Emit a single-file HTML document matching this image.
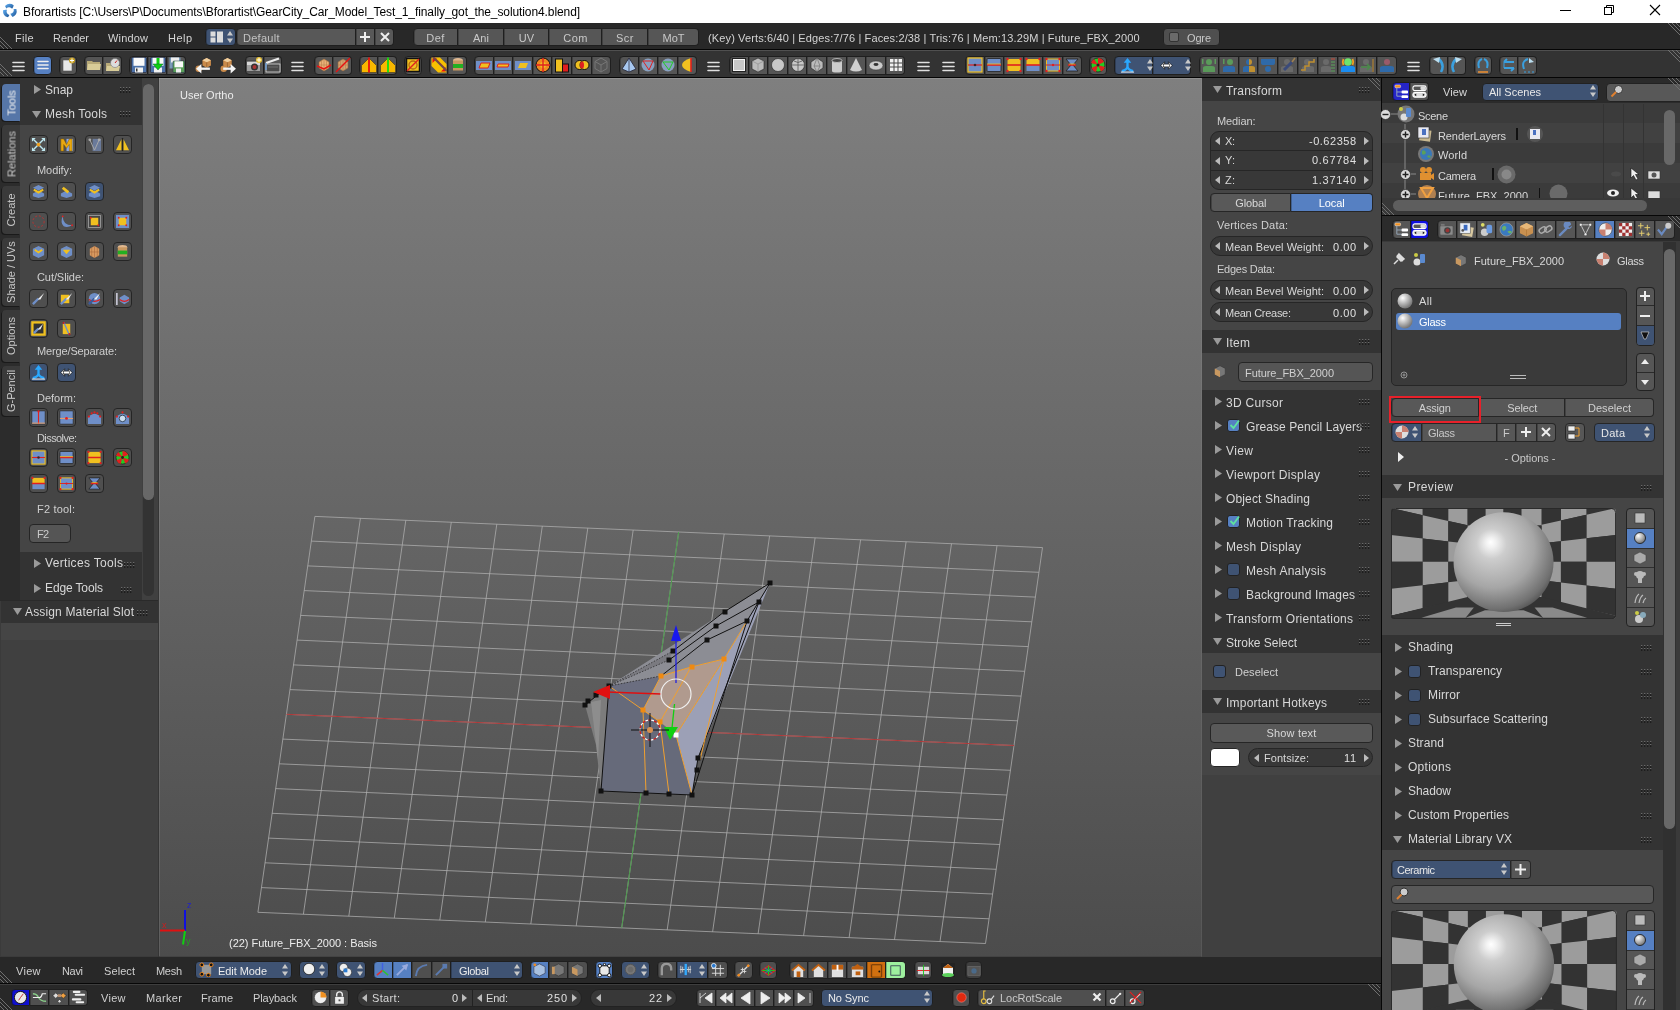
<!DOCTYPE html><html><head><meta charset="utf-8"><style>
html,body{margin:0;padding:0;}
body{width:1680px;height:1010px;overflow:hidden;position:relative;background:#3d3d3d;font-family:"Liberation Sans",sans-serif;}
div{position:absolute;box-sizing:border-box;}
.t{white-space:nowrap;line-height:1.2;-webkit-font-smoothing:antialiased;will-change:transform;}
</style></head><body>
<div style="left:0px;top:0px;width:1680px;height:23px;background:#ffffff;"></div>
<svg style="position:absolute;left:0px;top:0px;overflow:visible;" width="22" height="22" viewBox="0 0 22 22"><defs><linearGradient id="tg" x1="0" y1="0" x2="1" y2="1"><stop offset="0" stop-color="#62b0f4"/><stop offset="1" stop-color="#1a5090"/></linearGradient></defs><path d="M4.99 5.99A6.8 6.8 0 0 1 13.70 5.23Q13.48 7.12 12.10 8.87A3.6 3.6 0 0 0 6.36 8.39Z" fill="url(#tg)"/><path d="M16.37 9.04A6.8 6.8 0 0 1 12.67 16.96Q11.15 15.82 10.32 13.75A3.6 3.6 0 0 0 13.61 9.03Z" fill="url(#tg)"/><path d="M8.04 17.37A6.8 6.8 0 0 1 3.03 10.21Q4.78 9.45 6.98 9.77A3.6 3.6 0 0 0 9.43 14.98Z" fill="url(#tg)"/></svg>
<div class="t" style="left:23px;top:4.64px;font-size:12px;color:#000000;letter-spacing:-0.097px;">Bforartists [C:\Users\P\Documents\Bforartist\GearCity_Car_Model_Test_1_finally_got_the_solution4.blend]</div>
<div style="left:1560px;top:10px;width:11px;height:1px;background:#000;"></div>
<svg style="position:absolute;left:1603px;top:4px;overflow:visible;" width="12" height="12" viewBox="0 0 12 12"><rect x="1.5" y="3.5" width="7" height="7" fill="none" stroke="#000"/><path d="M3.5 3.5V1.5h7v7h-2" fill="none" stroke="#000"/></svg>
<svg style="position:absolute;left:1649px;top:4px;overflow:visible;" width="12" height="12" viewBox="0 0 12 12"><path d="M1 1L11 11M11 1L1 11" stroke="#000" stroke-width="1.1"/></svg>
<div style="left:0px;top:23px;width:1680px;height:27px;background:#282828;"></div>
<div style="left:0px;top:49px;width:1680px;height:1px;background:#050505;"></div>
<svg style="position:absolute;left:0px;top:35px;overflow:visible;" width="14" height="14" viewBox="0 0 14 14"><path d="M0 10 L4 14" stroke="#707070" stroke-width="1"/><path d="M0 6 L8 14" stroke="#707070" stroke-width="1"/><path d="M0 2 L12 14" stroke="#707070" stroke-width="1"/></svg>
<svg style="position:absolute;left:1666px;top:23px;overflow:visible;" width="14" height="14" viewBox="0 0 14 14"><path d="M10 0 L14 4" stroke="#707070" stroke-width="1"/><path d="M6 0 L14 8" stroke="#707070" stroke-width="1"/><path d="M2 0 L14 12" stroke="#707070" stroke-width="1"/></svg>
<div class="t" style="left:15px;top:31.59px;font-size:11px;color:#d4d4d4;letter-spacing:0.259px;">File</div>
<div class="t" style="left:53px;top:31.59px;font-size:11px;color:#d4d4d4;letter-spacing:-0.015px;">Render</div>
<div class="t" style="left:108px;top:31.59px;font-size:11px;color:#d4d4d4;letter-spacing:0.176px;">Window</div>
<div class="t" style="left:168px;top:31.59px;font-size:11px;color:#d4d4d4;letter-spacing:0.459px;">Help</div>
<div style="left:205px;top:28px;width:31px;height:18px;background:#3f5373;border:1px solid #1f1f1f;border-left-width:1px;border-radius:4px 4px 4px 4px;box-shadow:inset 1px 0 0 rgba(0,0,0,0.25)"></div>
<svg style="position:absolute;left:210px;top:31px;overflow:visible;" width="14" height="12" viewBox="0 0 14 12"><rect x="0.5" y="0.5" width="5" height="5" fill="#ddd"/><rect x="0.5" y="6.5" width="5" height="5" fill="#ddd"/><rect x="7" y="0.5" width="6" height="11" fill="#ddd"/></svg>
<svg style="position:absolute;left:226px;top:30px;overflow:visible;" width="8" height="14" viewBox="0 0 8 14"><path d="M4 1L7 5.5H1Z M4 13L7 8.5H1Z" fill="#c8c8c8"/></svg>
<div style="left:236px;top:28px;width:120px;height:18px;background:#585858;border:1px solid #1f1f1f;border-left-width:1px;border-radius:4px 0 0 4px;box-shadow:inset 1px 0 0 rgba(0,0,0,0.25)"></div>
<div style="left:356px;top:28px;width:19px;height:18px;background:#585858;border:1px solid #1f1f1f;border-left-width:0px;border-radius:0 0 0 0;box-shadow:inset 1px 0 0 rgba(0,0,0,0.25)"></div>
<div style="left:375px;top:28px;width:19px;height:18px;background:#585858;border:1px solid #1f1f1f;border-left-width:0px;border-radius:0 4px 4px 0;box-shadow:inset 1px 0 0 rgba(0,0,0,0.25)"></div>
<div class="t" style="left:243px;top:31.59px;font-size:11px;color:#c2c2c2;letter-spacing:0.275px;">Default</div>
<svg style="position:absolute;left:359px;top:31px;overflow:visible;" width="12" height="12" viewBox="0 0 12 12"><path d="M6 1V11M1 6H11" stroke="#eee" stroke-width="2"/></svg>
<svg style="position:absolute;left:379px;top:31px;overflow:visible;" width="12" height="12" viewBox="0 0 12 12"><path d="M2 2L10 10M10 2L2 10" stroke="#eee" stroke-width="2"/></svg>
<div style="left:413px;top:28px;width:45px;height:18px;background:#565656;border:1px solid #1f1f1f;border-left-width:1px;border-radius:4px 0 0 4px;box-shadow:inset 1px 0 0 rgba(0,0,0,0.25)"></div>
<div style="left:458px;top:28px;width:46px;height:18px;background:#565656;border:1px solid #1f1f1f;border-left-width:0px;border-radius:0 0 0 0;box-shadow:inset 1px 0 0 rgba(0,0,0,0.25)"></div>
<div style="left:504px;top:28px;width:45px;height:18px;background:#565656;border:1px solid #1f1f1f;border-left-width:0px;border-radius:0 0 0 0;box-shadow:inset 1px 0 0 rgba(0,0,0,0.25)"></div>
<div style="left:549px;top:28px;width:53px;height:18px;background:#565656;border:1px solid #1f1f1f;border-left-width:0px;border-radius:0 0 0 0;box-shadow:inset 1px 0 0 rgba(0,0,0,0.25)"></div>
<div style="left:602px;top:28px;width:46px;height:18px;background:#565656;border:1px solid #1f1f1f;border-left-width:0px;border-radius:0 0 0 0;box-shadow:inset 1px 0 0 rgba(0,0,0,0.25)"></div>
<div style="left:648px;top:28px;width:51px;height:18px;background:#565656;border:1px solid #1f1f1f;border-left-width:0px;border-radius:0 4px 4px 0;box-shadow:inset 1px 0 0 rgba(0,0,0,0.25)"></div>
<div class="t" style="left:413px;top:31.59px;width:45px;text-align:center;font-size:11px;color:#c8c8c8;letter-spacing:0.441px;">Def</div>
<div class="t" style="left:458px;top:31.59px;width:46px;text-align:center;font-size:11px;color:#c8c8c8;letter-spacing:0.051px;">Ani</div>
<div class="t" style="left:504px;top:31.59px;width:45px;text-align:center;font-size:11px;color:#c8c8c8;letter-spacing:0.219px;">UV</div>
<div class="t" style="left:549px;top:31.59px;width:53px;text-align:center;font-size:11px;color:#c8c8c8;letter-spacing:0.388px;">Com</div>
<div class="t" style="left:602px;top:31.59px;width:46px;text-align:center;font-size:11px;color:#c8c8c8;letter-spacing:0.500px;">Scr</div>
<div class="t" style="left:648px;top:31.59px;width:51px;text-align:center;font-size:11px;color:#c8c8c8;letter-spacing:0.001px;">MoT</div>
<div class="t" style="left:708px;top:31.59px;font-size:11px;color:#d4d4d4;letter-spacing:0.130px;">(Key) Verts:6/40 | Edges:7/76 | Faces:2/38 | Tris:76 | Mem:13.29M | Future_FBX_2000</div>
<div style="left:1163px;top:28px;width:57px;height:18px;background:#4f4f4f;border:1px solid #222;border-radius:4px;"></div>
<div style="left:1169px;top:32px;width:10px;height:10px;background:#6a6a6a;border-radius:2px;border:1px solid #333"></div>
<div class="t" style="left:1187px;top:31.59px;font-size:11px;color:#c8c8c8;letter-spacing:-0.151px;">Ogre</div>
<div style="left:0px;top:50px;width:1680px;height:27px;background:#333333;"></div>
<div style="left:0px;top:50px;width:1680px;height:1px;background:#505050;"></div>
<div style="left:0px;top:77px;width:1680px;height:1px;background:#050505;"></div>
<svg style="position:absolute;left:0px;top:62px;overflow:visible;" width="14" height="14" viewBox="0 0 14 14"><path d="M0 10 L4 14" stroke="#707070" stroke-width="1"/><path d="M0 6 L8 14" stroke="#707070" stroke-width="1"/><path d="M0 2 L12 14" stroke="#707070" stroke-width="1"/></svg>
<svg style="position:absolute;left:1666px;top:50px;overflow:visible;" width="14" height="14" viewBox="0 0 14 14"><path d="M10 0 L14 4" stroke="#707070" stroke-width="1"/><path d="M6 0 L14 8" stroke="#707070" stroke-width="1"/><path d="M2 0 L14 12" stroke="#707070" stroke-width="1"/></svg>
<svg style="position:absolute;left:12px;top:61px;overflow:visible;" width="13" height="11" viewBox="0 0 13 11"><path d="M1 1.5H12M1 5.5H12M1 9.5H12" stroke="#e0e0e0" stroke-width="1.6" stroke-linecap="round"/></svg>
<div style="left:33px;top:56px;width:19px;height:18.5px;background:#5680c2;border:1px solid #1f1f1f;border-left-width:1px;border-radius:4px 4px 4px 4px;box-shadow:inset 1px 0 0 rgba(0,0,0,0.25)"></div>
<svg style="position:absolute;left:34.5px;top:57.25px" width="16" height="16" viewBox="0 0 16 16"><path d="M3 4.5H13M3 8H13M3 11.5H13" stroke="#eee" stroke-width="1.6" stroke-linecap="round"/></svg>
<div style="left:59px;top:56px;width:18px;height:18.5px;background:#555555;border:1px solid #1f1f1f;border-left-width:1px;border-radius:4px 4px 4px 4px;box-shadow:inset 1px 0 0 rgba(0,0,0,0.25)"></div>
<svg style="position:absolute;left:60.0px;top:57.25px" width="16" height="16" viewBox="0 0 16 16"><path d="M3 3H10L12 5V14H3Z" fill="#e8e8e8" stroke="#555" stroke-width="0.6"/><circle cx="12" cy="3.5" r="3" fill="#c8a020"/><path d="M12 1.5V5.5M10 3.5H14" stroke="#fff" stroke-width="1"/></svg>
<div style="left:84px;top:56px;width:19px;height:18.5px;background:#555555;border:1px solid #1f1f1f;border-left-width:1px;border-radius:4px 0 0 4px;box-shadow:inset 1px 0 0 rgba(0,0,0,0.25)"></div>
<div style="left:103px;top:56px;width:19px;height:18.5px;background:#555555;border:1px solid #1f1f1f;border-left-width:0px;border-radius:0 4px 4px 0;box-shadow:inset 1px 0 0 rgba(0,0,0,0.25)"></div>
<svg style="position:absolute;left:85.5px;top:57.25px" width="16" height="16" viewBox="0 0 16 16"><path d="M1 4H6L7 5H14V13H1Z" fill="#b8aa78"/><path d="M2 7H15L14 13H1Z" fill="#d8cc98"/></svg>
<svg style="position:absolute;left:104.5px;top:57.25px" width="16" height="16" viewBox="0 0 16 16"><path d="M1 6H6L7 7H14V14H1Z" fill="#b8aa78"/><path d="M2 9H15L14 14H1Z" fill="#d8cc98"/><circle cx="10" cy="6" r="4.5" fill="#ddd" stroke="#777" stroke-width="0.6"/><path d="M10 6L12 3.5" stroke="#c22" stroke-width="1"/></svg>
<div style="left:129px;top:56px;width:19px;height:18.5px;background:#555555;border:1px solid #1f1f1f;border-left-width:1px;border-radius:4px 0 0 4px;box-shadow:inset 1px 0 0 rgba(0,0,0,0.25)"></div>
<div style="left:148px;top:56px;width:19px;height:18.5px;background:#555555;border:1px solid #1f1f1f;border-left-width:0px;border-radius:0 0 0 0;box-shadow:inset 1px 0 0 rgba(0,0,0,0.25)"></div>
<div style="left:167px;top:56px;width:19px;height:18.5px;background:#555555;border:1px solid #1f1f1f;border-left-width:0px;border-radius:0 4px 4px 0;box-shadow:inset 1px 0 0 rgba(0,0,0,0.25)"></div>
<svg style="position:absolute;left:130.5px;top:57.25px" width="16" height="16" viewBox="0 0 16 16"><rect x="0.5" y="0.5" width="15" height="15" rx="1" fill="#4d72a8" stroke="#223" stroke-width="0.6"/><rect x="2.5" y="0.8" width="11" height="8" fill="#fafafa"/><rect x="4" y="10.5" width="8" height="5" fill="#f0f0f0"/><rect x="5" y="11.5" width="1.5" height="3" fill="#333"/></svg>
<svg style="position:absolute;left:149.5px;top:57.25px" width="16" height="16" viewBox="0 0 16 16"><rect x="0.5" y="0.5" width="15" height="15" rx="1" fill="#4d72a8" stroke="#223" stroke-width="0.6"/><rect x="2.5" y="0.8" width="11" height="8" fill="#fafafa"/><rect x="4" y="10.5" width="8" height="5" fill="#f0f0f0"/><path d="M8 1V10" stroke="#10d010" stroke-width="3"/><path d="M3 7L8 13L13 7Z" fill="#10d010" stroke="#063" stroke-width="0.5"/></svg>
<svg style="position:absolute;left:168.5px;top:57.25px" width="16" height="16" viewBox="0 0 16 16"><rect x="0.5" y="0.5" width="11" height="11" fill="#7a9ab8"/><rect x="2" y="0.5" width="8" height="5" fill="#eee"/><rect x="4" y="4" width="11.5" height="11.5" rx="1" fill="#5aa05a" stroke="#234" stroke-width="0.5"/><rect x="5.5" y="4.3" width="8.5" height="6" fill="#fafafa"/><rect x="7" y="11.5" width="5" height="4" fill="#eee"/></svg>
<svg style="position:absolute;left:195px;top:57px" width="17" height="17" viewBox="0 0 16 16"><path d="M7 3L11 1L15 3V8L11 10L7 8Z" fill="#c98a4a"/><path d="M7 3L11 5L15 3L11 1Z" fill="#f0d0a0"/><path d="M11 5V10" stroke="#8a5a2a" stroke-width="0.6"/><circle cx="3.5" cy="11" r="3" fill="#c98a4a"/><path d="M14 11H4" stroke="#f4f4f4" stroke-width="2.2"/><path d="M1 11L6 6.5V15.5Z" fill="#f4f4f4"/></svg>
<svg style="position:absolute;left:220px;top:57px" width="17" height="17" viewBox="0 0 16 16"><path d="M3 3L7 1L11 3V8L7 10L3 8Z" fill="#c98a4a"/><path d="M3 3L7 5L11 3L7 1Z" fill="#f0d0a0"/><path d="M7 5V10" stroke="#8a5a2a" stroke-width="0.6"/><circle cx="3.5" cy="11" r="3" fill="#c98a4a"/><path d="M3 11H12" stroke="#f4f4f4" stroke-width="2.2"/><path d="M15 11L10 6.5V15.5Z" fill="#f4f4f4"/></svg>
<div style="left:245px;top:56px;width:18.5px;height:18.5px;background:#555555;border:1px solid #1f1f1f;border-left-width:1px;border-radius:4px 0 0 4px;box-shadow:inset 1px 0 0 rgba(0,0,0,0.25)"></div>
<div style="left:263.5px;top:56px;width:18.5px;height:18.5px;background:#555555;border:1px solid #1f1f1f;border-left-width:0px;border-radius:0 4px 4px 0;box-shadow:inset 1px 0 0 rgba(0,0,0,0.25)"></div>
<svg style="position:absolute;left:246.25px;top:57.25px" width="16" height="16" viewBox="0 0 16 16"><rect x="0.5" y="4" width="14" height="10.5" rx="1" fill="#a0a0a0" stroke="#333" stroke-width="0.6"/><rect x="1" y="5" width="13" height="3" fill="#d8d8d8"/><circle cx="8.5" cy="10" r="3.5" fill="#333"/><circle cx="8.5" cy="10" r="2" fill="#a33"/><circle cx="13" cy="3" r="3" fill="#e8c030"/><path d="M13 0.8V5.2M10.8 3H15.2" stroke="#fff" stroke-width="1"/></svg>
<svg style="position:absolute;left:264.75px;top:57.25px" width="16" height="16" viewBox="0 0 16 16"><rect x="1" y="7" width="14" height="8" fill="#4a4a4a" stroke="#ddd" stroke-width="0.8"/><path d="M1 6L14 1.5" stroke="#eee" stroke-width="2.2"/><path d="M1 6V13" stroke="#6a9ad0" stroke-width="1.5"/><path d="M3 10H13" stroke="#888" stroke-width="0.6"/></svg>
<svg style="position:absolute;left:291px;top:61px;overflow:visible;" width="13" height="11" viewBox="0 0 13 11"><path d="M1 1.5H12M1 5.5H12M1 9.5H12" stroke="#e0e0e0" stroke-width="1.6" stroke-linecap="round"/></svg>
<div style="left:314px;top:56px;width:19px;height:18.5px;background:#555555;border:1px solid #1f1f1f;border-left-width:1px;border-radius:4px 0 0 4px;box-shadow:inset 1px 0 0 rgba(0,0,0,0.25)"></div>
<div style="left:333px;top:56px;width:19px;height:18.5px;background:#555555;border:1px solid #1f1f1f;border-left-width:0px;border-radius:0 4px 4px 0;box-shadow:inset 1px 0 0 rgba(0,0,0,0.25)"></div>
<svg style="position:absolute;left:315.5px;top:57.25px" width="16" height="16" viewBox="0 0 16 16"><path d="M3 5L8 2L13 5V11L8 14L3 11Z" fill="#e8b078" stroke="#9a6a3a" stroke-width="0.6"/><path d="M3 8H13M8 2V14M5.5 3.5V12.5M10.5 3.5V12.5" stroke="#b8804a" stroke-width="0.6"/><path d="M1 9L8 12L15 8" stroke="#e81010" stroke-width="1.5" fill="none"/></svg>
<svg style="position:absolute;left:334.5px;top:57.25px" width="16" height="16" viewBox="0 0 16 16"><path d="M3 5L8 2L13 5V11L8 14L3 11Z" fill="#e8b078" stroke="#9a6a3a" stroke-width="0.6" opacity="0.85"/><path d="M3 8H13M8 2V14M5.5 3.5V12.5M10.5 3.5V12.5" stroke="#b8804a" stroke-width="0.6"/><path d="M1 15L15 1" stroke="#e81010" stroke-width="1.4"/></svg>
<div style="left:359px;top:56px;width:19px;height:18.5px;background:#555555;border:1px solid #1f1f1f;border-left-width:1px;border-radius:4px 0 0 4px;box-shadow:inset 1px 0 0 rgba(0,0,0,0.25)"></div>
<div style="left:378px;top:56px;width:19px;height:18.5px;background:#555555;border:1px solid #1f1f1f;border-left-width:0px;border-radius:0 4px 4px 0;box-shadow:inset 1px 0 0 rgba(0,0,0,0.25)"></div>
<svg style="position:absolute;left:360.5px;top:57.25px" width="16" height="16" viewBox="0 0 16 16"><path d="M0.5 15.5V8.5L8 1L15.5 8.5V15.5Z" fill="#f8b800" stroke="#222" stroke-width="0.5"/><path d="M8 0.5V15.5" stroke="#e81010" stroke-width="1.8"/></svg>
<svg style="position:absolute;left:379.5px;top:57.25px" width="16" height="16" viewBox="0 0 16 16"><path d="M0.5 15.5V8.5L8 1L15.5 8.5V15.5Z" fill="#f8b800" stroke="#222" stroke-width="0.5"/><path d="M8 0.5V15.5" stroke="#10e010" stroke-width="1.8"/></svg>
<div style="left:404px;top:56px;width:18px;height:18.5px;background:#555555;border:1px solid #1f1f1f;border-left-width:1px;border-radius:4px 4px 4px 4px;box-shadow:inset 1px 0 0 rgba(0,0,0,0.25)"></div>
<svg style="position:absolute;left:405.0px;top:57.25px" width="16" height="16" viewBox="0 0 16 16"><rect x="1.5" y="1.5" width="13" height="13" fill="#f0c020" stroke="#111" stroke-width="1.5"/><circle cx="8" cy="8" r="4" fill="none" stroke="#b86a10" stroke-width="1.3"/><path d="M2 14L14 2" stroke="#e02020" stroke-width="1.5"/></svg>
<div style="left:429px;top:56px;width:19px;height:18.5px;background:#555555;border:1px solid #1f1f1f;border-left-width:1px;border-radius:4px 0 0 4px;box-shadow:inset 1px 0 0 rgba(0,0,0,0.25)"></div>
<div style="left:448px;top:56px;width:19px;height:18.5px;background:#555555;border:1px solid #1f1f1f;border-left-width:0px;border-radius:0 4px 4px 0;box-shadow:inset 1px 0 0 rgba(0,0,0,0.25)"></div>
<svg style="position:absolute;left:430.5px;top:57.25px" width="16" height="16" viewBox="0 0 16 16"><path d="M0.5 0.5H9L15.5 7V15.5H7L0.5 9Z" fill="#f8c000"/><path d="M1.5 1.5H6L1.5 6Z M14.5 14.5H10L14.5 10Z" fill="#e81010"/><path d="M2 0L16 14" stroke="#555" stroke-width="2.2"/><path d="M2.5 0L16 13.5" stroke="#e81010" stroke-width="0.6"/></svg>
<svg style="position:absolute;left:449.5px;top:57.25px" width="16" height="16" viewBox="0 0 16 16"><ellipse cx="8" cy="3.5" rx="5" ry="2.5" fill="#e0b890"/><rect x="3" y="3.5" width="10" height="10" fill="#c89860"/><rect x="3" y="7" width="10" height="4" fill="#22b022"/></svg>
<div style="left:474px;top:56px;width:19.6px;height:18.5px;background:#555555;border:1px solid #1f1f1f;border-left-width:1px;border-radius:4px 0 0 4px;box-shadow:inset 1px 0 0 rgba(0,0,0,0.25)"></div>
<div style="left:493.6px;top:56px;width:19.6px;height:18.5px;background:#555555;border:1px solid #1f1f1f;border-left-width:0px;border-radius:0 0 0 0;box-shadow:inset 1px 0 0 rgba(0,0,0,0.25)"></div>
<div style="left:513.2px;top:56px;width:19.6px;height:18.5px;background:#555555;border:1px solid #1f1f1f;border-left-width:0px;border-radius:0 0 0 0;box-shadow:inset 1px 0 0 rgba(0,0,0,0.25)"></div>
<div style="left:532.8000000000001px;top:56px;width:19.6px;height:18.5px;background:#555555;border:1px solid #1f1f1f;border-left-width:0px;border-radius:0 0 0 0;box-shadow:inset 1px 0 0 rgba(0,0,0,0.25)"></div>
<div style="left:552.4000000000001px;top:56px;width:19.6px;height:18.5px;background:#555555;border:1px solid #1f1f1f;border-left-width:0px;border-radius:0 0 0 0;box-shadow:inset 1px 0 0 rgba(0,0,0,0.25)"></div>
<div style="left:572.0000000000001px;top:56px;width:19.6px;height:18.5px;background:#555555;border:1px solid #1f1f1f;border-left-width:0px;border-radius:0 0 0 0;box-shadow:inset 1px 0 0 rgba(0,0,0,0.25)"></div>
<div style="left:591.6000000000001px;top:56px;width:19.6px;height:18.5px;background:#555555;border:1px solid #1f1f1f;border-left-width:0px;border-radius:0 4px 4px 0;box-shadow:inset 1px 0 0 rgba(0,0,0,0.25)"></div>
<svg style="position:absolute;left:475.8px;top:57.25px" width="16" height="16" viewBox="0 0 16 16"><rect x="0" y="4" width="16" height="9" fill="#6f8fc8"/><path d="M3 11L5 6H14L12 11Z" fill="#f0c020" stroke="#e02020" stroke-width="1"/></svg>
<svg style="position:absolute;left:495.40000000000003px;top:57.25px" width="16" height="16" viewBox="0 0 16 16"><rect x="0" y="4" width="16" height="9" fill="#6f8fc8"/><path d="M2 10L3 7H14L13 10Z" fill="#f0c020" stroke="#e02020" stroke-width="1"/></svg>
<svg style="position:absolute;left:515.0px;top:57.25px" width="16" height="16" viewBox="0 0 16 16"><rect x="0" y="4" width="16" height="9" fill="#6f8fc8"/><path d="M3 11L5 6H13L11 11Z" fill="#f0c020"/></svg>
<svg style="position:absolute;left:534.6px;top:57.25px" width="16" height="16" viewBox="0 0 16 16"><circle cx="8" cy="8" r="7" fill="#f08a20" stroke="#111" stroke-width="1"/><circle cx="8" cy="8" r="3" fill="#f0c020"/><path d="M8 1V15M1 8H15" stroke="#e02020" stroke-width="1.4"/></svg>
<svg style="position:absolute;left:554.2px;top:57.25px" width="16" height="16" viewBox="0 0 16 16"><rect x="1.5" y="2" width="7" height="13" fill="#f0c020" stroke="#111" stroke-width="1"/><rect x="8.5" y="7" width="6" height="8" fill="#e02020" stroke="#111" stroke-width="1"/></svg>
<svg style="position:absolute;left:573.8000000000001px;top:57.25px" width="16" height="16" viewBox="0 0 16 16"><circle cx="5.5" cy="8" r="4.5" fill="#f0c020" stroke="#111" stroke-width="1"/><circle cx="10.5" cy="8" r="4.5" fill="#f0c020" stroke="#111" stroke-width="1"/><ellipse cx="8" cy="8" rx="2" ry="3.5" fill="#e02020"/></svg>
<svg style="position:absolute;left:593.4000000000001px;top:57.25px" width="16" height="16" viewBox="0 0 16 16"><path d="M8 1L14 4.5V11.5L8 15L2 11.5V4.5Z M2 4.5L8 8L14 4.5 M8 8V15" stroke="#777" stroke-width="1" fill="none"/></svg>
<div style="left:619px;top:56px;width:19.5px;height:18.5px;background:#555555;border:1px solid #1f1f1f;border-left-width:1px;border-radius:4px 0 0 4px;box-shadow:inset 1px 0 0 rgba(0,0,0,0.25)"></div>
<div style="left:638.5px;top:56px;width:19.5px;height:18.5px;background:#555555;border:1px solid #1f1f1f;border-left-width:0px;border-radius:0 0 0 0;box-shadow:inset 1px 0 0 rgba(0,0,0,0.25)"></div>
<div style="left:658.0px;top:56px;width:19.5px;height:18.5px;background:#555555;border:1px solid #1f1f1f;border-left-width:0px;border-radius:0 0 0 0;box-shadow:inset 1px 0 0 rgba(0,0,0,0.25)"></div>
<div style="left:677.5px;top:56px;width:19.5px;height:18.5px;background:#555555;border:1px solid #1f1f1f;border-left-width:0px;border-radius:0 4px 4px 0;box-shadow:inset 1px 0 0 rgba(0,0,0,0.25)"></div>
<svg style="position:absolute;left:620.75px;top:57.25px" width="16" height="16" viewBox="0 0 16 16"><path d="M8 1L15 12L8 15L1 12Z" fill="#a8c8f0" stroke="#223" stroke-width="0.8"/><path d="M8 1V15" stroke="#334" stroke-width="0.8"/></svg>
<svg style="position:absolute;left:640.25px;top:57.25px" width="16" height="16" viewBox="0 0 16 16"><circle cx="8" cy="8" r="6.5" fill="#88a0c0"/><path d="M3 4L13 4L9 13Z" stroke="#e02020" stroke-width="1" fill="none"/></svg>
<svg style="position:absolute;left:659.75px;top:57.25px" width="16" height="16" viewBox="0 0 16 16"><circle cx="8" cy="8" r="6.5" fill="#88a0c0"/><path d="M3 5L13 5L9 13Z" stroke="#22cc22" stroke-width="1" fill="none"/></svg>
<svg style="position:absolute;left:679.25px;top:57.25px" width="16" height="16" viewBox="0 0 16 16"><path d="M12 1Q3 4 3 8Q3 12 12 15Z" fill="#f0c020"/><path d="M12 1V15" stroke="#e02020" stroke-width="1.6"/></svg>
<svg style="position:absolute;left:707px;top:61px;overflow:visible;" width="13" height="11" viewBox="0 0 13 11"><path d="M1 1.5H12M1 5.5H12M1 9.5H12" stroke="#e0e0e0" stroke-width="1.6" stroke-linecap="round"/></svg>
<div style="left:729px;top:56px;width:19.6px;height:18.5px;background:#555555;border:1px solid #1f1f1f;border-left-width:1px;border-radius:4px 0 0 4px;box-shadow:inset 1px 0 0 rgba(0,0,0,0.25)"></div>
<div style="left:748.6px;top:56px;width:19.6px;height:18.5px;background:#555555;border:1px solid #1f1f1f;border-left-width:0px;border-radius:0 0 0 0;box-shadow:inset 1px 0 0 rgba(0,0,0,0.25)"></div>
<div style="left:768.2px;top:56px;width:19.6px;height:18.5px;background:#555555;border:1px solid #1f1f1f;border-left-width:0px;border-radius:0 0 0 0;box-shadow:inset 1px 0 0 rgba(0,0,0,0.25)"></div>
<div style="left:787.8000000000001px;top:56px;width:19.6px;height:18.5px;background:#555555;border:1px solid #1f1f1f;border-left-width:0px;border-radius:0 0 0 0;box-shadow:inset 1px 0 0 rgba(0,0,0,0.25)"></div>
<div style="left:807.4000000000001px;top:56px;width:19.6px;height:18.5px;background:#555555;border:1px solid #1f1f1f;border-left-width:0px;border-radius:0 0 0 0;box-shadow:inset 1px 0 0 rgba(0,0,0,0.25)"></div>
<div style="left:827.0000000000001px;top:56px;width:19.6px;height:18.5px;background:#555555;border:1px solid #1f1f1f;border-left-width:0px;border-radius:0 0 0 0;box-shadow:inset 1px 0 0 rgba(0,0,0,0.25)"></div>
<div style="left:846.6000000000001px;top:56px;width:19.6px;height:18.5px;background:#555555;border:1px solid #1f1f1f;border-left-width:0px;border-radius:0 0 0 0;box-shadow:inset 1px 0 0 rgba(0,0,0,0.25)"></div>
<div style="left:866.2000000000002px;top:56px;width:19.6px;height:18.5px;background:#555555;border:1px solid #1f1f1f;border-left-width:0px;border-radius:0 0 0 0;box-shadow:inset 1px 0 0 rgba(0,0,0,0.25)"></div>
<div style="left:885.8000000000002px;top:56px;width:19.6px;height:18.5px;background:#555555;border:1px solid #1f1f1f;border-left-width:0px;border-radius:0 4px 4px 0;box-shadow:inset 1px 0 0 rgba(0,0,0,0.25)"></div>
<svg style="position:absolute;left:730.8px;top:57.25px" width="16" height="16" viewBox="0 0 16 16"><rect x="1.5" y="1.5" width="13" height="13" fill="#f4f4f4" stroke="#222" stroke-width="1"/><rect x="3" y="3" width="10" height="10" fill="#c8c8c8"/></svg>
<svg style="position:absolute;left:750.4px;top:57.25px" width="16" height="16" viewBox="0 0 16 16"><path d="M8 1L14 4V12L8 15L2 12V4Z" fill="#bbb" stroke="#222" stroke-width="0.6"/><path d="M2 4L8 7L14 4M8 7V15" stroke="#888" stroke-width="0.6" fill="none"/></svg>
<svg style="position:absolute;left:770.0px;top:57.25px" width="16" height="16" viewBox="0 0 16 16"><circle cx="8" cy="8" r="6.5" fill="#c8c8c8" stroke="#222" stroke-width="0.6"/></svg>
<svg style="position:absolute;left:789.6px;top:57.25px" width="16" height="16" viewBox="0 0 16 16"><circle cx="8" cy="8" r="6.5" fill="#c8c8c8" stroke="#222" stroke-width="0.6"/><path d="M8 1.5V14.5M2 8H14M4 4Q8 7 12 4" stroke="#555" stroke-width="0.8" fill="none"/></svg>
<svg style="position:absolute;left:809.2px;top:57.25px" width="16" height="16" viewBox="0 0 16 16"><path d="M8 1L14 5V11L8 15L2 11V5Z" fill="#bbb" stroke="#222" stroke-width="0.6"/><path d="M8 1L5 9H11Z M5 9L8 15L11 9" stroke="#666" stroke-width="0.6" fill="none"/></svg>
<svg style="position:absolute;left:828.8000000000001px;top:57.25px" width="16" height="16" viewBox="0 0 16 16"><rect x="3" y="3" width="10" height="11" fill="#ccc"/><ellipse cx="8" cy="3.5" rx="5" ry="2" fill="#444" stroke="#ccc" stroke-width="0.8"/><ellipse cx="8" cy="14" rx="5" ry="1.5" fill="#ccc"/></svg>
<svg style="position:absolute;left:848.4000000000001px;top:57.25px" width="16" height="16" viewBox="0 0 16 16"><path d="M8 1L14 13Q8 16 2 13Z" fill="#d0d0d0"/></svg>
<svg style="position:absolute;left:868.0000000000001px;top:57.25px" width="16" height="16" viewBox="0 0 16 16"><ellipse cx="8" cy="8.5" rx="7" ry="4.5" fill="#ccc" stroke="#333" stroke-width="0.5"/><ellipse cx="8" cy="7.5" rx="2.5" ry="1.4" fill="#333"/></svg>
<svg style="position:absolute;left:887.6000000000001px;top:57.25px" width="16" height="16" viewBox="0 0 16 16"><rect x="2" y="2" width="12" height="12" fill="#f0f0f0"/><path d="M6 2V14M10 2V14M2 6H14M2 10H14" stroke="#444" stroke-width="1"/></svg>
<svg style="position:absolute;left:917px;top:61px;overflow:visible;" width="13" height="11" viewBox="0 0 13 11"><path d="M1 1.5H12M1 5.5H12M1 9.5H12" stroke="#e0e0e0" stroke-width="1.6" stroke-linecap="round"/></svg>
<svg style="position:absolute;left:942px;top:61px;overflow:visible;" width="13" height="11" viewBox="0 0 13 11"><path d="M1 1.5H12M1 5.5H12M1 9.5H12" stroke="#e0e0e0" stroke-width="1.6" stroke-linecap="round"/></svg>
<div style="left:965px;top:56px;width:19.5px;height:18.5px;background:#555555;border:1px solid #1f1f1f;border-left-width:1px;border-radius:4px 0 0 4px;box-shadow:inset 1px 0 0 rgba(0,0,0,0.25)"></div>
<div style="left:984.5px;top:56px;width:19.5px;height:18.5px;background:#555555;border:1px solid #1f1f1f;border-left-width:0px;border-radius:0 0 0 0;box-shadow:inset 1px 0 0 rgba(0,0,0,0.25)"></div>
<div style="left:1004.0px;top:56px;width:19.5px;height:18.5px;background:#555555;border:1px solid #1f1f1f;border-left-width:0px;border-radius:0 0 0 0;box-shadow:inset 1px 0 0 rgba(0,0,0,0.25)"></div>
<div style="left:1023.5px;top:56px;width:19.5px;height:18.5px;background:#555555;border:1px solid #1f1f1f;border-left-width:0px;border-radius:0 0 0 0;box-shadow:inset 1px 0 0 rgba(0,0,0,0.25)"></div>
<div style="left:1043.0px;top:56px;width:19.5px;height:18.5px;background:#555555;border:1px solid #1f1f1f;border-left-width:0px;border-radius:0 0 0 0;box-shadow:inset 1px 0 0 rgba(0,0,0,0.25)"></div>
<div style="left:1062.5px;top:56px;width:19.5px;height:18.5px;background:#555555;border:1px solid #1f1f1f;border-left-width:0px;border-radius:0 4px 4px 0;box-shadow:inset 1px 0 0 rgba(0,0,0,0.25)"></div>
<svg style="position:absolute;left:966.75px;top:57.25px" width="16" height="16" viewBox="0 0 16 16"><rect x="1" y="1" width="14" height="14" fill="#6f8fc8" stroke="#f0c020" stroke-width="1.2"/><path d="M1 8H15" stroke="#e02020" stroke-width="1.2"/><circle cx="8" cy="8" r="1.3" fill="#422"/></svg>
<svg style="position:absolute;left:986.25px;top:57.25px" width="16" height="16" viewBox="0 0 16 16"><rect x="1" y="1.5" width="14" height="13" rx="1" fill="#6f8fc8" stroke="#222" stroke-width="0.8"/><path d="M1 8H15" stroke="#e02020" stroke-width="1.6"/><path d="M1 7H15" stroke="#f0c020" stroke-width="0.8"/></svg>
<svg style="position:absolute;left:1005.75px;top:57.25px" width="16" height="16" viewBox="0 0 16 16"><rect x="1.5" y="2" width="13" height="12" fill="#f0c020"/><path d="M1 8H15" stroke="#e02020" stroke-width="1.6"/><circle cx="1.5" cy="2" r="1.2" fill="#e02020"/><circle cx="14.5" cy="2" r="1.2" fill="#e02020"/><circle cx="1.5" cy="14" r="1.2" fill="#e02020"/><circle cx="14.5" cy="14" r="1.2" fill="#e02020"/></svg>
<svg style="position:absolute;left:1025.25px;top:57.25px" width="16" height="16" viewBox="0 0 16 16"><rect x="1.5" y="8" width="13" height="6" fill="#6f8fc8"/><rect x="1.5" y="2" width="13" height="6" fill="#f0c020"/><path d="M1 8H15" stroke="#e02020" stroke-width="1.6"/><circle cx="1.5" cy="2" r="1.2" fill="#e02020"/><circle cx="14.5" cy="2" r="1.2" fill="#e02020"/></svg>
<svg style="position:absolute;left:1044.75px;top:57.25px" width="16" height="16" viewBox="0 0 16 16"><rect x="1.5" y="2" width="13" height="12" fill="#6f8fc8" stroke="#f0c020" stroke-width="1"/><path d="M1 8H15" stroke="#e02020" stroke-width="1"/><circle cx="1.5" cy="2" r="1.2" fill="#e02020"/><circle cx="14.5" cy="2" r="1.2" fill="#e02020"/><circle cx="1.5" cy="14" r="1.2" fill="#e02020"/><circle cx="14.5" cy="14" r="1.2" fill="#e02020"/><circle cx="8" cy="8" r="1.2" fill="#e02020"/></svg>
<svg style="position:absolute;left:1064.25px;top:57.25px" width="16" height="16" viewBox="0 0 16 16"><path d="M2 2H14L9 8L14 14H2L7 8Z" fill="#6f8fc8" stroke="#222" stroke-width="0.8"/><path d="M4 8H12" stroke="#e02020" stroke-width="1.6"/><path d="M5 7H11" stroke="#f0c020" stroke-width="0.8"/></svg>
<div style="left:1089px;top:56px;width:18px;height:18.5px;background:#555555;border:1px solid #1f1f1f;border-left-width:1px;border-radius:4px 4px 4px 4px;box-shadow:inset 1px 0 0 rgba(0,0,0,0.25)"></div>
<svg style="position:absolute;left:1090.0px;top:57.25px" width="16" height="16" viewBox="0 0 16 16"><circle cx="8" cy="8" r="7" fill="#22cc22" stroke="#222" stroke-width="0.8"/><path d="M8 8L8 1A7 7 0 0 1 14 5Z M8 8L15 10A7 7 0 0 1 11 14.5Z M8 8L6 15A7 7 0 0 1 1.5 11Z M8 8L1 6A7 7 0 0 1 4 2Z" fill="#e02020"/><circle cx="8" cy="8" r="1.5" fill="#222"/></svg>
<div style="left:1114px;top:56px;width:39px;height:18.5px;background:#3f5373;border:1px solid #1f1f1f;border-left-width:1px;border-radius:4px 0 0 4px;box-shadow:inset 1px 0 0 rgba(0,0,0,0.25)"></div>
<div style="left:1153px;top:56px;width:38px;height:18.5px;background:#3f5373;border:1px solid #1f1f1f;border-left-width:0px;border-radius:0 4px 4px 0;box-shadow:inset 1px 0 0 rgba(0,0,0,0.25)"></div>
<svg style="position:absolute;left:1120px;top:58px" width="15" height="15" viewBox="0 0 16 16"><path d="M8 2V9Q8 12 2 14M8 9Q8 12 14 14" stroke="#2aa8ff" stroke-width="2.5" fill="none"/><path d="M8 0L12 5H4Z" fill="#2aa8ff"/><path d="M1 15H15" stroke="#fff" stroke-width="1"/></svg>
<svg style="position:absolute;left:1146px;top:58px;overflow:visible;" width="8" height="14" viewBox="0 0 8 14"><path d="M4 1L7 5.5H1Z M4 13L7 8.5H1Z" fill="#c8c8c8"/></svg>
<svg style="position:absolute;left:1159px;top:58px" width="15" height="15" viewBox="0 0 16 16"><path d="M2 8L6 4V12Z M14 8L10 4V12Z" fill="#fff" stroke="#111" stroke-width="0.8"/><rect x="5" y="6.5" width="6" height="3" fill="#fff" stroke="#111" stroke-width="0.6"/></svg>
<svg style="position:absolute;left:1184px;top:58px;overflow:visible;" width="8" height="14" viewBox="0 0 8 14"><path d="M4 1L7 5.5H1Z M4 13L7 8.5H1Z" fill="#c8c8c8"/></svg>
<div style="left:1199px;top:56px;width:19.8px;height:18.5px;background:#555555;border:1px solid #1f1f1f;border-left-width:1px;border-radius:4px 0 0 4px;box-shadow:inset 1px 0 0 rgba(0,0,0,0.25)"></div>
<div style="left:1218.8px;top:56px;width:19.8px;height:18.5px;background:#555555;border:1px solid #1f1f1f;border-left-width:0px;border-radius:0 0 0 0;box-shadow:inset 1px 0 0 rgba(0,0,0,0.25)"></div>
<div style="left:1238.6px;top:56px;width:19.8px;height:18.5px;background:#555555;border:1px solid #1f1f1f;border-left-width:0px;border-radius:0 0 0 0;box-shadow:inset 1px 0 0 rgba(0,0,0,0.25)"></div>
<div style="left:1258.3999999999999px;top:56px;width:19.8px;height:18.5px;background:#555555;border:1px solid #1f1f1f;border-left-width:0px;border-radius:0 0 0 0;box-shadow:inset 1px 0 0 rgba(0,0,0,0.25)"></div>
<div style="left:1278.1999999999998px;top:56px;width:19.8px;height:18.5px;background:#555555;border:1px solid #1f1f1f;border-left-width:0px;border-radius:0 0 0 0;box-shadow:inset 1px 0 0 rgba(0,0,0,0.25)"></div>
<div style="left:1297.9999999999998px;top:56px;width:19.8px;height:18.5px;background:#555555;border:1px solid #1f1f1f;border-left-width:0px;border-radius:0 0 0 0;box-shadow:inset 1px 0 0 rgba(0,0,0,0.25)"></div>
<div style="left:1317.7999999999997px;top:56px;width:19.8px;height:18.5px;background:#555555;border:1px solid #1f1f1f;border-left-width:0px;border-radius:0 0 0 0;box-shadow:inset 1px 0 0 rgba(0,0,0,0.25)"></div>
<div style="left:1337.5999999999997px;top:56px;width:19.8px;height:18.5px;background:#565656;border:1px solid #1f1f1f;border-left-width:0px;border-radius:0 0 0 0;box-shadow:inset 1px 0 0 rgba(0,0,0,0.25)"></div>
<div style="left:1357.3999999999996px;top:56px;width:19.8px;height:18.5px;background:#555555;border:1px solid #1f1f1f;border-left-width:0px;border-radius:0 0 0 0;box-shadow:inset 1px 0 0 rgba(0,0,0,0.25)"></div>
<div style="left:1377.1999999999996px;top:56px;width:19.8px;height:18.5px;background:#555555;border:1px solid #1f1f1f;border-left-width:0px;border-radius:0 4px 4px 0;box-shadow:inset 1px 0 0 rgba(0,0,0,0.25)"></div>
<svg style="position:absolute;left:1200.9px;top:57.25px" width="16" height="16" viewBox="0 0 16 16"><circle cx="8" cy="5" r="3" fill="#5a9a5a"/><path d="M2 15V11Q2 9 5 9H11Q14 9 14 11V15Z" fill="#5a9a5a"/><rect x="1" y="2" width="1.5" height="5" fill="#5a9a5a"/><rect x="13.5" y="2" width="1.5" height="5" fill="#5a9a5a"/></svg>
<svg style="position:absolute;left:1220.7px;top:57.25px" width="16" height="16" viewBox="0 0 16 16"><circle cx="9" cy="5" r="3" fill="#5a9a5a"/><path d="M2 15V11Q2 9 5 9H11Q14 9 14 11V15Z" fill="#2f6aaa"/><rect x="2" y="2" width="1.5" height="5" fill="#5a9a5a"/></svg>
<svg style="position:absolute;left:1240.5px;top:57.25px" width="16" height="16" viewBox="0 0 16 16"><path d="M8 2A3 3 0 0 0 8 8Z" fill="#2f6aaa"/><path d="M8 2A3 3 0 0 1 8 8Z" fill="#c09030"/><path d="M2 15V11Q2 9 5 9H8V15Z" fill="#2f6aaa"/><path d="M8 9H11Q14 9 14 11V15H8Z" fill="#c09030"/></svg>
<svg style="position:absolute;left:1260.3px;top:57.25px" width="16" height="16" viewBox="0 0 16 16"><path d="M1 2H15V6Q15 8 12 8H4Q1 8 1 6Z" fill="#2f6aaa"/><circle cx="8" cy="12" r="3" fill="#2f6aaa"/></svg>
<svg style="position:absolute;left:1280.1px;top:57.25px" width="16" height="16" viewBox="0 0 16 16"><circle cx="7" cy="5" r="3" fill="#6a6a6a"/><path d="M1 15V11Q1 9 4 9H10Q13 9 13 11V15Z" fill="#6a6a6a"/><path d="M4 13L12 5" stroke="#3a4a7a" stroke-width="3"/><path d="M12 5L15 1" stroke="#a08050" stroke-width="1.5"/></svg>
<svg style="position:absolute;left:1299.8999999999999px;top:57.25px" width="16" height="16" viewBox="0 0 16 16"><circle cx="7" cy="5" r="3" fill="#6a6a6a"/><path d="M2 15V11Q2 9 5 9H11Q14 9 14 11V15Z" fill="#6a6a6a"/><path d="M1 13H5V9H9V5H14V2" stroke="#c09030" stroke-width="1.5" fill="none"/></svg>
<svg style="position:absolute;left:1319.6999999999998px;top:57.25px" width="16" height="16" viewBox="0 0 16 16"><circle cx="6" cy="5" r="3" fill="#6a6a6a"/><path d="M1 15V11Q1 9 4 9H8Q11 9 11 11V15Z" fill="#6a6a6a"/><path d="M11 2H15M11 5H15M11 8H15M11 11H15M11 14H15" stroke="#5a8a5a" stroke-width="1.5"/><path d="M11 2H15" stroke="#a04040" stroke-width="1.5"/></svg>
<svg style="position:absolute;left:1339.4999999999998px;top:57.25px" width="16" height="16" viewBox="0 0 16 16"><circle cx="8" cy="5" r="3.8" fill="#6de46d"/><path d="M3.5 2Q2 5 3.5 8M12.5 2Q14 5 12.5 8" stroke="#f0a020" stroke-width="1.8" fill="none"/><path d="M1 15V11Q1 9 4 9H12Q15 9 15 11V15Z" fill="#1a8cf0"/></svg>
<svg style="position:absolute;left:1359.2999999999997px;top:57.25px" width="16" height="16" viewBox="0 0 16 16"><circle cx="7" cy="5" r="3" fill="#6a6a6a"/><path d="M1 15V11Q1 9 4 9H10Q13 9 13 11V15Z" fill="#6a6a6a"/><path d="M2 10H11M8 7L11 10L8 13" stroke="#4a8a4a" stroke-width="1.6" fill="none"/><path d="M14 2V15" stroke="#b08030" stroke-width="1.2"/></svg>
<svg style="position:absolute;left:1379.0999999999997px;top:57.25px" width="16" height="16" viewBox="0 0 16 16"><circle cx="8" cy="5" r="3" fill="#9a5a6a"/><path d="M1 15V11Q1 9 4 9H12Q15 9 15 11V15Z" fill="#2f6aaa"/></svg>
<svg style="position:absolute;left:1407px;top:61px;overflow:visible;" width="13" height="11" viewBox="0 0 13 11"><path d="M1 1.5H12M1 5.5H12M1 9.5H12" stroke="#e0e0e0" stroke-width="1.6" stroke-linecap="round"/></svg>
<div style="left:1429px;top:56px;width:18.5px;height:18.5px;background:#555555;border:1px solid #1f1f1f;border-left-width:1px;border-radius:4px 0 0 4px;box-shadow:inset 1px 0 0 rgba(0,0,0,0.25)"></div>
<div style="left:1447.5px;top:56px;width:18.5px;height:18.5px;background:#555555;border:1px solid #1f1f1f;border-left-width:0px;border-radius:0 4px 4px 0;box-shadow:inset 1px 0 0 rgba(0,0,0,0.25)"></div>
<svg style="position:absolute;left:1430.25px;top:57.25px" width="16" height="16" viewBox="0 0 16 16"><path d="M11 15Q15 8 9 2" stroke="#3aa0e0" stroke-width="2.5" fill="none"/><path d="M3 2L10 0L9 6Z" fill="#bde"/></svg>
<svg style="position:absolute;left:1448.75px;top:57.25px" width="16" height="16" viewBox="0 0 16 16"><path d="M5 15Q1 8 7 2" stroke="#3aa0e0" stroke-width="2.5" fill="none"/><path d="M13 2L6 0L7 6Z" fill="#bde"/></svg>
<div style="left:1474px;top:56px;width:18px;height:18.5px;background:#555555;border:1px solid #1f1f1f;border-left-width:1px;border-radius:4px 4px 4px 4px;box-shadow:inset 1px 0 0 rgba(0,0,0,0.25)"></div>
<svg style="position:absolute;left:1475.0px;top:57.25px" width="16" height="16" viewBox="0 0 16 16"><path d="M4 11Q2 4 7 2" stroke="#3aa0e0" stroke-width="2" fill="none"/><path d="M12 11Q14 4 9 2" stroke="#3aa0e0" stroke-width="2" fill="none"/><path d="M3 15H13" stroke="#f09030" stroke-width="1.5"/></svg>
<div style="left:1499px;top:56px;width:19px;height:18.5px;background:#555555;border:1px solid #1f1f1f;border-left-width:1px;border-radius:4px 0 0 4px;box-shadow:inset 1px 0 0 rgba(0,0,0,0.25)"></div>
<div style="left:1518px;top:56px;width:19px;height:18.5px;background:#555555;border:1px solid #1f1f1f;border-left-width:0px;border-radius:0 4px 4px 0;box-shadow:inset 1px 0 0 rgba(0,0,0,0.25)"></div>
<svg style="position:absolute;left:1500.5px;top:57.25px" width="16" height="16" viewBox="0 0 16 16"><path d="M3 5H13M3 5L6 2M13 11H3M13 11L10 14" stroke="#3aa0e0" stroke-width="2" fill="none"/><path d="M3 5V11" stroke="#3aa0e0" stroke-width="1"/></svg>
<svg style="position:absolute;left:1519.5px;top:57.25px" width="16" height="16" viewBox="0 0 16 16"><path d="M4 12Q1 4 8 2" stroke="#3aa0e0" stroke-width="2" fill="none"/><path d="M9 1L14 5L9 6Z" fill="#bde"/><path d="M4 15H6M8 15H10M12 15H14" stroke="#3aa0e0" stroke-width="1"/></svg>
<div style="left:159px;top:78px;width:1043px;height:879px;background:linear-gradient(#7f7f7f, #4c4c4c);"></div>
<div style="left:159px;top:78px;width:1042px;height:1px;background:#8f8f8f;"></div>
<div style="left:159px;top:78px;width:1px;height:879px;background:rgba(255,255,255,0.1);"></div>
<div style="left:159px;top:956px;width:1043px;height:1px;background:#434343;"></div>
<div class="t" style="left:179.5px;top:88.59px;font-size:11px;color:#ececec;letter-spacing:-0.032px;">User Ortho</div>
<div class="t" style="left:229px;top:936.59px;font-size:11px;color:#ececec;letter-spacing:-0.021px;">(22) Future_FBX_2000 : Basis</div>
<svg style="position:absolute;left:158px;top:78px;overflow:visible;" width="1044" height="879" viewBox="0 0 1044 879"><path d="M156.9 438.4L884.5 469.6M156.9 438.4L99.9 834.3M153.3 463.1L880.9 494.3M202.4 440.4L145.4 836.2M149.8 487.9L877.4 519.1M247.8 442.3L190.8 838.2M146.2 512.6L873.8 543.8M293.3 444.2L236.3 840.1M142.6 537.4L870.2 568.6M338.8 446.2L281.8 842.1M139.1 562.1L866.7 593.3M384.3 448.1L327.3 844.0M135.5 586.9L863.1 618.1M429.8 450.1L372.8 846.0M132.0 611.6L859.6 642.8M475.2 452.0L418.2 847.9M128.4 636.3L856.0 667.5M520.7 454.0L463.7 849.9M124.8 661.1L852.4 692.3M566.2 456.0L509.2 851.9M121.3 685.8L848.9 717.0M611.6 457.9L554.6 853.8M117.7 710.6L845.3 741.8M657.1 459.9L600.1 855.8M114.1 735.3L841.8 766.5M702.6 461.8L645.6 857.7M110.6 760.1L838.2 791.3M748.1 463.8L691.1 859.6M107.0 784.8L834.6 816.0M793.5 465.7L736.5 861.6M103.5 809.6L831.1 840.8M839.0 467.6L782.0 863.5M99.9 834.3L827.5 865.5M884.5 469.6L827.5 865.5" stroke="#b0b0b0" stroke-width="1" fill="none" opacity="0.75"/><path d="M128.4 636.3L856.0 667.5" stroke="#b03838" stroke-width="1"/><path d="M520.7 454.0L463.7 849.9" stroke="#4a9a4a" stroke-width="1"/></svg>
<svg style="position:absolute;left:155px;top:895px;overflow:visible;" width="60" height="60" viewBox="0 0 60 60"><path d="M30 15V36" stroke="#1010e0" stroke-width="2"/><path d="M30 35.5H5" stroke="#e01010" stroke-width="2"/><path d="M30 36L28 49.5" stroke="#10d010" stroke-width="2"/><text x="32" y="13" font-size="9" fill="#2020c8" font-family="Liberation Sans">z</text><text x="7" y="33" font-size="9" fill="#c82020" font-family="Liberation Sans">x</text><text x="31" y="49" font-size="9" fill="#20a020" font-family="Liberation Sans">y</text></svg>
<svg style="position:absolute;left:500px;top:550px;overflow:visible;" width="300" height="260" viewBox="0 0 300 260"><polygon points="85.0,155.0 109.0,136.0 101.0,241.0 96.0,195.0" fill="#7c7c7c"/><polygon points="91.0,152.0 101.0,150.0 98.0,210.0" fill="#9a9a9a" opacity="0.6"/><polygon points="109.0,136.0 143.0,160.0 160.0,172.0 176.0,185.0 192.0,245.0 101.0,241.0" fill="#666a7a"/><polygon points="224.0,109.0 270.0,33.0 198.0,208.0 192.0,245.0 176.0,185.0" fill="#9ca0b6"/><polygon points="109.0,136.0 270.0,33.0 247.0,71.0 224.0,109.0 191.0,117.0 161.0,126.0" fill="#8c8d94"/><polygon points="109.0,136.0 161.0,126.0 143.0,160.0" fill="#6b6e80"/><polygon points="109.0,136.0 173.0,101.0 169.0,110.0" fill="#7a7a80"/><polygon points="161.0,126.0 191.0,117.0 224.0,109.0 176.0,185.0 160.0,172.0 143.0,160.0" fill="#b09a8e"/><path d="M109 136L173 101" stroke="#222" stroke-width="1" stroke-dasharray="1.5 1.5" opacity="0.7"/><path d="M109 136L169 110" stroke="#222" stroke-width="1" stroke-dasharray="1.5 1.5" opacity="0.7"/><path d="M109 136L161 126" stroke="#222" stroke-width="1" stroke-dasharray="1.5 1.5" opacity="0.7"/><path d="M173 101L224 62" stroke="#111" stroke-width="1"/><path d="M224 62L270 33" stroke="#111" stroke-width="1"/><path d="M169 110L216 76" stroke="#111" stroke-width="1"/><path d="M216 76L259 52" stroke="#111" stroke-width="1"/><path d="M161 126L207 90" stroke="#111" stroke-width="1"/><path d="M207 90L247 71" stroke="#111" stroke-width="1"/><path d="M247 71L270 33" stroke="#111" stroke-width="1"/><path d="M259 52L198 208" stroke="#111" stroke-width="1"/><path d="M247 71L192 245" stroke="#111" stroke-width="1"/><path d="M109 136L101 241" stroke="#111" stroke-width="1"/><path d="M101 241L192 245" stroke="#111" stroke-width="1"/><path d="M85 155L109 136" stroke="#111" stroke-width="1"/><path d="M192 245L198 208" stroke="#111" stroke-width="1"/><path d="M161 126L191 117" stroke="#f0a030" stroke-width="1"/><path d="M191 117L224 109" stroke="#f0a030" stroke-width="1"/><path d="M161 126L143 160" stroke="#f0a030" stroke-width="1"/><path d="M143 160L160 172" stroke="#f0a030" stroke-width="1"/><path d="M224 109L176 185" stroke="#f0a030" stroke-width="1"/><path d="M191 117L160 172" stroke="#f0a030" stroke-width="1"/><path d="M143 160L146 243" stroke="#f0a030" stroke-width="1"/><path d="M160 172L169 244" stroke="#f0a030" stroke-width="1"/><path d="M176 185L192 245" stroke="#f0a030" stroke-width="1"/><path d="M109 136L143 160" stroke="#f0a030" stroke-width="1"/><path d="M224 109L247 71" stroke="#f0a030" stroke-width="1"/><path d="M224 109L200 210" stroke="#f0a030" stroke-width="1"/><rect x="267.5" y="30.5" width="5" height="5" fill="#111"/><rect x="256.5" y="49.5" width="5" height="5" fill="#111"/><rect x="244.5" y="68.5" width="5" height="5" fill="#111"/><rect x="222.5" y="59.5" width="5" height="5" fill="#111"/><rect x="213.5" y="73.5" width="5" height="5" fill="#111"/><rect x="204.5" y="87.5" width="5" height="5" fill="#111"/><rect x="170.5" y="98.5" width="5" height="5" fill="#111"/><rect x="166.5" y="107.5" width="5" height="5" fill="#111"/><rect x="106.5" y="133.5" width="5" height="5" fill="#111"/><rect x="93.5" y="142.5" width="5" height="5" fill="#111"/><rect x="82.5" y="152.5" width="5" height="5" fill="#111"/><rect x="85.5" y="148.5" width="5" height="5" fill="#111"/><rect x="98.5" y="238.5" width="5" height="5" fill="#111"/><rect x="143.5" y="240.5" width="5" height="5" fill="#111"/><rect x="166.5" y="241.5" width="5" height="5" fill="#111"/><rect x="189.5" y="242.5" width="5" height="5" fill="#111"/><rect x="194.5" y="217.5" width="5" height="5" fill="#111"/><rect x="195.5" y="205.5" width="5" height="5" fill="#111"/><rect x="158.5" y="123.5" width="5" height="5" fill="#f08a10"/><rect x="189.5" y="114.5" width="5" height="5" fill="#f08a10"/><rect x="221.5" y="106.5" width="5" height="5" fill="#f08a10"/><rect x="140.5" y="157.5" width="5" height="5" fill="#f08a10"/><rect x="157.5" y="169.5" width="5" height="5" fill="#f08a10"/><rect x="173.5" y="182.5" width="5" height="5" fill="#fff"/><path d="M176 133V88" stroke="#2020e0" stroke-width="1.3"/><path d="M176 75L171 91H181Z" fill="#1818f0"/><path d="M161 144L107 142" stroke="#e01010" stroke-width="1.3"/><path d="M93 142L110 135V149Z" fill="#e01010"/><path d="M174.5 154L172 178" stroke="#10d010" stroke-width="1.3"/><path d="M170 190L164 177H178Z" fill="#10d010"/><circle cx="176" cy="144" r="15" fill="none" stroke="#f0f0f0" stroke-width="1.2"/><circle cx="150" cy="180" r="10" fill="none" stroke="#fff" stroke-width="1.2" stroke-dasharray="3 3"/><circle cx="150" cy="180" r="10" fill="none" stroke="#d02020" stroke-width="1.2" stroke-dasharray="3 3" stroke-dashoffset="3"/><path d="M150 163V197M131 180H169" stroke="#111" stroke-width="1"/><circle cx="150" cy="180" r="3" fill="#d89050"/></svg>
<div style="left:0px;top:78px;width:158px;height:879px;background:#3b3b3b;"></div>
<div style="left:0px;top:78px;width:20px;height:523px;background:#2c2c2c;"></div>
<div style="left:20px;top:78px;width:122px;height:523px;background:#303030;"></div>
<div style="left:142px;top:78px;width:17px;height:523px;background:#404040;"></div>
<div style="left:142.7px;top:84px;width:11.8px;height:512px;background:#333333;border-radius:6px"></div>
<div style="left:142.7px;top:84px;width:11.8px;height:416px;background:#686868;border-radius:6px"></div>
<div style="left:158px;top:78px;width:1px;height:879px;background:#353535;"></div>
<div style="left:2px;top:84px;width:18px;height:37px;background:#5676a8;border-radius:4px 0 0 4px;box-shadow:-1px 1px 0 #1a1a1a"></div>
<div class="t" style="left:-7.5px;top:95.5px;width:37px;height:14px;text-align:center;font-size:11px;line-height:14px;color:#f0f0f0;transform:rotate(-90deg)">Tools</div>
<div style="left:2px;top:125px;width:18px;height:57px;background:#3a3a3a;border-radius:4px 0 0 4px;box-shadow:-1px 1px 0 #1a1a1a"></div>
<div class="t" style="left:-17.5px;top:146.5px;width:57px;height:14px;text-align:center;font-size:11px;line-height:14px;color:#c8c8c8;transform:rotate(-90deg)">Relations</div>
<div style="left:2px;top:186px;width:18px;height:48px;background:#3a3a3a;border-radius:4px 0 0 4px;box-shadow:-1px 1px 0 #1a1a1a"></div>
<div class="t" style="left:-13.0px;top:203.0px;width:48px;height:14px;text-align:center;font-size:11px;line-height:14px;color:#c8c8c8;transform:rotate(-90deg)">Create</div>
<div style="left:2px;top:238px;width:18px;height:68px;background:#3a3a3a;border-radius:4px 0 0 4px;box-shadow:-1px 1px 0 #1a1a1a"></div>
<div class="t" style="left:-23.0px;top:265.0px;width:68px;height:14px;text-align:center;font-size:11px;line-height:14px;color:#c8c8c8;transform:rotate(-90deg)">Shade / UVs</div>
<div style="left:2px;top:310px;width:18px;height:52px;background:#3a3a3a;border-radius:4px 0 0 4px;box-shadow:-1px 1px 0 #1a1a1a"></div>
<div class="t" style="left:-15.0px;top:329.0px;width:52px;height:14px;text-align:center;font-size:11px;line-height:14px;color:#c8c8c8;transform:rotate(-90deg)">Options</div>
<div style="left:2px;top:366px;width:18px;height:50px;background:#3a3a3a;border-radius:4px 0 0 4px;box-shadow:-1px 1px 0 #1a1a1a"></div>
<div class="t" style="left:-14.0px;top:384.0px;width:50px;height:14px;text-align:center;font-size:11px;line-height:14px;color:#c8c8c8;transform:rotate(-90deg)">G-Pencil</div>
<div style="left:20px;top:78px;width:122px;height:47px;background:#333333;"></div>
<svg style="position:absolute;left:33px;top:85px;overflow:visible;" width="9" height="9" viewBox="0 0 9 9"><path d="M1 0L8 4.5L1 9Z" fill="#9a9a9a"/></svg>
<div class="t" style="left:45px;top:82.64px;font-size:12px;color:#d8d8d8;letter-spacing:-0.008px;">Snap</div>
<svg style="position:absolute;left:120px;top:87px;overflow:visible;" width="12" height="7" viewBox="0 0 12 7"><rect x="0" y="0" width="1.3" height="1.3" fill="#6a6a6a"/><rect x="0" y="1.3" width="1.3" height="1.3" fill="#101010"/><rect x="0" y="3" width="1.3" height="1.3" fill="#6a6a6a"/><rect x="0" y="4.3" width="1.3" height="1.3" fill="#101010"/><rect x="3" y="0" width="1.3" height="1.3" fill="#6a6a6a"/><rect x="3" y="1.3" width="1.3" height="1.3" fill="#101010"/><rect x="3" y="3" width="1.3" height="1.3" fill="#6a6a6a"/><rect x="3" y="4.3" width="1.3" height="1.3" fill="#101010"/><rect x="6" y="0" width="1.3" height="1.3" fill="#6a6a6a"/><rect x="6" y="1.3" width="1.3" height="1.3" fill="#101010"/><rect x="6" y="3" width="1.3" height="1.3" fill="#6a6a6a"/><rect x="6" y="4.3" width="1.3" height="1.3" fill="#101010"/><rect x="9" y="0" width="1.3" height="1.3" fill="#6a6a6a"/><rect x="9" y="1.3" width="1.3" height="1.3" fill="#101010"/><rect x="9" y="3" width="1.3" height="1.3" fill="#6a6a6a"/><rect x="9" y="4.3" width="1.3" height="1.3" fill="#101010"/></svg>
<svg style="position:absolute;left:32px;top:110px;overflow:visible;" width="9" height="9" viewBox="0 0 9 9"><path d="M0 1L9 1L4.5 8Z" fill="#9a9a9a"/></svg>
<div class="t" style="left:45px;top:106.64px;font-size:12px;color:#d8d8d8;letter-spacing:0.170px;">Mesh Tools</div>
<svg style="position:absolute;left:120px;top:111px;overflow:visible;" width="12" height="7" viewBox="0 0 12 7"><rect x="0" y="0" width="1.3" height="1.3" fill="#6a6a6a"/><rect x="0" y="1.3" width="1.3" height="1.3" fill="#101010"/><rect x="0" y="3" width="1.3" height="1.3" fill="#6a6a6a"/><rect x="0" y="4.3" width="1.3" height="1.3" fill="#101010"/><rect x="3" y="0" width="1.3" height="1.3" fill="#6a6a6a"/><rect x="3" y="1.3" width="1.3" height="1.3" fill="#101010"/><rect x="3" y="3" width="1.3" height="1.3" fill="#6a6a6a"/><rect x="3" y="4.3" width="1.3" height="1.3" fill="#101010"/><rect x="6" y="0" width="1.3" height="1.3" fill="#6a6a6a"/><rect x="6" y="1.3" width="1.3" height="1.3" fill="#101010"/><rect x="6" y="3" width="1.3" height="1.3" fill="#6a6a6a"/><rect x="6" y="4.3" width="1.3" height="1.3" fill="#101010"/><rect x="9" y="0" width="1.3" height="1.3" fill="#6a6a6a"/><rect x="9" y="1.3" width="1.3" height="1.3" fill="#101010"/><rect x="9" y="3" width="1.3" height="1.3" fill="#6a6a6a"/><rect x="9" y="4.3" width="1.3" height="1.3" fill="#101010"/></svg>
<div style="left:20px;top:125px;width:122px;height:427px;background:#454545;"></div>
<div style="left:28.5px;top:134.5px;width:19px;height:19px;background:#4f4f4f;border:1px solid #252525;border-radius:4px;"></div>
<svg style="position:absolute;left:30.5px;top:136.5px" width="15" height="15" viewBox="0 0 16 16"><path d="M3 3L13 13M13 3L3 13" stroke="#bfe8f0" stroke-width="1.5"/><path d="M1 1H5L1 5Z M15 1H11L15 5Z M1 15H5L1 11Z M15 15H11L15 11Z" fill="#bfe8f0"/><circle cx="8" cy="8" r="2" fill="#f0a020"/></svg>
<div style="left:56.5px;top:134.5px;width:19px;height:19px;background:#4f4f4f;border:1px solid #252525;border-radius:4px;"></div>
<svg style="position:absolute;left:58.5px;top:136.5px" width="15" height="15" viewBox="0 0 16 16"><rect x="8" y="2" width="7" height="13" fill="#8aa8e8"/><path d="M2 15V2H5L8 8L11 2H14V15H11V8L8 12L5 8V15Z" fill="#e8a810" stroke="#805a00" stroke-width="0.5"/></svg>
<div style="left:84.5px;top:134.5px;width:19px;height:19px;background:#4f4f4f;border:1px solid #252525;border-radius:4px;"></div>
<svg style="position:absolute;left:86.5px;top:136.5px" width="15" height="15" viewBox="0 0 16 16"><rect x="6" y="2" width="9" height="13" fill="#6a7a9a"/><path d="M3 3L8 14L13 3" stroke="#aaa" stroke-width="1" fill="none"/><circle cx="3" cy="3" r="1.5" fill="#aaa"/><circle cx="13" cy="3" r="1.5" fill="#aaa"/></svg>
<div style="left:112.5px;top:134.5px;width:19px;height:19px;background:#4f4f4f;border:1px solid #252525;border-radius:4px;"></div>
<svg style="position:absolute;left:114.5px;top:136.5px" width="15" height="15" viewBox="0 0 16 16"><path d="M7 2L1 14H7Z M9 2L15 14H9Z" fill="#f0c020"/><path d="M8 1V15" stroke="#222" stroke-width="1.5"/></svg>
<div class="t" style="left:37px;top:163.59px;font-size:11px;color:#cfcfcf;letter-spacing:-0.075px;">Modify:</div>
<div style="left:28.5px;top:181.5px;width:19px;height:19px;background:#4f4f4f;border:1px solid #252525;border-radius:4px;"></div>
<svg style="position:absolute;left:30.5px;top:183.5px" width="15" height="15" viewBox="0 0 16 16"><path d="M2 10L8 7L14 10V13L8 15L2 13Z" fill="#6f8fc8"/><path d="M2 4L8 1L14 4L8 7Z" fill="#6f8fc8"/><path d="M3 6L8 9L13 6" stroke="#f0c020" stroke-width="2.2" fill="none"/></svg>
<div style="left:56.5px;top:181.5px;width:19px;height:19px;background:#4f4f4f;border:1px solid #252525;border-radius:4px;"></div>
<svg style="position:absolute;left:58.5px;top:183.5px" width="15" height="15" viewBox="0 0 16 16"><path d="M2 10L8 7L14 10V13L8 15L2 13Z" fill="#6f8fc8"/><path d="M4 4L10 9" stroke="#f0c020" stroke-width="3"/></svg>
<div style="left:84.5px;top:181.5px;width:19px;height:19px;background:#3f5373;border:1px solid #252525;border-radius:4px;"></div>
<svg style="position:absolute;left:86.5px;top:183.5px" width="15" height="15" viewBox="0 0 16 16"><path d="M2 10L8 7L14 10V13L8 15L2 13Z" fill="#6f8fc8"/><path d="M2 4L8 1L14 4L8 7Z" fill="#6f8fc8"/><path d="M3 6L8 9L13 6" stroke="#f0c020" stroke-width="2.2" fill="none"/></svg>
<div style="left:28.5px;top:211.5px;width:19px;height:19px;background:#4f4f4f;border:1px solid #252525;border-radius:4px;"></div>
<svg style="position:absolute;left:30.5px;top:213.5px" width="15" height="15" viewBox="0 0 16 16"><circle cx="8" cy="8" r="6" fill="none" stroke="#c03030" stroke-width="1" stroke-dasharray="2 2"/></svg>
<div style="left:56.5px;top:211.5px;width:19px;height:19px;background:#4f4f4f;border:1px solid #252525;border-radius:4px;"></div>
<svg style="position:absolute;left:58.5px;top:213.5px" width="15" height="15" viewBox="0 0 16 16"><path d="M4 2Q4 12 14 12Q9 15 5 13Q1 9 4 2Z" fill="#6f8fc8"/><circle cx="4" cy="2.5" r="1" fill="#e02020"/><circle cx="14" cy="12" r="1" fill="#e02020"/></svg>
<div style="left:84.5px;top:211.5px;width:19px;height:19px;background:#4f4f4f;border:1px solid #252525;border-radius:4px;"></div>
<svg style="position:absolute;left:86.5px;top:213.5px" width="15" height="15" viewBox="0 0 16 16"><rect x="1.5" y="1.5" width="13" height="13" fill="#444" stroke="#aaa" stroke-width="0.8"/><rect x="4" y="4" width="8" height="8" fill="#f0c020"/><circle cx="4" cy="4" r="1" fill="#e02020"/><circle cx="12" cy="12" r="1" fill="#e02020"/></svg>
<div style="left:112.5px;top:211.5px;width:19px;height:19px;background:#4f4f4f;border:1px solid #252525;border-radius:4px;"></div>
<svg style="position:absolute;left:114.5px;top:213.5px" width="15" height="15" viewBox="0 0 16 16"><rect x="1" y="1" width="14" height="14" fill="#6f8fc8"/><rect x="4" y="4" width="8" height="8" fill="#f0c020"/><circle cx="4" cy="4" r="1" fill="#e02020"/><circle cx="12" cy="4" r="1" fill="#e02020"/><circle cx="4" cy="12" r="1" fill="#e02020"/><circle cx="12" cy="12" r="1" fill="#e02020"/></svg>
<div style="left:28.5px;top:241.5px;width:19px;height:19px;background:#4f4f4f;border:1px solid #252525;border-radius:4px;"></div>
<svg style="position:absolute;left:30.5px;top:243.5px" width="15" height="15" viewBox="0 0 16 16"><path d="M2 5L8 2L14 5V12L8 15L2 12Z" fill="#6f8fc8"/><path d="M4 6L8 9L12 6" stroke="#f0c020" stroke-width="2" fill="none"/></svg>
<div style="left:56.5px;top:241.5px;width:19px;height:19px;background:#4f4f4f;border:1px solid #252525;border-radius:4px;"></div>
<svg style="position:absolute;left:58.5px;top:243.5px" width="15" height="15" viewBox="0 0 16 16"><path d="M2 5L8 2L14 5V12L8 15L2 12Z" fill="#6f8fc8"/><path d="M4 6H12L8 11Z" fill="#f0c020"/></svg>
<div style="left:84.5px;top:241.5px;width:19px;height:19px;background:#4f4f4f;border:1px solid #252525;border-radius:4px;"></div>
<svg style="position:absolute;left:86.5px;top:243.5px" width="15" height="15" viewBox="0 0 16 16"><path d="M3 5L8 2L13 5V12L8 15L3 12Z" fill="#d89a60"/><path d="M3 8.5H13M8 2V15M5 3.5V13.5M11 3.5V13.5" stroke="#a8683a" stroke-width="0.6"/></svg>
<div style="left:112.5px;top:241.5px;width:19px;height:19px;background:#4f4f4f;border:1px solid #252525;border-radius:4px;"></div>
<svg style="position:absolute;left:114.5px;top:243.5px" width="15" height="15" viewBox="0 0 16 16"><ellipse cx="8" cy="3.5" rx="5" ry="2.5" fill="#e0b890"/><rect x="3" y="3.5" width="10" height="10" fill="#c89860"/><rect x="3" y="7" width="10" height="4" fill="#22b022"/></svg>
<div class="t" style="left:37px;top:270.59px;font-size:11px;color:#cfcfcf;letter-spacing:-0.076px;">Cut/Slide:</div>
<div style="left:28.5px;top:288.5px;width:19px;height:19px;background:#4f4f4f;border:1px solid #252525;border-radius:4px;"></div>
<svg style="position:absolute;left:30.5px;top:290.5px" width="15" height="15" viewBox="0 0 16 16"><path d="M2 14L8 8" stroke="#6f8fc8" stroke-width="2.5"/><path d="M7 9L14 2L10 9Z" fill="#f0f0f0"/></svg>
<div style="left:56.5px;top:288.5px;width:19px;height:19px;background:#4f4f4f;border:1px solid #252525;border-radius:4px;"></div>
<svg style="position:absolute;left:58.5px;top:290.5px" width="15" height="15" viewBox="0 0 16 16"><rect x="2" y="4" width="9" height="9" fill="#f0c020"/><path d="M2 14L8 8" stroke="#6f8fc8" stroke-width="2.5"/><path d="M7 9L14 2L10 9Z" fill="#f0f0f0"/></svg>
<div style="left:84.5px;top:288.5px;width:19px;height:19px;background:#4f4f4f;border:1px solid #252525;border-radius:4px;"></div>
<svg style="position:absolute;left:86.5px;top:290.5px" width="15" height="15" viewBox="0 0 16 16"><circle cx="8" cy="8" r="6" fill="#6f8fc8"/><path d="M2 9Q8 13 14 9" stroke="#e02020" stroke-width="1.2" fill="none"/><path d="M2 14L8 8" stroke="#3a5a9a" stroke-width="2.5"/><path d="M7 9L14 2L10 9Z" fill="#f0f0f0"/></svg>
<div style="left:112.5px;top:288.5px;width:19px;height:19px;background:#4f4f4f;border:1px solid #252525;border-radius:4px;"></div>
<svg style="position:absolute;left:114.5px;top:290.5px" width="15" height="15" viewBox="0 0 16 16"><path d="M2 2V15" stroke="#dde" stroke-width="1.5"/><path d="M5 7L10 4L15 7V11L10 14L5 11Z" fill="#6f8fc8"/><path d="M5 9Q10 13 15 9" stroke="#e02020" stroke-width="1.2" fill="none"/></svg>
<div style="left:28.5px;top:318.5px;width:19px;height:19px;background:#4f4f4f;border:1px solid #252525;border-radius:4px;"></div>
<svg style="position:absolute;left:30.5px;top:320.5px" width="15" height="15" viewBox="0 0 16 16"><rect x="1.5" y="1.5" width="13" height="13" fill="#333" stroke="#f0c020" stroke-width="2.5"/><path d="M3 13L8 8" stroke="#6f8fc8" stroke-width="2.5"/><path d="M7 9L13 3L10 9Z" fill="#f0f0f0"/></svg>
<div style="left:56.5px;top:318.5px;width:19px;height:19px;background:#4f4f4f;border:1px solid #252525;border-radius:4px;"></div>
<svg style="position:absolute;left:58.5px;top:320.5px" width="15" height="15" viewBox="0 0 16 16"><rect x="4" y="3" width="8" height="11" fill="#f0c020"/><path d="M5 1L11 15" stroke="#6f8fc8" stroke-width="1.5"/><circle cx="5" cy="2" r="1.2" fill="#b22"/><circle cx="11" cy="14" r="1.2" fill="#b22"/></svg>
<div class="t" style="left:37px;top:344.59px;font-size:11px;color:#cfcfcf;letter-spacing:-0.138px;">Merge/Separate:</div>
<div style="left:28.5px;top:362.5px;width:19px;height:19px;background:#3f5373;border:1px solid #252525;border-radius:4px;"></div>
<svg style="position:absolute;left:30.5px;top:364.5px" width="15" height="15" viewBox="0 0 16 16"><path d="M8 2V9Q8 12 2 14M8 9Q8 12 14 14" stroke="#2aa8ff" stroke-width="2.5" fill="none"/><path d="M8 0L12 5H4Z" fill="#2aa8ff"/><path d="M1 15H15" stroke="#fff" stroke-width="1"/></svg>
<div style="left:56.5px;top:362.5px;width:19px;height:19px;background:#3f5373;border:1px solid #252525;border-radius:4px;"></div>
<svg style="position:absolute;left:58.5px;top:364.5px" width="15" height="15" viewBox="0 0 16 16"><path d="M2 8L6 4V12Z M14 8L10 4V12Z" fill="#fff" stroke="#111" stroke-width="0.8"/><rect x="5" y="6.5" width="6" height="3" fill="#fff" stroke="#111" stroke-width="0.6"/></svg>
<div class="t" style="left:37px;top:391.59px;font-size:11px;color:#cfcfcf;letter-spacing:-0.019px;">Deform:</div>
<div style="left:28.5px;top:407.5px;width:19px;height:19px;background:#4f4f4f;border:1px solid #252525;border-radius:4px;"></div>
<svg style="position:absolute;left:30.5px;top:409.5px" width="15" height="15" viewBox="0 0 16 16"><rect x="1" y="1" width="14" height="14" fill="#6f8fc8" stroke="#222" stroke-width="0.6"/><path d="M8 1V15" stroke="#e02020" stroke-width="1.2"/><path d="M1 14H15" stroke="#f0a060" stroke-width="1"/><circle cx="8" cy="1.5" r="1.2" fill="#e02020"/></svg>
<div style="left:56.5px;top:407.5px;width:19px;height:19px;background:#4f4f4f;border:1px solid #252525;border-radius:4px;"></div>
<svg style="position:absolute;left:58.5px;top:409.5px" width="15" height="15" viewBox="0 0 16 16"><rect x="1" y="1" width="14" height="14" fill="#6f8fc8" stroke="#222" stroke-width="0.6"/><path d="M1 9H15" stroke="#f0a060" stroke-width="1"/><circle cx="8" cy="9" r="1.5" fill="#e02020"/></svg>
<div style="left:84.5px;top:407.5px;width:19px;height:19px;background:#4f4f4f;border:1px solid #252525;border-radius:4px;"></div>
<svg style="position:absolute;left:86.5px;top:409.5px" width="15" height="15" viewBox="0 0 16 16"><path d="M1 15V8Q8 0 15 8V15Z" fill="#6f8fc8"/><circle cx="2" cy="7" r="1.2" fill="#e02020"/><circle cx="5" cy="3.5" r="1.2" fill="#e02020"/><circle cx="8" cy="2.5" r="1.2" fill="#e02020"/><circle cx="11" cy="3.5" r="1.2" fill="#e02020"/><circle cx="14" cy="7" r="1.2" fill="#e02020"/></svg>
<div style="left:112.5px;top:407.5px;width:19px;height:19px;background:#4f4f4f;border:1px solid #252525;border-radius:4px;"></div>
<svg style="position:absolute;left:114.5px;top:409.5px" width="15" height="15" viewBox="0 0 16 16"><path d="M1 15V8Q8 0 15 8V15Z" fill="#6f8fc8"/><circle cx="8" cy="9" r="3.5" fill="#cde" stroke="#345" stroke-width="1"/><circle cx="2" cy="7" r="1.2" fill="#e02020"/><circle cx="8" cy="2.5" r="1.2" fill="#e02020"/><circle cx="14" cy="7" r="1.2" fill="#e02020"/></svg>
<div class="t" style="left:37px;top:431.59px;font-size:11px;color:#cfcfcf;letter-spacing:-0.578px;">Dissolve:</div>
<div style="left:28.5px;top:447.5px;width:19px;height:19px;background:#4f4f4f;border:1px solid #252525;border-radius:4px;"></div>
<svg style="position:absolute;left:30.5px;top:449.5px" width="15" height="15" viewBox="0 0 16 16"><rect x="1" y="1" width="14" height="14" fill="#6f8fc8" stroke="#f0c020" stroke-width="1.2"/><path d="M1 8H15" stroke="#e02020" stroke-width="1.2"/><circle cx="8" cy="8" r="1.3" fill="#422"/></svg>
<div style="left:56.5px;top:447.5px;width:19px;height:19px;background:#4f4f4f;border:1px solid #252525;border-radius:4px;"></div>
<svg style="position:absolute;left:58.5px;top:449.5px" width="15" height="15" viewBox="0 0 16 16"><rect x="1" y="1.5" width="14" height="13" rx="1" fill="#6f8fc8" stroke="#222" stroke-width="0.8"/><path d="M1 8H15" stroke="#e02020" stroke-width="1.6"/><path d="M1 7H15" stroke="#f0c020" stroke-width="0.8"/></svg>
<div style="left:84.5px;top:447.5px;width:19px;height:19px;background:#4f4f4f;border:1px solid #252525;border-radius:4px;"></div>
<svg style="position:absolute;left:86.5px;top:449.5px" width="15" height="15" viewBox="0 0 16 16"><rect x="1.5" y="2" width="13" height="12" fill="#f0c020"/><path d="M1 8H15" stroke="#e02020" stroke-width="1.6"/><circle cx="1.5" cy="2" r="1.2" fill="#e02020"/><circle cx="14.5" cy="2" r="1.2" fill="#e02020"/><circle cx="1.5" cy="14" r="1.2" fill="#e02020"/><circle cx="14.5" cy="14" r="1.2" fill="#e02020"/></svg>
<div style="left:112.5px;top:447.5px;width:19px;height:19px;background:#4f4f4f;border:1px solid #252525;border-radius:4px;"></div>
<svg style="position:absolute;left:114.5px;top:449.5px" width="15" height="15" viewBox="0 0 16 16"><circle cx="8" cy="8" r="7" fill="#22cc22" stroke="#222" stroke-width="0.8"/><path d="M8 8L8 1A7 7 0 0 1 14 5Z M8 8L15 10A7 7 0 0 1 11 14.5Z M8 8L6 15A7 7 0 0 1 1.5 11Z M8 8L1 6A7 7 0 0 1 4 2Z" fill="#e02020"/><circle cx="8" cy="8" r="1.5" fill="#222"/></svg>
<div style="left:28.5px;top:473.5px;width:19px;height:19px;background:#4f4f4f;border:1px solid #252525;border-radius:4px;"></div>
<svg style="position:absolute;left:30.5px;top:475.5px" width="15" height="15" viewBox="0 0 16 16"><rect x="1.5" y="8" width="13" height="6" fill="#6f8fc8"/><rect x="1.5" y="2" width="13" height="6" fill="#f0c020"/><path d="M1 8H15" stroke="#e02020" stroke-width="1.6"/><circle cx="1.5" cy="2" r="1.2" fill="#e02020"/><circle cx="14.5" cy="2" r="1.2" fill="#e02020"/></svg>
<div style="left:56.5px;top:473.5px;width:19px;height:19px;background:#4f4f4f;border:1px solid #252525;border-radius:4px;"></div>
<svg style="position:absolute;left:58.5px;top:475.5px" width="15" height="15" viewBox="0 0 16 16"><rect x="1.5" y="2" width="13" height="12" fill="#6f8fc8" stroke="#f0c020" stroke-width="1"/><path d="M1 8H15" stroke="#e02020" stroke-width="1"/><circle cx="1.5" cy="2" r="1.2" fill="#e02020"/><circle cx="14.5" cy="2" r="1.2" fill="#e02020"/><circle cx="1.5" cy="14" r="1.2" fill="#e02020"/><circle cx="14.5" cy="14" r="1.2" fill="#e02020"/><circle cx="8" cy="8" r="1.2" fill="#e02020"/></svg>
<div style="left:84.5px;top:473.5px;width:19px;height:19px;background:#4f4f4f;border:1px solid #252525;border-radius:4px;"></div>
<svg style="position:absolute;left:86.5px;top:475.5px" width="15" height="15" viewBox="0 0 16 16"><path d="M2 2H14L9 8L14 14H2L7 8Z" fill="#6f8fc8" stroke="#222" stroke-width="0.8"/><path d="M4 8H12" stroke="#e02020" stroke-width="1.6"/><path d="M5 7H11" stroke="#f0c020" stroke-width="0.8"/></svg>
<div class="t" style="left:37px;top:502.59px;font-size:11px;color:#cfcfcf;letter-spacing:0.188px;">F2 tool:</div>
<div style="left:28.5px;top:524px;width:42px;height:19px;background:#555555;border:1px solid #252525;border-radius:4px;"></div>
<div class="t" style="left:37px;top:527.59px;font-size:11px;color:#cccccc;letter-spacing:-0.836px;">F2</div>
<div style="left:20px;top:552px;width:122px;height:49px;background:#333333;"></div>
<svg style="position:absolute;left:33px;top:559px;overflow:visible;" width="9" height="9" viewBox="0 0 9 9"><path d="M1 0L8 4.5L1 9Z" fill="#9a9a9a"/></svg>
<div class="t" style="left:45px;top:555.64px;font-size:12px;color:#d8d8d8;letter-spacing:0.322px;">Vertices Tools</div>
<svg style="position:absolute;left:124px;top:562px;overflow:visible;" width="12" height="7" viewBox="0 0 12 7"><rect x="0" y="0" width="1.3" height="1.3" fill="#6a6a6a"/><rect x="0" y="1.3" width="1.3" height="1.3" fill="#101010"/><rect x="0" y="3" width="1.3" height="1.3" fill="#6a6a6a"/><rect x="0" y="4.3" width="1.3" height="1.3" fill="#101010"/><rect x="3" y="0" width="1.3" height="1.3" fill="#6a6a6a"/><rect x="3" y="1.3" width="1.3" height="1.3" fill="#101010"/><rect x="3" y="3" width="1.3" height="1.3" fill="#6a6a6a"/><rect x="3" y="4.3" width="1.3" height="1.3" fill="#101010"/><rect x="6" y="0" width="1.3" height="1.3" fill="#6a6a6a"/><rect x="6" y="1.3" width="1.3" height="1.3" fill="#101010"/><rect x="6" y="3" width="1.3" height="1.3" fill="#6a6a6a"/><rect x="6" y="4.3" width="1.3" height="1.3" fill="#101010"/><rect x="9" y="0" width="1.3" height="1.3" fill="#6a6a6a"/><rect x="9" y="1.3" width="1.3" height="1.3" fill="#101010"/><rect x="9" y="3" width="1.3" height="1.3" fill="#6a6a6a"/><rect x="9" y="4.3" width="1.3" height="1.3" fill="#101010"/></svg>
<svg style="position:absolute;left:33px;top:584px;overflow:visible;" width="9" height="9" viewBox="0 0 9 9"><path d="M1 0L8 4.5L1 9Z" fill="#9a9a9a"/></svg>
<div class="t" style="left:45px;top:580.64px;font-size:12px;color:#d8d8d8;letter-spacing:-0.128px;">Edge Tools</div>
<svg style="position:absolute;left:121px;top:587px;overflow:visible;" width="12" height="7" viewBox="0 0 12 7"><rect x="0" y="0" width="1.3" height="1.3" fill="#6a6a6a"/><rect x="0" y="1.3" width="1.3" height="1.3" fill="#101010"/><rect x="0" y="3" width="1.3" height="1.3" fill="#6a6a6a"/><rect x="0" y="4.3" width="1.3" height="1.3" fill="#101010"/><rect x="3" y="0" width="1.3" height="1.3" fill="#6a6a6a"/><rect x="3" y="1.3" width="1.3" height="1.3" fill="#101010"/><rect x="3" y="3" width="1.3" height="1.3" fill="#6a6a6a"/><rect x="3" y="4.3" width="1.3" height="1.3" fill="#101010"/><rect x="6" y="0" width="1.3" height="1.3" fill="#6a6a6a"/><rect x="6" y="1.3" width="1.3" height="1.3" fill="#101010"/><rect x="6" y="3" width="1.3" height="1.3" fill="#6a6a6a"/><rect x="6" y="4.3" width="1.3" height="1.3" fill="#101010"/><rect x="9" y="0" width="1.3" height="1.3" fill="#6a6a6a"/><rect x="9" y="1.3" width="1.3" height="1.3" fill="#101010"/><rect x="9" y="3" width="1.3" height="1.3" fill="#6a6a6a"/><rect x="9" y="4.3" width="1.3" height="1.3" fill="#101010"/></svg>
<div style="left:0px;top:600px;width:158px;height:1px;background:#2a2a2a;"></div>
<div style="left:1px;top:601px;width:157px;height:22px;background:#333333;"></div>
<svg style="position:absolute;left:13px;top:607px;overflow:visible;" width="9" height="9" viewBox="0 0 9 9"><path d="M0 1L9 1L4.5 8Z" fill="#9a9a9a"/></svg>
<div class="t" style="left:25px;top:604.64px;font-size:12px;color:#d8d8d8;letter-spacing:0.156px;">Assign Material Slot</div>
<svg style="position:absolute;left:137px;top:610px;overflow:visible;" width="12" height="7" viewBox="0 0 12 7"><rect x="0" y="0" width="1.3" height="1.3" fill="#6a6a6a"/><rect x="0" y="1.3" width="1.3" height="1.3" fill="#101010"/><rect x="0" y="3" width="1.3" height="1.3" fill="#6a6a6a"/><rect x="0" y="4.3" width="1.3" height="1.3" fill="#101010"/><rect x="3" y="0" width="1.3" height="1.3" fill="#6a6a6a"/><rect x="3" y="1.3" width="1.3" height="1.3" fill="#101010"/><rect x="3" y="3" width="1.3" height="1.3" fill="#6a6a6a"/><rect x="3" y="4.3" width="1.3" height="1.3" fill="#101010"/><rect x="6" y="0" width="1.3" height="1.3" fill="#6a6a6a"/><rect x="6" y="1.3" width="1.3" height="1.3" fill="#101010"/><rect x="6" y="3" width="1.3" height="1.3" fill="#6a6a6a"/><rect x="6" y="4.3" width="1.3" height="1.3" fill="#101010"/><rect x="9" y="0" width="1.3" height="1.3" fill="#6a6a6a"/><rect x="9" y="1.3" width="1.3" height="1.3" fill="#101010"/><rect x="9" y="3" width="1.3" height="1.3" fill="#6a6a6a"/><rect x="9" y="4.3" width="1.3" height="1.3" fill="#101010"/></svg>
<div style="left:1px;top:623px;width:157px;height:17px;background:#454545;"></div>
<div style="left:1px;top:640px;width:157px;height:316px;background:#404040;"></div>
<div style="left:1201px;top:78px;width:1px;height:879px;background:rgba(255,255,255,0.06);"></div>
<div style="left:1202px;top:78px;width:179px;height:879px;background:#404040;"></div>
<div style="left:1381px;top:78px;width:1px;height:932px;background:#070707;"></div>
<div style="left:1202px;top:78px;width:179px;height:23px;background:#333333;"></div>
<svg style="position:absolute;left:1213px;top:85px;overflow:visible;" width="9" height="9" viewBox="0 0 9 9"><path d="M0 1L9 1L4.5 8Z" fill="#9a9a9a"/></svg>
<div class="t" style="left:1226px;top:83.64px;font-size:12px;color:#d8d8d8;letter-spacing:0.222px;">Transform</div>
<svg style="position:absolute;left:1359px;top:87px;overflow:visible;" width="12" height="7" viewBox="0 0 12 7"><rect x="0" y="0" width="1.3" height="1.3" fill="#6a6a6a"/><rect x="0" y="1.3" width="1.3" height="1.3" fill="#101010"/><rect x="0" y="3" width="1.3" height="1.3" fill="#6a6a6a"/><rect x="0" y="4.3" width="1.3" height="1.3" fill="#101010"/><rect x="3" y="0" width="1.3" height="1.3" fill="#6a6a6a"/><rect x="3" y="1.3" width="1.3" height="1.3" fill="#101010"/><rect x="3" y="3" width="1.3" height="1.3" fill="#6a6a6a"/><rect x="3" y="4.3" width="1.3" height="1.3" fill="#101010"/><rect x="6" y="0" width="1.3" height="1.3" fill="#6a6a6a"/><rect x="6" y="1.3" width="1.3" height="1.3" fill="#101010"/><rect x="6" y="3" width="1.3" height="1.3" fill="#6a6a6a"/><rect x="6" y="4.3" width="1.3" height="1.3" fill="#101010"/><rect x="9" y="0" width="1.3" height="1.3" fill="#6a6a6a"/><rect x="9" y="1.3" width="1.3" height="1.3" fill="#101010"/><rect x="9" y="3" width="1.3" height="1.3" fill="#6a6a6a"/><rect x="9" y="4.3" width="1.3" height="1.3" fill="#101010"/></svg>
<svg style="position:absolute;left:1366px;top:78px;overflow:visible;" width="14" height="14" viewBox="0 0 14 14"><path d="M10 0 L14 4" stroke="#707070" stroke-width="1"/><path d="M6 0 L14 8" stroke="#707070" stroke-width="1"/><path d="M2 0 L14 12" stroke="#707070" stroke-width="1"/></svg>
<div style="left:1202px;top:101px;width:179px;height:229px;background:#454545;"></div>
<div class="t" style="left:1217px;top:114.59px;font-size:11px;color:#d0d0d0;letter-spacing:-0.105px;">Median:</div>
<div style="left:1209.5px;top:130.5px;width:163px;height:59px;background:#383838;border:1px solid #262626;border-radius:9px"></div>
<div style="left:1210px;top:149.5px;width:162px;height:1px;background:#262626;"></div>
<div style="left:1210px;top:169.5px;width:162px;height:1px;background:#262626;"></div>
<svg style="position:absolute;left:1215px;top:137.3px;overflow:visible;" width="6" height="8" viewBox="0 0 6 8"><path d="M5 0L0 4L5 8Z" fill="#bbb"/></svg>
<svg style="position:absolute;left:1364px;top:137.3px;overflow:visible;" width="6" height="8" viewBox="0 0 6 8"><path d="M0 0L5 4L0 8Z" fill="#bbb"/></svg>
<div class="t" style="left:1225px;top:134.89px;font-size:11px;color:#d8d8d8;letter-spacing:-0.393px;">X:</div>
<div class="t" style="right:323px;top:134.89px;font-size:11px;color:#e0e0e0;letter-spacing:0.511px;">-0.62358</div>
<svg style="position:absolute;left:1215px;top:156.5px;overflow:visible;" width="6" height="8" viewBox="0 0 6 8"><path d="M5 0L0 4L5 8Z" fill="#bbb"/></svg>
<svg style="position:absolute;left:1364px;top:156.5px;overflow:visible;" width="6" height="8" viewBox="0 0 6 8"><path d="M0 0L5 4L0 8Z" fill="#bbb"/></svg>
<div class="t" style="left:1225px;top:154.09px;font-size:11px;color:#d8d8d8;letter-spacing:0.213px;">Y:</div>
<div class="t" style="right:323px;top:154.09px;font-size:11px;color:#e0e0e0;letter-spacing:0.707px;">0.67784</div>
<svg style="position:absolute;left:1215px;top:176.3px;overflow:visible;" width="6" height="8" viewBox="0 0 6 8"><path d="M5 0L0 4L5 8Z" fill="#bbb"/></svg>
<svg style="position:absolute;left:1364px;top:176.3px;overflow:visible;" width="6" height="8" viewBox="0 0 6 8"><path d="M0 0L5 4L0 8Z" fill="#bbb"/></svg>
<div class="t" style="left:1225px;top:173.89px;font-size:11px;color:#d8d8d8;letter-spacing:0.225px;">Z:</div>
<div class="t" style="right:323px;top:173.89px;font-size:11px;color:#e0e0e0;letter-spacing:0.707px;">1.37140</div>
<div style="left:1209.5px;top:193px;width:81.5px;height:19px;background:#595959;border:1px solid #262626;border-left-width:1px;border-radius:4px 0 0 4px;box-shadow:inset 1px 0 0 rgba(0,0,0,0.25)"></div>
<div style="left:1291.0px;top:193px;width:81.5px;height:19px;background:#5680c2;border:1px solid #262626;border-left-width:0px;border-radius:0 4px 4px 0;box-shadow:inset 1px 0 0 rgba(0,0,0,0.25)"></div>
<div class="t" style="left:1209.5px;top:196.59px;width:81.5px;text-align:center;font-size:11px;color:#d8d8d8;letter-spacing:-0.159px;">Global</div>
<div class="t" style="left:1291px;top:196.59px;width:81.5px;text-align:center;font-size:11px;color:#ffffff;letter-spacing:-0.074px;">Local</div>
<div class="t" style="left:1217px;top:218.59px;font-size:11px;color:#d0d0d0;letter-spacing:0.194px;">Vertices Data:</div>
<div style="left:1209.5px;top:236.3px;width:163px;height:20px;background:#383838;border:1px solid #262626;border-radius:10px"></div>
<svg style="position:absolute;left:1215px;top:242.3px;overflow:visible;" width="6" height="8" viewBox="0 0 6 8"><path d="M5 0L0 4L5 8Z" fill="#bbb"/></svg>
<svg style="position:absolute;left:1364px;top:242.3px;overflow:visible;" width="6" height="8" viewBox="0 0 6 8"><path d="M0 0L5 4L0 8Z" fill="#bbb"/></svg>
<div class="t" style="left:1225px;top:240.59px;font-size:11px;color:#d8d8d8;letter-spacing:0.045px;">Mean Bevel Weight:</div>
<div class="t" style="right:323px;top:240.59px;font-size:11px;color:#e0e0e0;letter-spacing:0.531px;">0.00</div>
<div class="t" style="left:1217px;top:262.59px;font-size:11px;color:#d0d0d0;letter-spacing:-0.253px;">Edges Data:</div>
<div style="left:1209.5px;top:280.3px;width:163px;height:20px;background:#383838;border:1px solid #262626;border-radius:10px"></div>
<svg style="position:absolute;left:1215px;top:286.3px;overflow:visible;" width="6" height="8" viewBox="0 0 6 8"><path d="M5 0L0 4L5 8Z" fill="#bbb"/></svg>
<svg style="position:absolute;left:1364px;top:286.3px;overflow:visible;" width="6" height="8" viewBox="0 0 6 8"><path d="M0 0L5 4L0 8Z" fill="#bbb"/></svg>
<div class="t" style="left:1225px;top:284.59px;font-size:11px;color:#d8d8d8;letter-spacing:0.045px;">Mean Bevel Weight:</div>
<div class="t" style="right:323px;top:284.59px;font-size:11px;color:#e0e0e0;letter-spacing:0.531px;">0.00</div>
<div style="left:1209.5px;top:302.3px;width:163px;height:20px;background:#383838;border:1px solid #262626;border-radius:10px"></div>
<svg style="position:absolute;left:1215px;top:308.3px;overflow:visible;" width="6" height="8" viewBox="0 0 6 8"><path d="M5 0L0 4L5 8Z" fill="#bbb"/></svg>
<svg style="position:absolute;left:1364px;top:308.3px;overflow:visible;" width="6" height="8" viewBox="0 0 6 8"><path d="M0 0L5 4L0 8Z" fill="#bbb"/></svg>
<div class="t" style="left:1225px;top:306.59px;font-size:11px;color:#d8d8d8;letter-spacing:-0.280px;">Mean Crease:</div>
<div class="t" style="right:323px;top:306.59px;font-size:11px;color:#e0e0e0;letter-spacing:0.531px;">0.00</div>
<div style="left:1202px;top:330px;width:179px;height:23px;background:#333333;"></div>
<svg style="position:absolute;left:1213px;top:337px;overflow:visible;" width="9" height="9" viewBox="0 0 9 9"><path d="M0 1L9 1L4.5 8Z" fill="#9a9a9a"/></svg>
<div class="t" style="left:1226px;top:335.64px;font-size:12px;color:#d8d8d8;letter-spacing:0.221px;">Item</div>
<svg style="position:absolute;left:1359px;top:339px;overflow:visible;" width="12" height="7" viewBox="0 0 12 7"><rect x="0" y="0" width="1.3" height="1.3" fill="#6a6a6a"/><rect x="0" y="1.3" width="1.3" height="1.3" fill="#101010"/><rect x="0" y="3" width="1.3" height="1.3" fill="#6a6a6a"/><rect x="0" y="4.3" width="1.3" height="1.3" fill="#101010"/><rect x="3" y="0" width="1.3" height="1.3" fill="#6a6a6a"/><rect x="3" y="1.3" width="1.3" height="1.3" fill="#101010"/><rect x="3" y="3" width="1.3" height="1.3" fill="#6a6a6a"/><rect x="3" y="4.3" width="1.3" height="1.3" fill="#101010"/><rect x="6" y="0" width="1.3" height="1.3" fill="#6a6a6a"/><rect x="6" y="1.3" width="1.3" height="1.3" fill="#101010"/><rect x="6" y="3" width="1.3" height="1.3" fill="#6a6a6a"/><rect x="6" y="4.3" width="1.3" height="1.3" fill="#101010"/><rect x="9" y="0" width="1.3" height="1.3" fill="#6a6a6a"/><rect x="9" y="1.3" width="1.3" height="1.3" fill="#101010"/><rect x="9" y="3" width="1.3" height="1.3" fill="#6a6a6a"/><rect x="9" y="4.3" width="1.3" height="1.3" fill="#101010"/></svg>
<div style="left:1202px;top:353px;width:179px;height:37px;background:#454545;"></div>
<svg style="position:absolute;left:1213px;top:364px" width="14" height="14" viewBox="0 0 16 16"><path d="M8 2L14 5V12L8 15L2 12V5Z" fill="#777" stroke="#333" stroke-width="0.6"/><path d="M2 5L8 8V15L2 12Z" fill="#c89860"/></svg>
<div style="left:1237.5px;top:362px;width:135px;height:20px;background:#555555;border:1px solid #262626;border-radius:4px;"></div>
<div class="t" style="left:1245px;top:366.59px;font-size:11px;color:#d0d0d0;letter-spacing:-0.063px;">Future_FBX_2000</div>
<div style="left:1202px;top:390px;width:179px;height:262px;background:#333333;"></div>
<div style="left:1202px;top:390px;width:179px;height:24px;background:#333333;"></div>
<svg style="position:absolute;left:1214px;top:397px;overflow:visible;" width="9" height="9" viewBox="0 0 9 9"><path d="M1 0L8 4.5L1 9Z" fill="#9a9a9a"/></svg>
<div class="t" style="left:1226px;top:395.64px;font-size:12px;color:#d8d8d8;letter-spacing:0.290px;">3D Cursor</div>
<svg style="position:absolute;left:1359px;top:399px;overflow:visible;" width="12" height="7" viewBox="0 0 12 7"><rect x="0" y="0" width="1.3" height="1.3" fill="#6a6a6a"/><rect x="0" y="1.3" width="1.3" height="1.3" fill="#101010"/><rect x="0" y="3" width="1.3" height="1.3" fill="#6a6a6a"/><rect x="0" y="4.3" width="1.3" height="1.3" fill="#101010"/><rect x="3" y="0" width="1.3" height="1.3" fill="#6a6a6a"/><rect x="3" y="1.3" width="1.3" height="1.3" fill="#101010"/><rect x="3" y="3" width="1.3" height="1.3" fill="#6a6a6a"/><rect x="3" y="4.3" width="1.3" height="1.3" fill="#101010"/><rect x="6" y="0" width="1.3" height="1.3" fill="#6a6a6a"/><rect x="6" y="1.3" width="1.3" height="1.3" fill="#101010"/><rect x="6" y="3" width="1.3" height="1.3" fill="#6a6a6a"/><rect x="6" y="4.3" width="1.3" height="1.3" fill="#101010"/><rect x="9" y="0" width="1.3" height="1.3" fill="#6a6a6a"/><rect x="9" y="1.3" width="1.3" height="1.3" fill="#101010"/><rect x="9" y="3" width="1.3" height="1.3" fill="#6a6a6a"/><rect x="9" y="4.3" width="1.3" height="1.3" fill="#101010"/></svg>
<div style="left:1202px;top:414px;width:179px;height:24px;background:#333333;"></div>
<svg style="position:absolute;left:1214px;top:421px;overflow:visible;" width="9" height="9" viewBox="0 0 9 9"><path d="M1 0L8 4.5L1 9Z" fill="#9a9a9a"/></svg>
<div style="left:1227px;top:419px;width:13px;height:13px;background:#5680c2;border:1px solid #222;border-radius:3px;"></div>
<svg style="position:absolute;left:1228px;top:418px;overflow:visible;" width="13" height="13" viewBox="0 0 13 13"><path d="M2.5 7L5.5 10L11 2.5" stroke="#5ee0a0" stroke-width="1.8" fill="none"/></svg>
<div class="t" style="left:1246px;top:419.64px;font-size:12px;color:#d8d8d8;letter-spacing:0.068px;">Grease Pencil Layers</div>
<svg style="position:absolute;left:1359px;top:423px;overflow:visible;" width="12" height="7" viewBox="0 0 12 7"><rect x="0" y="0" width="1.3" height="1.3" fill="#6a6a6a"/><rect x="0" y="1.3" width="1.3" height="1.3" fill="#101010"/><rect x="0" y="3" width="1.3" height="1.3" fill="#6a6a6a"/><rect x="0" y="4.3" width="1.3" height="1.3" fill="#101010"/><rect x="3" y="0" width="1.3" height="1.3" fill="#6a6a6a"/><rect x="3" y="1.3" width="1.3" height="1.3" fill="#101010"/><rect x="3" y="3" width="1.3" height="1.3" fill="#6a6a6a"/><rect x="3" y="4.3" width="1.3" height="1.3" fill="#101010"/><rect x="6" y="0" width="1.3" height="1.3" fill="#6a6a6a"/><rect x="6" y="1.3" width="1.3" height="1.3" fill="#101010"/><rect x="6" y="3" width="1.3" height="1.3" fill="#6a6a6a"/><rect x="6" y="4.3" width="1.3" height="1.3" fill="#101010"/><rect x="9" y="0" width="1.3" height="1.3" fill="#6a6a6a"/><rect x="9" y="1.3" width="1.3" height="1.3" fill="#101010"/><rect x="9" y="3" width="1.3" height="1.3" fill="#6a6a6a"/><rect x="9" y="4.3" width="1.3" height="1.3" fill="#101010"/></svg>
<div style="left:1202px;top:438px;width:179px;height:24px;background:#333333;"></div>
<svg style="position:absolute;left:1214px;top:445px;overflow:visible;" width="9" height="9" viewBox="0 0 9 9"><path d="M1 0L8 4.5L1 9Z" fill="#9a9a9a"/></svg>
<div class="t" style="left:1226px;top:443.64px;font-size:12px;color:#d8d8d8;letter-spacing:0.402px;">View</div>
<svg style="position:absolute;left:1359px;top:447px;overflow:visible;" width="12" height="7" viewBox="0 0 12 7"><rect x="0" y="0" width="1.3" height="1.3" fill="#6a6a6a"/><rect x="0" y="1.3" width="1.3" height="1.3" fill="#101010"/><rect x="0" y="3" width="1.3" height="1.3" fill="#6a6a6a"/><rect x="0" y="4.3" width="1.3" height="1.3" fill="#101010"/><rect x="3" y="0" width="1.3" height="1.3" fill="#6a6a6a"/><rect x="3" y="1.3" width="1.3" height="1.3" fill="#101010"/><rect x="3" y="3" width="1.3" height="1.3" fill="#6a6a6a"/><rect x="3" y="4.3" width="1.3" height="1.3" fill="#101010"/><rect x="6" y="0" width="1.3" height="1.3" fill="#6a6a6a"/><rect x="6" y="1.3" width="1.3" height="1.3" fill="#101010"/><rect x="6" y="3" width="1.3" height="1.3" fill="#6a6a6a"/><rect x="6" y="4.3" width="1.3" height="1.3" fill="#101010"/><rect x="9" y="0" width="1.3" height="1.3" fill="#6a6a6a"/><rect x="9" y="1.3" width="1.3" height="1.3" fill="#101010"/><rect x="9" y="3" width="1.3" height="1.3" fill="#6a6a6a"/><rect x="9" y="4.3" width="1.3" height="1.3" fill="#101010"/></svg>
<div style="left:1202px;top:462px;width:179px;height:24px;background:#333333;"></div>
<svg style="position:absolute;left:1214px;top:469px;overflow:visible;" width="9" height="9" viewBox="0 0 9 9"><path d="M1 0L8 4.5L1 9Z" fill="#9a9a9a"/></svg>
<div class="t" style="left:1226px;top:467.64px;font-size:12px;color:#d8d8d8;letter-spacing:0.324px;">Viewport Display</div>
<svg style="position:absolute;left:1359px;top:471px;overflow:visible;" width="12" height="7" viewBox="0 0 12 7"><rect x="0" y="0" width="1.3" height="1.3" fill="#6a6a6a"/><rect x="0" y="1.3" width="1.3" height="1.3" fill="#101010"/><rect x="0" y="3" width="1.3" height="1.3" fill="#6a6a6a"/><rect x="0" y="4.3" width="1.3" height="1.3" fill="#101010"/><rect x="3" y="0" width="1.3" height="1.3" fill="#6a6a6a"/><rect x="3" y="1.3" width="1.3" height="1.3" fill="#101010"/><rect x="3" y="3" width="1.3" height="1.3" fill="#6a6a6a"/><rect x="3" y="4.3" width="1.3" height="1.3" fill="#101010"/><rect x="6" y="0" width="1.3" height="1.3" fill="#6a6a6a"/><rect x="6" y="1.3" width="1.3" height="1.3" fill="#101010"/><rect x="6" y="3" width="1.3" height="1.3" fill="#6a6a6a"/><rect x="6" y="4.3" width="1.3" height="1.3" fill="#101010"/><rect x="9" y="0" width="1.3" height="1.3" fill="#6a6a6a"/><rect x="9" y="1.3" width="1.3" height="1.3" fill="#101010"/><rect x="9" y="3" width="1.3" height="1.3" fill="#6a6a6a"/><rect x="9" y="4.3" width="1.3" height="1.3" fill="#101010"/></svg>
<div style="left:1202px;top:486px;width:179px;height:24px;background:#333333;"></div>
<svg style="position:absolute;left:1214px;top:493px;overflow:visible;" width="9" height="9" viewBox="0 0 9 9"><path d="M1 0L8 4.5L1 9Z" fill="#9a9a9a"/></svg>
<div class="t" style="left:1226px;top:491.64px;font-size:12px;color:#d8d8d8;letter-spacing:0.150px;">Object Shading</div>
<svg style="position:absolute;left:1359px;top:495px;overflow:visible;" width="12" height="7" viewBox="0 0 12 7"><rect x="0" y="0" width="1.3" height="1.3" fill="#6a6a6a"/><rect x="0" y="1.3" width="1.3" height="1.3" fill="#101010"/><rect x="0" y="3" width="1.3" height="1.3" fill="#6a6a6a"/><rect x="0" y="4.3" width="1.3" height="1.3" fill="#101010"/><rect x="3" y="0" width="1.3" height="1.3" fill="#6a6a6a"/><rect x="3" y="1.3" width="1.3" height="1.3" fill="#101010"/><rect x="3" y="3" width="1.3" height="1.3" fill="#6a6a6a"/><rect x="3" y="4.3" width="1.3" height="1.3" fill="#101010"/><rect x="6" y="0" width="1.3" height="1.3" fill="#6a6a6a"/><rect x="6" y="1.3" width="1.3" height="1.3" fill="#101010"/><rect x="6" y="3" width="1.3" height="1.3" fill="#6a6a6a"/><rect x="6" y="4.3" width="1.3" height="1.3" fill="#101010"/><rect x="9" y="0" width="1.3" height="1.3" fill="#6a6a6a"/><rect x="9" y="1.3" width="1.3" height="1.3" fill="#101010"/><rect x="9" y="3" width="1.3" height="1.3" fill="#6a6a6a"/><rect x="9" y="4.3" width="1.3" height="1.3" fill="#101010"/></svg>
<div style="left:1202px;top:510px;width:179px;height:24px;background:#333333;"></div>
<svg style="position:absolute;left:1214px;top:517px;overflow:visible;" width="9" height="9" viewBox="0 0 9 9"><path d="M1 0L8 4.5L1 9Z" fill="#9a9a9a"/></svg>
<div style="left:1227px;top:515px;width:13px;height:13px;background:#5680c2;border:1px solid #222;border-radius:3px;"></div>
<svg style="position:absolute;left:1228px;top:514px;overflow:visible;" width="13" height="13" viewBox="0 0 13 13"><path d="M2.5 7L5.5 10L11 2.5" stroke="#5ee0a0" stroke-width="1.8" fill="none"/></svg>
<div class="t" style="left:1246px;top:515.64px;font-size:12px;color:#d8d8d8;letter-spacing:0.164px;">Motion Tracking</div>
<svg style="position:absolute;left:1359px;top:519px;overflow:visible;" width="12" height="7" viewBox="0 0 12 7"><rect x="0" y="0" width="1.3" height="1.3" fill="#6a6a6a"/><rect x="0" y="1.3" width="1.3" height="1.3" fill="#101010"/><rect x="0" y="3" width="1.3" height="1.3" fill="#6a6a6a"/><rect x="0" y="4.3" width="1.3" height="1.3" fill="#101010"/><rect x="3" y="0" width="1.3" height="1.3" fill="#6a6a6a"/><rect x="3" y="1.3" width="1.3" height="1.3" fill="#101010"/><rect x="3" y="3" width="1.3" height="1.3" fill="#6a6a6a"/><rect x="3" y="4.3" width="1.3" height="1.3" fill="#101010"/><rect x="6" y="0" width="1.3" height="1.3" fill="#6a6a6a"/><rect x="6" y="1.3" width="1.3" height="1.3" fill="#101010"/><rect x="6" y="3" width="1.3" height="1.3" fill="#6a6a6a"/><rect x="6" y="4.3" width="1.3" height="1.3" fill="#101010"/><rect x="9" y="0" width="1.3" height="1.3" fill="#6a6a6a"/><rect x="9" y="1.3" width="1.3" height="1.3" fill="#101010"/><rect x="9" y="3" width="1.3" height="1.3" fill="#6a6a6a"/><rect x="9" y="4.3" width="1.3" height="1.3" fill="#101010"/></svg>
<div style="left:1202px;top:534px;width:179px;height:24px;background:#333333;"></div>
<svg style="position:absolute;left:1214px;top:541px;overflow:visible;" width="9" height="9" viewBox="0 0 9 9"><path d="M1 0L8 4.5L1 9Z" fill="#9a9a9a"/></svg>
<div class="t" style="left:1226px;top:539.64px;font-size:12px;color:#d8d8d8;letter-spacing:0.271px;">Mesh Display</div>
<svg style="position:absolute;left:1359px;top:543px;overflow:visible;" width="12" height="7" viewBox="0 0 12 7"><rect x="0" y="0" width="1.3" height="1.3" fill="#6a6a6a"/><rect x="0" y="1.3" width="1.3" height="1.3" fill="#101010"/><rect x="0" y="3" width="1.3" height="1.3" fill="#6a6a6a"/><rect x="0" y="4.3" width="1.3" height="1.3" fill="#101010"/><rect x="3" y="0" width="1.3" height="1.3" fill="#6a6a6a"/><rect x="3" y="1.3" width="1.3" height="1.3" fill="#101010"/><rect x="3" y="3" width="1.3" height="1.3" fill="#6a6a6a"/><rect x="3" y="4.3" width="1.3" height="1.3" fill="#101010"/><rect x="6" y="0" width="1.3" height="1.3" fill="#6a6a6a"/><rect x="6" y="1.3" width="1.3" height="1.3" fill="#101010"/><rect x="6" y="3" width="1.3" height="1.3" fill="#6a6a6a"/><rect x="6" y="4.3" width="1.3" height="1.3" fill="#101010"/><rect x="9" y="0" width="1.3" height="1.3" fill="#6a6a6a"/><rect x="9" y="1.3" width="1.3" height="1.3" fill="#101010"/><rect x="9" y="3" width="1.3" height="1.3" fill="#6a6a6a"/><rect x="9" y="4.3" width="1.3" height="1.3" fill="#101010"/></svg>
<div style="left:1202px;top:558px;width:179px;height:24px;background:#333333;"></div>
<svg style="position:absolute;left:1214px;top:565px;overflow:visible;" width="9" height="9" viewBox="0 0 9 9"><path d="M1 0L8 4.5L1 9Z" fill="#9a9a9a"/></svg>
<div style="left:1227px;top:563px;width:13px;height:13px;background:#3f5373;border:1px solid #222;border-radius:3px;"></div>
<div class="t" style="left:1246px;top:563.64px;font-size:12px;color:#d8d8d8;letter-spacing:0.275px;">Mesh Analysis</div>
<svg style="position:absolute;left:1359px;top:567px;overflow:visible;" width="12" height="7" viewBox="0 0 12 7"><rect x="0" y="0" width="1.3" height="1.3" fill="#6a6a6a"/><rect x="0" y="1.3" width="1.3" height="1.3" fill="#101010"/><rect x="0" y="3" width="1.3" height="1.3" fill="#6a6a6a"/><rect x="0" y="4.3" width="1.3" height="1.3" fill="#101010"/><rect x="3" y="0" width="1.3" height="1.3" fill="#6a6a6a"/><rect x="3" y="1.3" width="1.3" height="1.3" fill="#101010"/><rect x="3" y="3" width="1.3" height="1.3" fill="#6a6a6a"/><rect x="3" y="4.3" width="1.3" height="1.3" fill="#101010"/><rect x="6" y="0" width="1.3" height="1.3" fill="#6a6a6a"/><rect x="6" y="1.3" width="1.3" height="1.3" fill="#101010"/><rect x="6" y="3" width="1.3" height="1.3" fill="#6a6a6a"/><rect x="6" y="4.3" width="1.3" height="1.3" fill="#101010"/><rect x="9" y="0" width="1.3" height="1.3" fill="#6a6a6a"/><rect x="9" y="1.3" width="1.3" height="1.3" fill="#101010"/><rect x="9" y="3" width="1.3" height="1.3" fill="#6a6a6a"/><rect x="9" y="4.3" width="1.3" height="1.3" fill="#101010"/></svg>
<div style="left:1202px;top:582px;width:179px;height:24px;background:#333333;"></div>
<svg style="position:absolute;left:1214px;top:589px;overflow:visible;" width="9" height="9" viewBox="0 0 9 9"><path d="M1 0L8 4.5L1 9Z" fill="#9a9a9a"/></svg>
<div style="left:1227px;top:587px;width:13px;height:13px;background:#3f5373;border:1px solid #222;border-radius:3px;"></div>
<div class="t" style="left:1246px;top:587.64px;font-size:12px;color:#d8d8d8;letter-spacing:0.142px;">Background Images</div>
<svg style="position:absolute;left:1359px;top:591px;overflow:visible;" width="12" height="7" viewBox="0 0 12 7"><rect x="0" y="0" width="1.3" height="1.3" fill="#6a6a6a"/><rect x="0" y="1.3" width="1.3" height="1.3" fill="#101010"/><rect x="0" y="3" width="1.3" height="1.3" fill="#6a6a6a"/><rect x="0" y="4.3" width="1.3" height="1.3" fill="#101010"/><rect x="3" y="0" width="1.3" height="1.3" fill="#6a6a6a"/><rect x="3" y="1.3" width="1.3" height="1.3" fill="#101010"/><rect x="3" y="3" width="1.3" height="1.3" fill="#6a6a6a"/><rect x="3" y="4.3" width="1.3" height="1.3" fill="#101010"/><rect x="6" y="0" width="1.3" height="1.3" fill="#6a6a6a"/><rect x="6" y="1.3" width="1.3" height="1.3" fill="#101010"/><rect x="6" y="3" width="1.3" height="1.3" fill="#6a6a6a"/><rect x="6" y="4.3" width="1.3" height="1.3" fill="#101010"/><rect x="9" y="0" width="1.3" height="1.3" fill="#6a6a6a"/><rect x="9" y="1.3" width="1.3" height="1.3" fill="#101010"/><rect x="9" y="3" width="1.3" height="1.3" fill="#6a6a6a"/><rect x="9" y="4.3" width="1.3" height="1.3" fill="#101010"/></svg>
<div style="left:1202px;top:606px;width:179px;height:24px;background:#333333;"></div>
<svg style="position:absolute;left:1214px;top:613px;overflow:visible;" width="9" height="9" viewBox="0 0 9 9"><path d="M1 0L8 4.5L1 9Z" fill="#9a9a9a"/></svg>
<div class="t" style="left:1226px;top:611.64px;font-size:12px;color:#d8d8d8;letter-spacing:0.226px;">Transform Orientations</div>
<svg style="position:absolute;left:1359px;top:615px;overflow:visible;" width="12" height="7" viewBox="0 0 12 7"><rect x="0" y="0" width="1.3" height="1.3" fill="#6a6a6a"/><rect x="0" y="1.3" width="1.3" height="1.3" fill="#101010"/><rect x="0" y="3" width="1.3" height="1.3" fill="#6a6a6a"/><rect x="0" y="4.3" width="1.3" height="1.3" fill="#101010"/><rect x="3" y="0" width="1.3" height="1.3" fill="#6a6a6a"/><rect x="3" y="1.3" width="1.3" height="1.3" fill="#101010"/><rect x="3" y="3" width="1.3" height="1.3" fill="#6a6a6a"/><rect x="3" y="4.3" width="1.3" height="1.3" fill="#101010"/><rect x="6" y="0" width="1.3" height="1.3" fill="#6a6a6a"/><rect x="6" y="1.3" width="1.3" height="1.3" fill="#101010"/><rect x="6" y="3" width="1.3" height="1.3" fill="#6a6a6a"/><rect x="6" y="4.3" width="1.3" height="1.3" fill="#101010"/><rect x="9" y="0" width="1.3" height="1.3" fill="#6a6a6a"/><rect x="9" y="1.3" width="1.3" height="1.3" fill="#101010"/><rect x="9" y="3" width="1.3" height="1.3" fill="#6a6a6a"/><rect x="9" y="4.3" width="1.3" height="1.3" fill="#101010"/></svg>
<div style="left:1202px;top:630px;width:179px;height:23px;background:#333333;"></div>
<svg style="position:absolute;left:1213px;top:637px;overflow:visible;" width="9" height="9" viewBox="0 0 9 9"><path d="M0 1L9 1L4.5 8Z" fill="#9a9a9a"/></svg>
<div class="t" style="left:1226px;top:635.64px;font-size:12px;color:#d8d8d8;letter-spacing:-0.030px;">Stroke Select</div>
<svg style="position:absolute;left:1359px;top:639px;overflow:visible;" width="12" height="7" viewBox="0 0 12 7"><rect x="0" y="0" width="1.3" height="1.3" fill="#6a6a6a"/><rect x="0" y="1.3" width="1.3" height="1.3" fill="#101010"/><rect x="0" y="3" width="1.3" height="1.3" fill="#6a6a6a"/><rect x="0" y="4.3" width="1.3" height="1.3" fill="#101010"/><rect x="3" y="0" width="1.3" height="1.3" fill="#6a6a6a"/><rect x="3" y="1.3" width="1.3" height="1.3" fill="#101010"/><rect x="3" y="3" width="1.3" height="1.3" fill="#6a6a6a"/><rect x="3" y="4.3" width="1.3" height="1.3" fill="#101010"/><rect x="6" y="0" width="1.3" height="1.3" fill="#6a6a6a"/><rect x="6" y="1.3" width="1.3" height="1.3" fill="#101010"/><rect x="6" y="3" width="1.3" height="1.3" fill="#6a6a6a"/><rect x="6" y="4.3" width="1.3" height="1.3" fill="#101010"/><rect x="9" y="0" width="1.3" height="1.3" fill="#6a6a6a"/><rect x="9" y="1.3" width="1.3" height="1.3" fill="#101010"/><rect x="9" y="3" width="1.3" height="1.3" fill="#6a6a6a"/><rect x="9" y="4.3" width="1.3" height="1.3" fill="#101010"/></svg>
<div style="left:1202px;top:653px;width:179px;height:37px;background:#454545;"></div>
<div style="left:1213px;top:665px;width:13px;height:13px;background:#3f5373;border:1px solid #222;border-radius:3px;"></div>
<div class="t" style="left:1234.5px;top:665.59px;font-size:11px;color:#d0d0d0;letter-spacing:0.029px;">Deselect</div>
<div style="left:1202px;top:690px;width:179px;height:23px;background:#333333;"></div>
<svg style="position:absolute;left:1213px;top:697px;overflow:visible;" width="9" height="9" viewBox="0 0 9 9"><path d="M0 1L9 1L4.5 8Z" fill="#9a9a9a"/></svg>
<div class="t" style="left:1226px;top:695.64px;font-size:12px;color:#d8d8d8;letter-spacing:0.227px;">Important Hotkeys</div>
<svg style="position:absolute;left:1359px;top:699px;overflow:visible;" width="12" height="7" viewBox="0 0 12 7"><rect x="0" y="0" width="1.3" height="1.3" fill="#6a6a6a"/><rect x="0" y="1.3" width="1.3" height="1.3" fill="#101010"/><rect x="0" y="3" width="1.3" height="1.3" fill="#6a6a6a"/><rect x="0" y="4.3" width="1.3" height="1.3" fill="#101010"/><rect x="3" y="0" width="1.3" height="1.3" fill="#6a6a6a"/><rect x="3" y="1.3" width="1.3" height="1.3" fill="#101010"/><rect x="3" y="3" width="1.3" height="1.3" fill="#6a6a6a"/><rect x="3" y="4.3" width="1.3" height="1.3" fill="#101010"/><rect x="6" y="0" width="1.3" height="1.3" fill="#6a6a6a"/><rect x="6" y="1.3" width="1.3" height="1.3" fill="#101010"/><rect x="6" y="3" width="1.3" height="1.3" fill="#6a6a6a"/><rect x="6" y="4.3" width="1.3" height="1.3" fill="#101010"/><rect x="9" y="0" width="1.3" height="1.3" fill="#6a6a6a"/><rect x="9" y="1.3" width="1.3" height="1.3" fill="#101010"/><rect x="9" y="3" width="1.3" height="1.3" fill="#6a6a6a"/><rect x="9" y="4.3" width="1.3" height="1.3" fill="#101010"/></svg>
<div style="left:1202px;top:713px;width:179px;height:62px;background:#454545;"></div>
<div style="left:1209.5px;top:722.5px;width:163px;height:20px;background:#595959;border:1px solid #262626;border-radius:4px;"></div>
<div class="t" style="left:1209.5px;top:727.09px;width:163px;text-align:center;font-size:11px;color:#d8d8d8;letter-spacing:0.212px;">Show text</div>
<div style="left:1209.5px;top:748px;width:30px;height:19px;background:#ffffff;border:1px solid #262626;border-radius:4px;"></div>
<div style="left:1248px;top:748px;width:125px;height:19px;background:#383838;border:1px solid #262626;border-radius:10px"></div>
<svg style="position:absolute;left:1254px;top:754px;overflow:visible;" width="6" height="8" viewBox="0 0 6 8"><path d="M5 0L0 4L5 8Z" fill="#bbb"/></svg>
<svg style="position:absolute;left:1364px;top:754px;overflow:visible;" width="6" height="8" viewBox="0 0 6 8"><path d="M0 0L5 4L0 8Z" fill="#bbb"/></svg>
<div class="t" style="left:1264px;top:751.59px;font-size:11px;color:#d8d8d8;letter-spacing:0.047px;">Fontsize:</div>
<div class="t" style="right:323px;top:751.59px;font-size:11px;color:#e0e0e0;letter-spacing:0.582px;">11</div>
<div style="left:1202px;top:775px;width:179px;height:182px;background:#404040;"></div>
<div style="left:1382px;top:78px;width:298px;height:26px;background:#2b2b2b;"></div>
<div style="left:1392px;top:82px;width:18px;height:19px;background:#2525c8;border:1px solid #1f1f1f;border-left-width:1px;border-radius:4px 0 0 4px;box-shadow:inset 1px 0 0 rgba(0,0,0,0.25)"></div>
<div style="left:1410px;top:82px;width:19px;height:19px;background:#565656;border:1px solid #1f1f1f;border-left-width:0px;border-radius:0 4px 4px 0;box-shadow:inset 1px 0 0 rgba(0,0,0,0.25)"></div>
<svg style="position:absolute;left:1393.5px;top:84px" width="15" height="15" viewBox="0 0 16 16"><rect x="1" y="1" width="6" height="3" rx="1" fill="#f09020" stroke="#fff" stroke-width="0.5"/><path d="M3 4V13H8M3 8.5H8" stroke="#9ab" stroke-width="1" fill="none"/><rect x="8" y="7" width="7" height="3" rx="1" fill="#fff"/><rect x="8" y="12" width="7" height="3" rx="1" fill="#fff"/></svg>
<svg style="position:absolute;left:1412px;top:84px" width="15" height="15" viewBox="0 0 16 16"><rect x="1" y="2" width="14" height="5" rx="2" fill="#555" stroke="#fff" stroke-width="1.2"/><rect x="9" y="2.5" width="5.5" height="4" rx="1.5" fill="#ddd"/><rect x="1" y="9" width="14" height="5" rx="2" fill="#ddd" stroke="#fff" stroke-width="1.2"/><path d="M2.5 11.5L4.5 10V13Z M13.5 11.5L11.5 10V13Z" fill="#111"/></svg>
<div class="t" style="left:1443px;top:85.59px;font-size:11px;color:#d8d8d8;letter-spacing:0.119px;">View</div>
<div style="left:1482px;top:82.5px;width:117px;height:18px;background:#3f5373;border:1px solid #222;border-radius:4px;"></div>
<div class="t" style="left:1489px;top:85.59px;font-size:11px;color:#e8e8e8;letter-spacing:0.003px;">All Scenes</div>
<svg style="position:absolute;left:1589px;top:84px;overflow:visible;" width="8" height="14" viewBox="0 0 8 14"><path d="M4 1L7 5.5H1Z M4 13L7 8.5H1Z" fill="#c8c8c8"/></svg>
<div style="left:1606px;top:82.5px;width:80px;height:19px;background:#585858;border:1px solid #222;border-radius:4px;"></div>
<svg style="position:absolute;left:1610px;top:84px;overflow:visible;" width="14" height="14" viewBox="0 0 14 14"><circle cx="8.5" cy="5.5" r="4" fill="#ccc" stroke="#333" stroke-width="1"/><path d="M6 8L1.5 12.5" stroke="#e08030" stroke-width="2"/></svg>
<svg style="position:absolute;left:1666px;top:78px;overflow:visible;" width="14" height="14" viewBox="0 0 14 14"><path d="M10 0 L14 4" stroke="#707070" stroke-width="1"/><path d="M6 0 L14 8" stroke="#707070" stroke-width="1"/><path d="M2 0 L14 12" stroke="#707070" stroke-width="1"/></svg>
<div style="left:1382px;top:104px;width:298px;height:94px;background:#3d3d3d;"></div>
<div style="left:1382px;top:103px;width:298px;height:20px;background:#3b3b3b;"></div>
<div style="left:1382px;top:123px;width:298px;height:20px;background:#414141;"></div>
<div style="left:1382px;top:143px;width:298px;height:20px;background:#3b3b3b;"></div>
<div style="left:1382px;top:163px;width:298px;height:20px;background:#414141;"></div>
<div style="left:1382px;top:183px;width:298px;height:20px;background:#3b3b3b;"></div>
<div style="left:1603px;top:104px;width:1px;height:94px;background:#333333;"></div>
<div style="left:1623px;top:104px;width:1px;height:94px;background:#333333;"></div>
<div style="left:1643px;top:104px;width:1px;height:94px;background:#333333;"></div>
<svg style="position:absolute;left:1382px;top:104px;overflow:visible;" width="200" height="94" viewBox="0 0 200 94"><path d="M4.5 10H24 M23 20V90 M23 70H34 M23 90H34" stroke="#8a8a8a" stroke-width="1"/></svg>
<svg style="position:absolute;left:1380px;top:108.5px;overflow:visible;" width="11" height="11" viewBox="0 0 11 11"><circle cx="5.5" cy="5.5" r="5" fill="#ddd" stroke="#333" stroke-width="0.8"/><path d="M2.5 5.5H8.5" stroke="#222" stroke-width="1.4"/></svg>
<svg style="position:absolute;left:1395px;top:104px;overflow:visible;" width="22" height="20" viewBox="0 0 22 20"><circle cx="11" cy="10" r="8.5" fill="#777"/><circle cx="9" cy="13" r="3.5" fill="#ddd"/><rect x="11" y="4" width="5" height="9" rx="1" fill="#5a8ad0"/><circle cx="6" cy="5" r="2" fill="#cc4"/></svg>
<div class="t" style="left:1418px;top:109.59px;font-size:11px;color:#d8d8d8;letter-spacing:-0.297px;">Scene</div>
<svg style="position:absolute;left:1400px;top:128.5px;overflow:visible;" width="11" height="11" viewBox="0 0 11 11"><circle cx="5.5" cy="5.5" r="5" fill="#ddd" stroke="#333" stroke-width="0.8"/><path d="M2.5 5.5H8.5M5.5 2.5V8.5" stroke="#222" stroke-width="1.4"/></svg>
<svg style="position:absolute;left:1417px;top:126px;overflow:visible;" width="16" height="16" viewBox="0 0 16 16"><rect x="3" y="4" width="11" height="11" fill="#c8b890" transform="rotate(8 8 8)"/><rect x="1" y="1" width="11" height="11" fill="#e8e8f0" stroke="#333" stroke-width="0.6"/><rect x="5" y="3" width="4" height="6" fill="#4a70c0"/></svg>
<div class="t" style="left:1438px;top:129.59px;font-size:11px;color:#d8d8d8;letter-spacing:-0.099px;">RenderLayers</div>
<div style="left:1516px;top:128px;width:1.5px;height:12px;background:#111;"></div>
<svg style="position:absolute;left:1527px;top:126px;overflow:visible;" width="16" height="16" viewBox="0 0 16 16"><circle cx="8" cy="8" r="8" fill="#555"/><rect x="3" y="3" width="10" height="10" fill="#e8e8f0"/><rect x="6" y="4" width="3" height="5" fill="#4a70c0"/></svg>
<svg style="position:absolute;left:1417px;top:145px;overflow:visible;" width="18" height="18" viewBox="0 0 18 18"><circle cx="9" cy="9" r="8" fill="#777"/><circle cx="9" cy="9" r="6" fill="#3a78b8"/><path d="M5 6Q8 4 9 8Q7 11 5 9Z M10 11Q13 9 14 12Q11 14 10 11Z" fill="#5aa05a"/></svg>
<div class="t" style="left:1438px;top:148.59px;font-size:11px;color:#d8d8d8;letter-spacing:0.119px;">World</div>
<svg style="position:absolute;left:1400px;top:169px;overflow:visible;" width="11" height="11" viewBox="0 0 11 11"><circle cx="5.5" cy="5.5" r="5" fill="#ddd" stroke="#333" stroke-width="0.8"/><path d="M2.5 5.5H8.5M5.5 2.5V8.5" stroke="#222" stroke-width="1.4"/></svg>
<svg style="position:absolute;left:1418px;top:166px;overflow:visible;" width="16" height="16" viewBox="0 0 16 16"><circle cx="5" cy="4" r="3" fill="#e09030"/><circle cx="11" cy="4" r="3" fill="#e09030"/><rect x="2" y="7" width="11" height="7" fill="#e09030"/><path d="M13 9L16 7V14L13 12Z" fill="#e09030"/></svg>
<div class="t" style="left:1438px;top:169.59px;font-size:11px;color:#d8d8d8;letter-spacing:-0.224px;">Camera</div>
<div style="left:1492px;top:168px;width:1.5px;height:12px;background:#111;"></div>
<svg style="position:absolute;left:1497px;top:165px;overflow:visible;" width="19" height="19" viewBox="0 0 19 19"><circle cx="9.5" cy="9.5" r="9" fill="#6a6a6a"/><circle cx="9.5" cy="9.5" r="5" fill="#888"/></svg>
<svg style="position:absolute;left:1610px;top:170px;overflow:visible;" width="12" height="8" viewBox="0 0 12 8"><ellipse cx="6" cy="4" rx="5" ry="2.5" fill="#4a4a4a"/></svg>
<svg style="position:absolute;left:1630px;top:168px;overflow:visible;" width="10" height="12" viewBox="0 0 10 12"><path d="M1 0V10L3.5 7.5L6 12L8 11L5.5 6.5H9Z" fill="#eee" stroke="#111" stroke-width="0.6"/></svg>
<svg style="position:absolute;left:1647px;top:168px;overflow:visible;" width="14" height="12" viewBox="0 0 14 12"><rect x="1" y="3" width="12" height="8" fill="#ddd" stroke="#333" stroke-width="0.6"/><circle cx="7" cy="7" r="2.5" fill="#555"/></svg>
<svg style="position:absolute;left:1400px;top:189px;overflow:visible;" width="11" height="11" viewBox="0 0 11 11"><circle cx="5.5" cy="5.5" r="5" fill="#ddd" stroke="#333" stroke-width="0.8"/><path d="M2.5 5.5H8.5M5.5 2.5V8.5" stroke="#222" stroke-width="1.4"/></svg>
<svg style="position:absolute;left:1417px;top:184px;overflow:visible;" width="20" height="14" viewBox="0 0 20 14"><circle cx="10" cy="10" r="9" fill="#b08050"/><path d="M4 4H16L10 14Z" fill="none" stroke="#f0a040" stroke-width="2"/></svg>
<div class="t" style="left:1438px;top:189.59px;font-size:11px;color:#d8d8d8;letter-spacing:0.008px;">Future_FBX_2000</div>
<div style="left:1538.5px;top:188px;width:1.5px;height:10px;background:#111;"></div>
<svg style="position:absolute;left:1548.5px;top:184px;overflow:visible;" width="19" height="14" viewBox="0 0 19 14"><circle cx="9.5" cy="9.5" r="9" fill="#6a6a6a"/></svg>
<svg style="position:absolute;left:1606px;top:189px;overflow:visible;" width="14" height="8" viewBox="0 0 14 8"><ellipse cx="7" cy="4" rx="6" ry="3.5" fill="#eee"/><circle cx="7" cy="4" r="2" fill="#222"/></svg>
<svg style="position:absolute;left:1630px;top:188px;overflow:visible;" width="10" height="10" viewBox="0 0 10 10"><path d="M1 0V10L3.5 7.5L6 12L8 11L5.5 6.5H9Z" fill="#eee" stroke="#111" stroke-width="0.6"/></svg>
<svg style="position:absolute;left:1647px;top:188px;overflow:visible;" width="14" height="10" viewBox="0 0 14 10"><rect x="1" y="3" width="12" height="8" fill="#ddd" stroke="#333" stroke-width="0.6"/></svg>
<div style="left:1663.5px;top:110px;width:11.5px;height:55px;background:#686868;border-radius:6px"></div>
<div style="left:1382px;top:198px;width:298px;height:17px;background:#383838;"></div>
<div style="left:1392.5px;top:199.5px;width:254px;height:11px;background:#5e5e5e;border-radius:6px"></div>
<svg style="position:absolute;left:1382px;top:201px;overflow:visible;" width="14" height="14" viewBox="0 0 14 14"><path d="M0 10 L4 14" stroke="#707070" stroke-width="1"/><path d="M0 6 L8 14" stroke="#707070" stroke-width="1"/><path d="M0 2 L12 14" stroke="#707070" stroke-width="1"/></svg>
<div style="left:1382px;top:215px;width:298px;height:1px;background:#070707;"></div>
<div style="left:1382px;top:216px;width:298px;height:26px;background:#2b2b2b;"></div>
<div style="left:1382px;top:241px;width:298px;height:1px;background:#3a3a3a;"></div>
<div style="left:1392px;top:220px;width:18.5px;height:18.5px;background:#565656;border:1px solid #1f1f1f;border-left-width:1px;border-radius:4px 0 0 4px;box-shadow:inset 1px 0 0 rgba(0,0,0,0.25)"></div>
<div style="left:1410.5px;top:220px;width:18.5px;height:18.5px;background:#1010e0;border:1px solid #1f1f1f;border-left-width:0px;border-radius:0 4px 4px 0;box-shadow:inset 1px 0 0 rgba(0,0,0,0.25)"></div>
<svg style="position:absolute;left:1393.5px;top:222px" width="15" height="15" viewBox="0 0 16 16"><rect x="1" y="1" width="6" height="3" rx="1" fill="#f09020" stroke="#fff" stroke-width="0.5"/><path d="M3 4V13H8M3 8.5H8" stroke="#9ab" stroke-width="1" fill="none"/><rect x="8" y="7" width="7" height="3" rx="1" fill="#fff"/><rect x="8" y="12" width="7" height="3" rx="1" fill="#fff"/></svg>
<svg style="position:absolute;left:1412px;top:222px" width="15" height="15" viewBox="0 0 16 16"><rect x="1" y="2" width="14" height="5" rx="2" fill="#555" stroke="#fff" stroke-width="1.2"/><rect x="9" y="2.5" width="5.5" height="4" rx="1.5" fill="#ddd"/><rect x="1" y="9" width="14" height="5" rx="2" fill="#ddd" stroke="#fff" stroke-width="1.2"/><path d="M2.5 11.5L4.5 10V13Z M13.5 11.5L11.5 10V13Z" fill="#111"/></svg>
<div style="left:1437px;top:220px;width:19.8px;height:18.5px;background:#565656;border:1px solid #1f1f1f;border-left-width:1px;border-radius:4px 0 0 4px;box-shadow:inset 1px 0 0 rgba(0,0,0,0.25)"></div>
<div style="left:1456.8px;top:220px;width:19.8px;height:18.5px;background:#565656;border:1px solid #1f1f1f;border-left-width:0px;border-radius:0 0 0 0;box-shadow:inset 1px 0 0 rgba(0,0,0,0.25)"></div>
<div style="left:1476.6px;top:220px;width:19.8px;height:18.5px;background:#565656;border:1px solid #1f1f1f;border-left-width:0px;border-radius:0 0 0 0;box-shadow:inset 1px 0 0 rgba(0,0,0,0.25)"></div>
<div style="left:1496.3999999999999px;top:220px;width:19.8px;height:18.5px;background:#565656;border:1px solid #1f1f1f;border-left-width:0px;border-radius:0 0 0 0;box-shadow:inset 1px 0 0 rgba(0,0,0,0.25)"></div>
<div style="left:1516.1999999999998px;top:220px;width:19.8px;height:18.5px;background:#565656;border:1px solid #1f1f1f;border-left-width:0px;border-radius:0 0 0 0;box-shadow:inset 1px 0 0 rgba(0,0,0,0.25)"></div>
<div style="left:1535.9999999999998px;top:220px;width:19.8px;height:18.5px;background:#565656;border:1px solid #1f1f1f;border-left-width:0px;border-radius:0 0 0 0;box-shadow:inset 1px 0 0 rgba(0,0,0,0.25)"></div>
<div style="left:1555.7999999999997px;top:220px;width:19.8px;height:18.5px;background:#565656;border:1px solid #1f1f1f;border-left-width:0px;border-radius:0 0 0 0;box-shadow:inset 1px 0 0 rgba(0,0,0,0.25)"></div>
<div style="left:1575.5999999999997px;top:220px;width:19.8px;height:18.5px;background:#565656;border:1px solid #1f1f1f;border-left-width:0px;border-radius:0 0 0 0;box-shadow:inset 1px 0 0 rgba(0,0,0,0.25)"></div>
<div style="left:1595.3999999999996px;top:220px;width:19.8px;height:18.5px;background:#5680c2;border:1px solid #1f1f1f;border-left-width:0px;border-radius:0 0 0 0;box-shadow:inset 1px 0 0 rgba(0,0,0,0.25)"></div>
<div style="left:1615.1999999999996px;top:220px;width:19.8px;height:18.5px;background:#565656;border:1px solid #1f1f1f;border-left-width:0px;border-radius:0 0 0 0;box-shadow:inset 1px 0 0 rgba(0,0,0,0.25)"></div>
<div style="left:1634.9999999999995px;top:220px;width:19.8px;height:18.5px;background:#565656;border:1px solid #1f1f1f;border-left-width:0px;border-radius:0 0 0 0;box-shadow:inset 1px 0 0 rgba(0,0,0,0.25)"></div>
<div style="left:1654.7999999999995px;top:220px;width:19.8px;height:18.5px;background:#565656;border:1px solid #1f1f1f;border-left-width:0px;border-radius:0 4px 4px 0;box-shadow:inset 1px 0 0 rgba(0,0,0,0.25)"></div>
<svg style="position:absolute;left:1439.4px;top:221.75px" width="15" height="15" viewBox="0 0 16 16"><rect x="1" y="4" width="14" height="10" rx="1" fill="#8a8a8a" stroke="#444" stroke-width="0.6"/><rect x="2" y="2" width="4" height="2" fill="#777"/><circle cx="9" cy="9" r="3.5" fill="#444"/><circle cx="9" cy="9" r="2" fill="#933"/></svg>
<svg style="position:absolute;left:1459.2px;top:221.75px" width="15" height="15" viewBox="0 0 16 16"><rect x="4" y="5" width="11" height="10" fill="#d8c8a0" transform="rotate(10 9 10)"/><rect x="1" y="1" width="11" height="11" fill="#e8eef8" stroke="#555" stroke-width="0.6"/><rect x="5" y="3" width="4" height="6" fill="#3a6ac0"/><circle cx="4" cy="9" r="1.5" fill="#555"/></svg>
<svg style="position:absolute;left:1479.0px;top:221.75px" width="15" height="15" viewBox="0 0 16 16"><circle cx="4" cy="3" r="2" fill="#dd6"/><circle cx="6" cy="11" r="4" fill="#ccc"/><rect x="8" y="3" width="6" height="9" rx="2" fill="#6a9ae0"/></svg>
<svg style="position:absolute;left:1498.8px;top:221.75px" width="15" height="15" viewBox="0 0 16 16"><circle cx="8" cy="8" r="7" fill="#3a7ac0" stroke="#999" stroke-width="0.8"/><path d="M3 6Q6 2 8 6Q7 10 4 9Z M9 10Q13 8 14 11Q11 14 9 10Z" fill="#6ab06a"/></svg>
<svg style="position:absolute;left:1518.6px;top:221.75px" width="15" height="15" viewBox="0 0 16 16"><path d="M8 1L15 4.5V12L8 15.5L1 12V4.5Z" fill="#c89050"/><path d="M1 4.5L8 8L15 4.5L8 1Z" fill="#e8b878"/><path d="M8 8V15.5" stroke="#a87030" stroke-width="0.6"/></svg>
<svg style="position:absolute;left:1538.3999999999999px;top:221.75px" width="15" height="15" viewBox="0 0 16 16"><rect x="1" y="6" width="8" height="5" rx="2.5" fill="none" stroke="#aaa" stroke-width="1.6" transform="rotate(-35 5 8.5)"/><rect x="7" y="5" width="8" height="5" rx="2.5" fill="none" stroke="#aaa" stroke-width="1.6" transform="rotate(-35 11 7.5)"/></svg>
<svg style="position:absolute;left:1558.1999999999998px;top:221.75px" width="15" height="15" viewBox="0 0 16 16"><path d="M2 14L9 7" stroke="#6a8ac0" stroke-width="2.5" stroke-linecap="round"/><path d="M9 7A4 4 0 1 1 14 3L11 5L12 6L15 4A4 4 0 0 1 9 7Z" fill="#6a8ac0"/></svg>
<svg style="position:absolute;left:1577.9999999999998px;top:221.75px" width="15" height="15" viewBox="0 0 16 16"><path d="M3 3H13L8 13Z" fill="none" stroke="#ccc" stroke-width="1"/><circle cx="3" cy="3" r="1.6" fill="#eee" stroke="#333" stroke-width="0.5"/><circle cx="13" cy="3" r="1.6" fill="#eee" stroke="#333" stroke-width="0.5"/><circle cx="8" cy="13" r="1.6" fill="#eee" stroke="#333" stroke-width="0.5"/></svg>
<svg style="position:absolute;left:1597.7999999999997px;top:221.75px" width="15" height="15" viewBox="0 0 16 16"><circle cx="8" cy="8" r="7" fill="#eee" stroke="#333" stroke-width="0.6"/><path d="M8 8V1A7 7 0 0 1 15 8Z M8 8V15A7 7 0 0 1 1 8Z" fill="#c88070"/></svg>
<svg style="position:absolute;left:1617.5999999999997px;top:221.75px" width="15" height="15" viewBox="0 0 16 16"><rect x="1" y="1" width="14" height="14" fill="#eee"/><path d="M1 1h3.5v3.5H1Z M8 1h3.5v3.5H8Z M4.5 4.5H8V8H4.5Z M11.5 4.5H15V8H11.5Z M1 8h3.5v3.5H1Z M8 8h3.5v3.5H8Z M4.5 11.5H8V15H4.5Z M11.5 11.5H15V15H11.5Z" fill="#a03030"/></svg>
<svg style="position:absolute;left:1637.3999999999996px;top:221.75px" width="15" height="15" viewBox="0 0 16 16"><path d="M4 1V7M1 4H7 M11 3V9M8 6H14 M5 9V15M2 12H8 M12 11V15M10 13H14" stroke="#e8d070" stroke-width="1"/></svg>
<svg style="position:absolute;left:1657.1999999999996px;top:221.75px" width="15" height="15" viewBox="0 0 16 16"><path d="M1 8L5 13L12 3" stroke="#6a8ac0" stroke-width="2.2" fill="none"/><circle cx="12" cy="4" r="3.2" fill="#ccc"/></svg>
<svg style="position:absolute;left:1666px;top:216px;overflow:visible;" width="14" height="14" viewBox="0 0 14 14"><path d="M10 0 L14 4" stroke="#707070" stroke-width="1"/><path d="M6 0 L14 8" stroke="#707070" stroke-width="1"/><path d="M2 0 L14 12" stroke="#707070" stroke-width="1"/></svg>
<div style="left:1382px;top:242px;width:298px;height:768px;background:#3a3a3a;"></div>
<div style="left:1663px;top:242px;width:13px;height:768px;background:#303030;"></div>
<div style="left:1664px;top:248.5px;width:11px;height:580px;background:#686868;border-radius:6px"></div>
<div style="left:1382px;top:242px;width:281px;height:233px;background:#454545;"></div>
<svg style="position:absolute;left:1392px;top:252px;overflow:visible;" width="14" height="14" viewBox="0 0 14 14"><path d="M2 12L6 8M5 3L11 9M7 2L12 7L9 9L5 5Z" stroke="#ddd" stroke-width="1.5" fill="#ddd"/></svg>
<svg style="position:absolute;left:1412px;top:251px;overflow:visible;" width="16" height="16" viewBox="0 0 16 16"><circle cx="5" cy="11" r="3.5" fill="#ddd"/><rect x="8" y="3" width="5" height="9" rx="1" fill="#5a8ad0"/><circle cx="4" cy="4" r="2" fill="#cc4"/></svg>
<svg style="position:absolute;left:1454px;top:253px" width="14" height="14" viewBox="0 0 16 16"><path d="M8 2L14 5V12L8 15L2 12V5Z" fill="#777" stroke="#333" stroke-width="0.6"/><path d="M2 5L8 8V15L2 12Z" fill="#c89860"/></svg>
<div class="t" style="left:1474px;top:254.59px;font-size:11px;color:#d8d8d8;letter-spacing:0.008px;">Future_FBX_2000</div>
<svg style="position:absolute;left:1596px;top:252px;overflow:visible;" width="14" height="14" viewBox="0 0 14 14"><circle cx="7" cy="7" r="6.5" fill="#ddd"/><path d="M7 7V0.5A6.5 6.5 0 0 1 13.5 7Z M7 7V13.5A6.5 6.5 0 0 1 0.5 7Z" fill="#c88070"/></svg>
<div class="t" style="left:1617px;top:254.59px;font-size:11px;color:#d8d8d8;letter-spacing:-0.279px;">Glass</div>
<div style="left:1390.5px;top:287.5px;width:236px;height:98px;background:#3a3a3a;border:1px solid #262626;border-radius:5px"></div>
<svg style="position:absolute;left:1397px;top:293px;overflow:visible;" width="16" height="16" viewBox="0 0 16 16"><defs><radialGradient id="sg" cx="0.35" cy="0.3" r="0.7"><stop offset="0" stop-color="#fff"/><stop offset="1" stop-color="#777"/></radialGradient></defs><circle cx="8" cy="8" r="7.5" fill="url(#sg)"/></svg>
<div class="t" style="left:1419px;top:295.09px;font-size:11px;color:#d8d8d8;letter-spacing:0.387px;">All</div>
<div style="left:1396px;top:312.5px;width:225px;height:17.5px;background:#5680c2;border-radius:3px"></div>
<svg style="position:absolute;left:1397px;top:313px;overflow:visible;" width="16" height="16" viewBox="0 0 16 16"><circle cx="8" cy="8" r="7.5" fill="url(#sg)"/></svg>
<div class="t" style="left:1419px;top:315.59px;font-size:11px;color:#ffffff;letter-spacing:-0.279px;">Glass</div>
<svg style="position:absolute;left:1400px;top:371px;overflow:visible;" width="8" height="8" viewBox="0 0 8 8"><circle cx="4" cy="4" r="3" fill="none" stroke="#aaa" stroke-width="0.8"/><path d="M4 2.5V5.5M2.5 4H5.5" stroke="#aaa" stroke-width="0.8"/></svg>
<div style="left:1510px;top:375px;width:16px;height:1px;background:#bbb;"></div>
<div style="left:1510px;top:377.5px;width:16px;height:1px;background:#bbb;"></div>
<div style="left:1635.5px;top:287px;width:19px;height:18.5px;background:#565656;border:1px solid #1f1f1f;border-left-width:1px;border-radius:4px 4px 4px 4px;box-shadow:inset 1px 0 0 rgba(0,0,0,0.25)"></div>
<div style="left:1635.5px;top:287px;width:19px;height:58.5px;background:#565656;border:1px solid #222;border-radius:4px"></div>
<div style="left:1636.5px;top:305px;width:17px;height:1px;background:#2a2a2a;"></div>
<div style="left:1636.5px;top:325px;width:17px;height:1px;background:#2a2a2a;"></div>
<div style="left:1636.5px;top:326px;width:17px;height:18.5px;background:#3f5373;border-radius:0 0 3px 3px"></div>
<svg style="position:absolute;left:1639px;top:290px;overflow:visible;" width="12" height="12" viewBox="0 0 12 12"><path d="M6 1V11M1 6H11" stroke="#eee" stroke-width="2"/></svg>
<div style="left:1640px;top:315px;width:10px;height:2px;background:#eee;"></div>
<svg style="position:absolute;left:1641px;top:331px;overflow:visible;" width="8" height="9" viewBox="0 0 8 9"><path d="M0 1H8L5 8H3Z" fill="#111" stroke="#ddd" stroke-width="0.6"/></svg>
<div style="left:1635.5px;top:353px;width:19px;height:38px;background:#565656;border:1px solid #222;border-radius:4px"></div>
<div style="left:1636.5px;top:372px;width:17px;height:1px;background:#2a2a2a;"></div>
<svg style="position:absolute;left:1640px;top:358px;overflow:visible;" width="10" height="8" viewBox="0 0 10 8"><path d="M5 1L9 6H1Z" fill="#eee"/></svg>
<svg style="position:absolute;left:1640px;top:378px;overflow:visible;" width="10" height="8" viewBox="0 0 10 8"><path d="M5 7L9 2H1Z" fill="#eee"/></svg>
<div style="left:1391px;top:397.5px;width:87.5px;height:19px;background:#585858;border:1px solid #262626;border-left-width:1px;border-radius:4px 0 0 4px;box-shadow:inset 1px 0 0 rgba(0,0,0,0.25)"></div>
<div style="left:1478.5px;top:397.5px;width:86.5px;height:19px;background:#585858;border:1px solid #262626;border-left-width:0px;border-radius:0 0 0 0;box-shadow:inset 1px 0 0 rgba(0,0,0,0.25)"></div>
<div style="left:1565.0px;top:397.5px;width:89px;height:19px;background:#585858;border:1px solid #262626;border-left-width:0px;border-radius:0 4px 4px 0;box-shadow:inset 1px 0 0 rgba(0,0,0,0.25)"></div>
<div class="t" style="left:1391px;top:401.59px;width:87.5px;text-align:center;font-size:11px;color:#d0d0d0;letter-spacing:-0.203px;">Assign</div>
<div class="t" style="left:1478.5px;top:401.59px;width:86.5px;text-align:center;font-size:11px;color:#d0d0d0;letter-spacing:-0.114px;">Select</div>
<div class="t" style="left:1565px;top:401.59px;width:89px;text-align:center;font-size:11px;color:#d0d0d0;letter-spacing:0.029px;">Deselect</div>
<div style="left:1389px;top:395.5px;width:92px;height:27px;border:2px solid #e8202a;"></div>
<div style="left:1391px;top:423px;width:30.5px;height:18.5px;background:#3f5373;border:1px solid #262626;border-left-width:1px;border-radius:4px 0 0 4px;box-shadow:inset 1px 0 0 rgba(0,0,0,0.25)"></div>
<div style="left:1421.5px;top:423px;width:75px;height:18.5px;background:#575757;border:1px solid #262626;border-left-width:0px;border-radius:0 0 0 0;box-shadow:inset 1px 0 0 rgba(0,0,0,0.25)"></div>
<div style="left:1496.5px;top:423px;width:19.5px;height:18.5px;background:#575757;border:1px solid #262626;border-left-width:0px;border-radius:0 0 0 0;box-shadow:inset 1px 0 0 rgba(0,0,0,0.25)"></div>
<div style="left:1516.0px;top:423px;width:20.5px;height:18.5px;background:#575757;border:1px solid #262626;border-left-width:0px;border-radius:0 0 0 0;box-shadow:inset 1px 0 0 rgba(0,0,0,0.25)"></div>
<div style="left:1536.5px;top:423px;width:19.5px;height:18.5px;background:#575757;border:1px solid #262626;border-left-width:0px;border-radius:0 4px 4px 0;box-shadow:inset 1px 0 0 rgba(0,0,0,0.25)"></div>
<svg style="position:absolute;left:1395px;top:425px;overflow:visible;" width="14" height="14" viewBox="0 0 14 14"><circle cx="7" cy="7" r="6.5" fill="#ddd"/><path d="M7 7V0.5A6.5 6.5 0 0 1 13.5 7Z M7 7V13.5A6.5 6.5 0 0 1 0.5 7Z" fill="#c88070"/></svg>
<svg style="position:absolute;left:1411px;top:425px;overflow:visible;" width="8" height="14" viewBox="0 0 8 14"><path d="M4 1L7 5.5H1Z M4 13L7 8.5H1Z" fill="#c8c8c8"/></svg>
<div class="t" style="left:1428px;top:426.59px;font-size:11px;color:#c8c8c8;letter-spacing:-0.279px;">Glass</div>
<div class="t" style="left:1503px;top:426.59px;font-size:11px;color:#c8c8c8;letter-spacing:-0.719px;">F</div>
<svg style="position:absolute;left:1520px;top:426px;overflow:visible;" width="12" height="12" viewBox="0 0 12 12"><path d="M6 1V11M1 6H11" stroke="#eee" stroke-width="2"/></svg>
<svg style="position:absolute;left:1540px;top:426px;overflow:visible;" width="12" height="12" viewBox="0 0 12 12"><path d="M2 2L10 10M10 2L2 10" stroke="#eee" stroke-width="2"/></svg>
<div style="left:1565px;top:423px;width:20px;height:18.5px;background:#575757;border:1px solid #262626;border-radius:4px;"></div>
<svg style="position:absolute;left:1567px;top:425px;overflow:visible;" width="15" height="15" viewBox="0 0 15 15"><rect x="1" y="1" width="7" height="5" fill="#eee" stroke="#222" stroke-width="0.6"/><rect x="1" y="9" width="7" height="5" fill="#eee" stroke="#222" stroke-width="0.6"/><path d="M8 3H12V11H8" stroke="#f0a030" stroke-width="1" fill="none"/></svg>
<div style="left:1594px;top:423px;width:60.5px;height:18.5px;background:#3f5373;border:1px solid #262626;border-radius:4px;"></div>
<div class="t" style="left:1601px;top:426.59px;font-size:11px;color:#e8e8e8;letter-spacing:0.255px;">Data</div>
<svg style="position:absolute;left:1643px;top:425px;overflow:visible;" width="8" height="14" viewBox="0 0 8 14"><path d="M4 1L7 5.5H1Z M4 13L7 8.5H1Z" fill="#c8c8c8"/></svg>
<svg style="position:absolute;left:1397px;top:452px;overflow:visible;" width="8" height="10" viewBox="0 0 8 10"><path d="M1 0L7 5L1 10Z" fill="#eee"/></svg>
<div class="t" style="left:1480px;top:451.59px;width:100px;text-align:center;font-size:11px;color:#c8c8c8;letter-spacing:-0.034px;">- Options -</div>
<div style="left:1382px;top:474.5px;width:281px;height:23.5px;background:#333333;"></div>
<svg style="position:absolute;left:1393px;top:482.5px;overflow:visible;" width="9" height="9" viewBox="0 0 9 9"><path d="M0 1L9 1L4.5 8Z" fill="#9a9a9a"/></svg>
<div class="t" style="left:1407.7px;top:479.94px;font-size:12px;color:#d8d8d8;letter-spacing:0.387px;">Preview</div>
<svg style="position:absolute;left:1641px;top:484.5px;overflow:visible;" width="12" height="7" viewBox="0 0 12 7"><rect x="0" y="0" width="1.3" height="1.3" fill="#6a6a6a"/><rect x="0" y="1.3" width="1.3" height="1.3" fill="#101010"/><rect x="0" y="3" width="1.3" height="1.3" fill="#6a6a6a"/><rect x="0" y="4.3" width="1.3" height="1.3" fill="#101010"/><rect x="3" y="0" width="1.3" height="1.3" fill="#6a6a6a"/><rect x="3" y="1.3" width="1.3" height="1.3" fill="#101010"/><rect x="3" y="3" width="1.3" height="1.3" fill="#6a6a6a"/><rect x="3" y="4.3" width="1.3" height="1.3" fill="#101010"/><rect x="6" y="0" width="1.3" height="1.3" fill="#6a6a6a"/><rect x="6" y="1.3" width="1.3" height="1.3" fill="#101010"/><rect x="6" y="3" width="1.3" height="1.3" fill="#6a6a6a"/><rect x="6" y="4.3" width="1.3" height="1.3" fill="#101010"/><rect x="9" y="0" width="1.3" height="1.3" fill="#6a6a6a"/><rect x="9" y="1.3" width="1.3" height="1.3" fill="#101010"/><rect x="9" y="3" width="1.3" height="1.3" fill="#6a6a6a"/><rect x="9" y="4.3" width="1.3" height="1.3" fill="#101010"/></svg>
<div style="left:1382px;top:498px;width:281px;height:137px;background:#454545;"></div>
<svg style="position:absolute;left:1390.8px;top:507.8px" width="225.1" height="111.2" viewBox="0 0 225.1 111.2"><defs><clipPath id="cp507"><rect x="0" y="0" width="225.1" height="111.2" rx="4"/></clipPath><radialGradient id="bg507" cx="0.42" cy="0.38" r="0.68" fx="0.37" fy="0.3"><stop offset="0" stop-color="#ffffff"/><stop offset="0.07" stop-color="#f2f2f2"/><stop offset="0.22" stop-color="#cdcdcd"/><stop offset="0.6" stop-color="#a6a6a6"/><stop offset="0.88" stop-color="#707070"/><stop offset="1" stop-color="#4a4a4a"/></radialGradient></defs><g clip-path="url(#cp507)"><rect width="225.1" height="111.2" fill="#2e2e2e"/><polygon points="0.00,-53.86 31.76,-39.50 31.76,-16.16 0.00,-26.93" fill="#333333"/><polygon points="0.00,-26.93 31.76,-16.16 31.76,7.18 0.00,0.00" fill="#9c9c9c"/><polygon points="0.00,0.00 31.76,7.18 31.76,30.52 0.00,26.93" fill="#333333"/><polygon points="0.00,26.93 31.76,30.52 31.76,53.86 0.00,53.86" fill="#9c9c9c"/><polygon points="0.00,53.86 31.76,53.86 31.76,77.20 0.00,80.79" fill="#333333"/><polygon points="0.00,80.79 31.76,77.20 31.76,100.54 0.00,107.72" fill="#9c9c9c"/><polygon points="0.00,107.72 31.76,100.54 31.76,123.88 0.00,134.65" fill="#333333"/><polygon points="31.76,-39.50 57.31,-27.95 57.31,-7.50 31.76,-16.16" fill="#9c9c9c"/><polygon points="31.76,-16.16 57.31,-7.50 57.31,12.95 31.76,7.18" fill="#333333"/><polygon points="31.76,7.18 57.31,12.95 57.31,33.41 31.76,30.52" fill="#9c9c9c"/><polygon points="31.76,30.52 57.31,33.41 57.31,53.86 31.76,53.86" fill="#333333"/><polygon points="31.76,53.86 57.31,53.86 57.31,74.31 31.76,77.20" fill="#9c9c9c"/><polygon points="31.76,77.20 57.31,74.31 57.31,94.76 31.76,100.54" fill="#333333"/><polygon points="31.76,100.54 57.31,94.76 57.31,115.22 31.76,123.88" fill="#9c9c9c"/><polygon points="57.31,-27.95 76.64,-19.21 76.64,-0.95 57.31,-7.50" fill="#333333"/><polygon points="57.31,-7.50 76.64,-0.95 76.64,17.32 57.31,12.95" fill="#9c9c9c"/><polygon points="57.31,12.95 76.64,17.32 76.64,35.59 57.31,33.41" fill="#333333"/><polygon points="57.31,33.41 76.64,35.59 76.64,53.86 57.31,53.86" fill="#9c9c9c"/><polygon points="57.31,53.86 76.64,53.86 76.64,72.13 57.31,74.31" fill="#333333"/><polygon points="57.31,74.31 76.64,72.13 76.64,90.39 57.31,94.76" fill="#9c9c9c"/><polygon points="57.31,94.76 76.64,90.39 76.64,108.66 57.31,115.22" fill="#333333"/><polygon points="195.41,-40.44 225.10,-53.86 225.10,-26.93 195.41,-16.86" fill="#9c9c9c"/><polygon points="195.41,-16.86 225.10,-26.93 225.10,0.00 195.41,6.71" fill="#333333"/><polygon points="195.41,6.71 225.10,0.00 225.10,26.93 195.41,30.28" fill="#9c9c9c"/><polygon points="195.41,30.28 225.10,26.93 225.10,53.86 195.41,53.86" fill="#333333"/><polygon points="195.41,53.86 225.10,53.86 225.10,80.79 195.41,77.43" fill="#9c9c9c"/><polygon points="195.41,77.43 225.10,80.79 225.10,107.72 195.41,101.01" fill="#333333"/><polygon points="195.41,101.01 225.10,107.72 225.10,134.65 195.41,124.58" fill="#9c9c9c"/><polygon points="169.86,-28.89 195.41,-40.44 195.41,-16.86 169.86,-8.20" fill="#333333"/><polygon points="169.86,-8.20 195.41,-16.86 195.41,6.71 169.86,12.48" fill="#9c9c9c"/><polygon points="169.86,12.48 195.41,6.71 195.41,30.28 169.86,33.17" fill="#333333"/><polygon points="169.86,33.17 195.41,30.28 195.41,53.86 169.86,53.86" fill="#9c9c9c"/><polygon points="169.86,53.86 195.41,53.86 195.41,77.43 169.86,74.55" fill="#333333"/><polygon points="169.86,74.55 195.41,77.43 195.41,101.01 169.86,95.23" fill="#9c9c9c"/><polygon points="169.86,95.23 195.41,101.01 195.41,124.58 169.86,115.92" fill="#333333"/><polygon points="150.53,-20.15 169.86,-28.89 169.86,-8.20 150.53,-1.65" fill="#9c9c9c"/><polygon points="150.53,-1.65 169.86,-8.20 169.86,12.48 150.53,16.85" fill="#333333"/><polygon points="150.53,16.85 169.86,12.48 169.86,33.17 150.53,35.36" fill="#9c9c9c"/><polygon points="150.53,35.36 169.86,33.17 169.86,53.86 150.53,53.86" fill="#333333"/><polygon points="150.53,53.86 169.86,53.86 169.86,74.55 150.53,72.36" fill="#9c9c9c"/><polygon points="150.53,72.36 169.86,74.55 169.86,95.23 150.53,90.86" fill="#333333"/><polygon points="150.53,90.86 169.86,95.23 169.86,115.92 150.53,109.37" fill="#9c9c9c"/><polygon points="76.64,-19.06 94.60,-19.06 94.60,-0.83 76.64,-0.83" fill="#9c9c9c"/><polygon points="76.64,-0.83 94.60,-0.83 94.60,17.40 76.64,17.40" fill="#333333"/><polygon points="76.64,17.40 94.60,17.40 94.60,35.63 76.64,35.63" fill="#9c9c9c"/><polygon points="76.64,35.63 94.60,35.63 94.60,53.86 76.64,53.86" fill="#333333"/><polygon points="76.64,53.86 94.60,53.86 94.60,72.09 76.64,72.09" fill="#9c9c9c"/><polygon points="76.64,72.09 94.60,72.09 94.60,90.32 76.64,90.32" fill="#333333"/><polygon points="76.64,90.32 94.60,90.32 94.60,108.55 76.64,108.55" fill="#9c9c9c"/><polygon points="94.60,-19.06 112.55,-19.06 112.55,-0.83 94.60,-0.83" fill="#333333"/><polygon points="94.60,-0.83 112.55,-0.83 112.55,17.40 94.60,17.40" fill="#9c9c9c"/><polygon points="94.60,17.40 112.55,17.40 112.55,35.63 94.60,35.63" fill="#333333"/><polygon points="94.60,35.63 112.55,35.63 112.55,53.86 94.60,53.86" fill="#9c9c9c"/><polygon points="94.60,53.86 112.55,53.86 112.55,72.09 94.60,72.09" fill="#333333"/><polygon points="94.60,72.09 112.55,72.09 112.55,90.32 94.60,90.32" fill="#9c9c9c"/><polygon points="94.60,90.32 112.55,90.32 112.55,108.55 94.60,108.55" fill="#333333"/><polygon points="112.55,-19.06 130.50,-19.06 130.50,-0.83 112.55,-0.83" fill="#9c9c9c"/><polygon points="112.55,-0.83 130.50,-0.83 130.50,17.40 112.55,17.40" fill="#333333"/><polygon points="112.55,17.40 130.50,17.40 130.50,35.63 112.55,35.63" fill="#9c9c9c"/><polygon points="112.55,35.63 130.50,35.63 130.50,53.86 112.55,53.86" fill="#333333"/><polygon points="112.55,53.86 130.50,53.86 130.50,72.09 112.55,72.09" fill="#9c9c9c"/><polygon points="112.55,72.09 130.50,72.09 130.50,90.32 112.55,90.32" fill="#333333"/><polygon points="112.55,90.32 130.50,90.32 130.50,108.55 112.55,108.55" fill="#9c9c9c"/><polygon points="130.50,-19.06 150.53,-19.06 150.53,-0.83 130.50,-0.83" fill="#333333"/><polygon points="130.50,-0.83 150.53,-0.83 150.53,17.40 130.50,17.40" fill="#9c9c9c"/><polygon points="130.50,17.40 150.53,17.40 150.53,35.63 130.50,35.63" fill="#333333"/><polygon points="130.50,35.63 150.53,35.63 150.53,53.86 130.50,53.86" fill="#9c9c9c"/><polygon points="130.50,53.86 150.53,53.86 150.53,72.09 130.50,72.09" fill="#333333"/><polygon points="130.50,72.09 150.53,72.09 150.53,90.32 130.50,90.32" fill="#9c9c9c"/><polygon points="130.50,90.32 150.53,90.32 150.53,108.55 130.50,108.55" fill="#333333"/><polygon points="0.00,107.72 76.64,89.07 150.53,89.07 225.10,107.72 225.10,111.86 0.00,111.86" fill="#333333"/><polygon points="30.38,109.79 64.91,99.43 82.86,99.43 74.57,109.79" fill="#8a8a8a"/><polygon points="196.10,109.79 161.57,99.43 143.62,99.43 151.91,109.79" fill="#8a8a8a"/><polygon points="74.57,109.79 93.91,102.19 132.57,102.19 151.91,109.79" fill="#8a8a8a"/><circle cx="112.55" cy="54.13" r="49.99" fill="url(#bg507)"/></g><rect x="0.5" y="0.5" width="224.1" height="110.2" rx="4" fill="none" stroke="#2a2a2a"/></svg>
<div style="left:1496px;top:622.5px;width:15px;height:1px;background:#ccc;"></div>
<div style="left:1496px;top:625px;width:15px;height:1px;background:#ccc;"></div>
<div style="left:1626px;top:508px;width:28.5px;height:118.80000000000001px;background:#565656;border:1px solid #222;border-radius:4px"></div>
<div style="left:1627px;top:527.8px;width:26.5px;height:1px;background:#2f2f2f;"></div>
<div style="left:1627px;top:547.6px;width:26.5px;height:1px;background:#2f2f2f;"></div>
<div style="left:1627px;top:567.4px;width:26.5px;height:1px;background:#2f2f2f;"></div>
<div style="left:1627px;top:587.2px;width:26.5px;height:1px;background:#2f2f2f;"></div>
<div style="left:1627px;top:607.0px;width:26.5px;height:1px;background:#2f2f2f;"></div>
<div style="left:1627px;top:528.8px;width:26.5px;height:18.8px;background:#5680c2;"></div>
<svg style="position:absolute;left:1633px;top:510.9px;overflow:visible;" width="14" height="14" viewBox="0 0 14 14"><rect x="2" y="2" width="10" height="10" fill="#bbb" stroke="#333" stroke-width="0.6"/></svg>
<svg style="position:absolute;left:1633px;top:530.6999999999999px;overflow:visible;" width="14" height="14" viewBox="0 0 14 14"><circle cx="7" cy="7" r="5.5" fill="url(#sg)" stroke="#111" stroke-width="0.8"/></svg>
<svg style="position:absolute;left:1633px;top:550.5px;overflow:visible;" width="14" height="14" viewBox="0 0 14 14"><path d="M7 1L13 4V10L7 13L1 10V4Z" fill="#aaa" stroke="#444" stroke-width="0.6"/></svg>
<svg style="position:absolute;left:1633px;top:570.3px;overflow:visible;" width="14" height="14" viewBox="0 0 14 14"><circle cx="7" cy="5" r="4" fill="#bbb"/><circle cx="3" cy="4" r="2" fill="#bbb"/><circle cx="11" cy="4" r="2" fill="#bbb"/><rect x="5" y="8" width="4" height="5" fill="#bbb"/></svg>
<svg style="position:absolute;left:1633px;top:590.1px;overflow:visible;" width="14" height="14" viewBox="0 0 14 14"><path d="M2 13Q3 6 6 4M6 13Q7 7 10 5M10 13Q11 9 13 8" stroke="#bbb" stroke-width="1.2" fill="none"/></svg>
<svg style="position:absolute;left:1633px;top:609.9px;overflow:visible;" width="14" height="14" viewBox="0 0 14 14"><circle cx="6" cy="9" r="4" fill="#ccc"/><circle cx="10" cy="5" r="3" fill="#8ab"/><circle cx="4" cy="3" r="2" fill="#cc4"/></svg>
<div style="left:1382px;top:635px;width:281px;height:24px;background:#333333;"></div>
<svg style="position:absolute;left:1394px;top:643px;overflow:visible;" width="9" height="9" viewBox="0 0 9 9"><path d="M1 0L8 4.5L1 9Z" fill="#9a9a9a"/></svg>
<div class="t" style="left:1407.7px;top:640.44px;font-size:12px;color:#d8d8d8;letter-spacing:0.161px;">Shading</div>
<svg style="position:absolute;left:1641px;top:645px;overflow:visible;" width="12" height="7" viewBox="0 0 12 7"><rect x="0" y="0" width="1.3" height="1.3" fill="#6a6a6a"/><rect x="0" y="1.3" width="1.3" height="1.3" fill="#101010"/><rect x="0" y="3" width="1.3" height="1.3" fill="#6a6a6a"/><rect x="0" y="4.3" width="1.3" height="1.3" fill="#101010"/><rect x="3" y="0" width="1.3" height="1.3" fill="#6a6a6a"/><rect x="3" y="1.3" width="1.3" height="1.3" fill="#101010"/><rect x="3" y="3" width="1.3" height="1.3" fill="#6a6a6a"/><rect x="3" y="4.3" width="1.3" height="1.3" fill="#101010"/><rect x="6" y="0" width="1.3" height="1.3" fill="#6a6a6a"/><rect x="6" y="1.3" width="1.3" height="1.3" fill="#101010"/><rect x="6" y="3" width="1.3" height="1.3" fill="#6a6a6a"/><rect x="6" y="4.3" width="1.3" height="1.3" fill="#101010"/><rect x="9" y="0" width="1.3" height="1.3" fill="#6a6a6a"/><rect x="9" y="1.3" width="1.3" height="1.3" fill="#101010"/><rect x="9" y="3" width="1.3" height="1.3" fill="#6a6a6a"/><rect x="9" y="4.3" width="1.3" height="1.3" fill="#101010"/></svg>
<div style="left:1382px;top:659px;width:281px;height:24px;background:#333333;"></div>
<svg style="position:absolute;left:1394px;top:667px;overflow:visible;" width="9" height="9" viewBox="0 0 9 9"><path d="M1 0L8 4.5L1 9Z" fill="#9a9a9a"/></svg>
<div style="left:1407.7px;top:664.5px;width:13px;height:13px;background:#3f5373;border:1px solid #222;border-radius:3px;"></div>
<div class="t" style="left:1427.7px;top:664.44px;font-size:12px;color:#d8d8d8;letter-spacing:0.099px;">Transparency</div>
<svg style="position:absolute;left:1641px;top:669px;overflow:visible;" width="12" height="7" viewBox="0 0 12 7"><rect x="0" y="0" width="1.3" height="1.3" fill="#6a6a6a"/><rect x="0" y="1.3" width="1.3" height="1.3" fill="#101010"/><rect x="0" y="3" width="1.3" height="1.3" fill="#6a6a6a"/><rect x="0" y="4.3" width="1.3" height="1.3" fill="#101010"/><rect x="3" y="0" width="1.3" height="1.3" fill="#6a6a6a"/><rect x="3" y="1.3" width="1.3" height="1.3" fill="#101010"/><rect x="3" y="3" width="1.3" height="1.3" fill="#6a6a6a"/><rect x="3" y="4.3" width="1.3" height="1.3" fill="#101010"/><rect x="6" y="0" width="1.3" height="1.3" fill="#6a6a6a"/><rect x="6" y="1.3" width="1.3" height="1.3" fill="#101010"/><rect x="6" y="3" width="1.3" height="1.3" fill="#6a6a6a"/><rect x="6" y="4.3" width="1.3" height="1.3" fill="#101010"/><rect x="9" y="0" width="1.3" height="1.3" fill="#6a6a6a"/><rect x="9" y="1.3" width="1.3" height="1.3" fill="#101010"/><rect x="9" y="3" width="1.3" height="1.3" fill="#6a6a6a"/><rect x="9" y="4.3" width="1.3" height="1.3" fill="#101010"/></svg>
<div style="left:1382px;top:683px;width:281px;height:24px;background:#333333;"></div>
<svg style="position:absolute;left:1394px;top:691px;overflow:visible;" width="9" height="9" viewBox="0 0 9 9"><path d="M1 0L8 4.5L1 9Z" fill="#9a9a9a"/></svg>
<div style="left:1407.7px;top:688.5px;width:13px;height:13px;background:#3f5373;border:1px solid #222;border-radius:3px;"></div>
<div class="t" style="left:1427.7px;top:688.44px;font-size:12px;color:#d8d8d8;letter-spacing:0.136px;">Mirror</div>
<svg style="position:absolute;left:1641px;top:693px;overflow:visible;" width="12" height="7" viewBox="0 0 12 7"><rect x="0" y="0" width="1.3" height="1.3" fill="#6a6a6a"/><rect x="0" y="1.3" width="1.3" height="1.3" fill="#101010"/><rect x="0" y="3" width="1.3" height="1.3" fill="#6a6a6a"/><rect x="0" y="4.3" width="1.3" height="1.3" fill="#101010"/><rect x="3" y="0" width="1.3" height="1.3" fill="#6a6a6a"/><rect x="3" y="1.3" width="1.3" height="1.3" fill="#101010"/><rect x="3" y="3" width="1.3" height="1.3" fill="#6a6a6a"/><rect x="3" y="4.3" width="1.3" height="1.3" fill="#101010"/><rect x="6" y="0" width="1.3" height="1.3" fill="#6a6a6a"/><rect x="6" y="1.3" width="1.3" height="1.3" fill="#101010"/><rect x="6" y="3" width="1.3" height="1.3" fill="#6a6a6a"/><rect x="6" y="4.3" width="1.3" height="1.3" fill="#101010"/><rect x="9" y="0" width="1.3" height="1.3" fill="#6a6a6a"/><rect x="9" y="1.3" width="1.3" height="1.3" fill="#101010"/><rect x="9" y="3" width="1.3" height="1.3" fill="#6a6a6a"/><rect x="9" y="4.3" width="1.3" height="1.3" fill="#101010"/></svg>
<div style="left:1382px;top:707px;width:281px;height:24px;background:#333333;"></div>
<svg style="position:absolute;left:1394px;top:715px;overflow:visible;" width="9" height="9" viewBox="0 0 9 9"><path d="M1 0L8 4.5L1 9Z" fill="#9a9a9a"/></svg>
<div style="left:1407.7px;top:712.5px;width:13px;height:13px;background:#3f5373;border:1px solid #222;border-radius:3px;"></div>
<div class="t" style="left:1427.7px;top:712.44px;font-size:12px;color:#d8d8d8;letter-spacing:0.097px;">Subsurface Scattering</div>
<svg style="position:absolute;left:1641px;top:717px;overflow:visible;" width="12" height="7" viewBox="0 0 12 7"><rect x="0" y="0" width="1.3" height="1.3" fill="#6a6a6a"/><rect x="0" y="1.3" width="1.3" height="1.3" fill="#101010"/><rect x="0" y="3" width="1.3" height="1.3" fill="#6a6a6a"/><rect x="0" y="4.3" width="1.3" height="1.3" fill="#101010"/><rect x="3" y="0" width="1.3" height="1.3" fill="#6a6a6a"/><rect x="3" y="1.3" width="1.3" height="1.3" fill="#101010"/><rect x="3" y="3" width="1.3" height="1.3" fill="#6a6a6a"/><rect x="3" y="4.3" width="1.3" height="1.3" fill="#101010"/><rect x="6" y="0" width="1.3" height="1.3" fill="#6a6a6a"/><rect x="6" y="1.3" width="1.3" height="1.3" fill="#101010"/><rect x="6" y="3" width="1.3" height="1.3" fill="#6a6a6a"/><rect x="6" y="4.3" width="1.3" height="1.3" fill="#101010"/><rect x="9" y="0" width="1.3" height="1.3" fill="#6a6a6a"/><rect x="9" y="1.3" width="1.3" height="1.3" fill="#101010"/><rect x="9" y="3" width="1.3" height="1.3" fill="#6a6a6a"/><rect x="9" y="4.3" width="1.3" height="1.3" fill="#101010"/></svg>
<div style="left:1382px;top:731px;width:281px;height:24px;background:#333333;"></div>
<svg style="position:absolute;left:1394px;top:739px;overflow:visible;" width="9" height="9" viewBox="0 0 9 9"><path d="M1 0L8 4.5L1 9Z" fill="#9a9a9a"/></svg>
<div class="t" style="left:1407.7px;top:736.44px;font-size:12px;color:#d8d8d8;letter-spacing:0.129px;">Strand</div>
<svg style="position:absolute;left:1641px;top:741px;overflow:visible;" width="12" height="7" viewBox="0 0 12 7"><rect x="0" y="0" width="1.3" height="1.3" fill="#6a6a6a"/><rect x="0" y="1.3" width="1.3" height="1.3" fill="#101010"/><rect x="0" y="3" width="1.3" height="1.3" fill="#6a6a6a"/><rect x="0" y="4.3" width="1.3" height="1.3" fill="#101010"/><rect x="3" y="0" width="1.3" height="1.3" fill="#6a6a6a"/><rect x="3" y="1.3" width="1.3" height="1.3" fill="#101010"/><rect x="3" y="3" width="1.3" height="1.3" fill="#6a6a6a"/><rect x="3" y="4.3" width="1.3" height="1.3" fill="#101010"/><rect x="6" y="0" width="1.3" height="1.3" fill="#6a6a6a"/><rect x="6" y="1.3" width="1.3" height="1.3" fill="#101010"/><rect x="6" y="3" width="1.3" height="1.3" fill="#6a6a6a"/><rect x="6" y="4.3" width="1.3" height="1.3" fill="#101010"/><rect x="9" y="0" width="1.3" height="1.3" fill="#6a6a6a"/><rect x="9" y="1.3" width="1.3" height="1.3" fill="#101010"/><rect x="9" y="3" width="1.3" height="1.3" fill="#6a6a6a"/><rect x="9" y="4.3" width="1.3" height="1.3" fill="#101010"/></svg>
<div style="left:1382px;top:755px;width:281px;height:24px;background:#333333;"></div>
<svg style="position:absolute;left:1394px;top:763px;overflow:visible;" width="9" height="9" viewBox="0 0 9 9"><path d="M1 0L8 4.5L1 9Z" fill="#9a9a9a"/></svg>
<div class="t" style="left:1407.7px;top:760.44px;font-size:12px;color:#d8d8d8;letter-spacing:0.274px;">Options</div>
<svg style="position:absolute;left:1641px;top:765px;overflow:visible;" width="12" height="7" viewBox="0 0 12 7"><rect x="0" y="0" width="1.3" height="1.3" fill="#6a6a6a"/><rect x="0" y="1.3" width="1.3" height="1.3" fill="#101010"/><rect x="0" y="3" width="1.3" height="1.3" fill="#6a6a6a"/><rect x="0" y="4.3" width="1.3" height="1.3" fill="#101010"/><rect x="3" y="0" width="1.3" height="1.3" fill="#6a6a6a"/><rect x="3" y="1.3" width="1.3" height="1.3" fill="#101010"/><rect x="3" y="3" width="1.3" height="1.3" fill="#6a6a6a"/><rect x="3" y="4.3" width="1.3" height="1.3" fill="#101010"/><rect x="6" y="0" width="1.3" height="1.3" fill="#6a6a6a"/><rect x="6" y="1.3" width="1.3" height="1.3" fill="#101010"/><rect x="6" y="3" width="1.3" height="1.3" fill="#6a6a6a"/><rect x="6" y="4.3" width="1.3" height="1.3" fill="#101010"/><rect x="9" y="0" width="1.3" height="1.3" fill="#6a6a6a"/><rect x="9" y="1.3" width="1.3" height="1.3" fill="#101010"/><rect x="9" y="3" width="1.3" height="1.3" fill="#6a6a6a"/><rect x="9" y="4.3" width="1.3" height="1.3" fill="#101010"/></svg>
<div style="left:1382px;top:779px;width:281px;height:24px;background:#333333;"></div>
<svg style="position:absolute;left:1394px;top:787px;overflow:visible;" width="9" height="9" viewBox="0 0 9 9"><path d="M1 0L8 4.5L1 9Z" fill="#9a9a9a"/></svg>
<div class="t" style="left:1407.7px;top:784.44px;font-size:12px;color:#d8d8d8;letter-spacing:-0.073px;">Shadow</div>
<svg style="position:absolute;left:1641px;top:789px;overflow:visible;" width="12" height="7" viewBox="0 0 12 7"><rect x="0" y="0" width="1.3" height="1.3" fill="#6a6a6a"/><rect x="0" y="1.3" width="1.3" height="1.3" fill="#101010"/><rect x="0" y="3" width="1.3" height="1.3" fill="#6a6a6a"/><rect x="0" y="4.3" width="1.3" height="1.3" fill="#101010"/><rect x="3" y="0" width="1.3" height="1.3" fill="#6a6a6a"/><rect x="3" y="1.3" width="1.3" height="1.3" fill="#101010"/><rect x="3" y="3" width="1.3" height="1.3" fill="#6a6a6a"/><rect x="3" y="4.3" width="1.3" height="1.3" fill="#101010"/><rect x="6" y="0" width="1.3" height="1.3" fill="#6a6a6a"/><rect x="6" y="1.3" width="1.3" height="1.3" fill="#101010"/><rect x="6" y="3" width="1.3" height="1.3" fill="#6a6a6a"/><rect x="6" y="4.3" width="1.3" height="1.3" fill="#101010"/><rect x="9" y="0" width="1.3" height="1.3" fill="#6a6a6a"/><rect x="9" y="1.3" width="1.3" height="1.3" fill="#101010"/><rect x="9" y="3" width="1.3" height="1.3" fill="#6a6a6a"/><rect x="9" y="4.3" width="1.3" height="1.3" fill="#101010"/></svg>
<div style="left:1382px;top:803px;width:281px;height:24px;background:#333333;"></div>
<svg style="position:absolute;left:1394px;top:811px;overflow:visible;" width="9" height="9" viewBox="0 0 9 9"><path d="M1 0L8 4.5L1 9Z" fill="#9a9a9a"/></svg>
<div class="t" style="left:1407.7px;top:808.44px;font-size:12px;color:#d8d8d8;letter-spacing:0.102px;">Custom Properties</div>
<svg style="position:absolute;left:1641px;top:813px;overflow:visible;" width="12" height="7" viewBox="0 0 12 7"><rect x="0" y="0" width="1.3" height="1.3" fill="#6a6a6a"/><rect x="0" y="1.3" width="1.3" height="1.3" fill="#101010"/><rect x="0" y="3" width="1.3" height="1.3" fill="#6a6a6a"/><rect x="0" y="4.3" width="1.3" height="1.3" fill="#101010"/><rect x="3" y="0" width="1.3" height="1.3" fill="#6a6a6a"/><rect x="3" y="1.3" width="1.3" height="1.3" fill="#101010"/><rect x="3" y="3" width="1.3" height="1.3" fill="#6a6a6a"/><rect x="3" y="4.3" width="1.3" height="1.3" fill="#101010"/><rect x="6" y="0" width="1.3" height="1.3" fill="#6a6a6a"/><rect x="6" y="1.3" width="1.3" height="1.3" fill="#101010"/><rect x="6" y="3" width="1.3" height="1.3" fill="#6a6a6a"/><rect x="6" y="4.3" width="1.3" height="1.3" fill="#101010"/><rect x="9" y="0" width="1.3" height="1.3" fill="#6a6a6a"/><rect x="9" y="1.3" width="1.3" height="1.3" fill="#101010"/><rect x="9" y="3" width="1.3" height="1.3" fill="#6a6a6a"/><rect x="9" y="4.3" width="1.3" height="1.3" fill="#101010"/></svg>
<div style="left:1382px;top:827px;width:281px;height:23px;background:#333333;"></div>
<svg style="position:absolute;left:1393px;top:835px;overflow:visible;" width="9" height="9" viewBox="0 0 9 9"><path d="M0 1L9 1L4.5 8Z" fill="#9a9a9a"/></svg>
<div class="t" style="left:1407.7px;top:832.44px;font-size:12px;color:#d8d8d8;letter-spacing:0.109px;">Material Library VX</div>
<svg style="position:absolute;left:1641px;top:837px;overflow:visible;" width="12" height="7" viewBox="0 0 12 7"><rect x="0" y="0" width="1.3" height="1.3" fill="#6a6a6a"/><rect x="0" y="1.3" width="1.3" height="1.3" fill="#101010"/><rect x="0" y="3" width="1.3" height="1.3" fill="#6a6a6a"/><rect x="0" y="4.3" width="1.3" height="1.3" fill="#101010"/><rect x="3" y="0" width="1.3" height="1.3" fill="#6a6a6a"/><rect x="3" y="1.3" width="1.3" height="1.3" fill="#101010"/><rect x="3" y="3" width="1.3" height="1.3" fill="#6a6a6a"/><rect x="3" y="4.3" width="1.3" height="1.3" fill="#101010"/><rect x="6" y="0" width="1.3" height="1.3" fill="#6a6a6a"/><rect x="6" y="1.3" width="1.3" height="1.3" fill="#101010"/><rect x="6" y="3" width="1.3" height="1.3" fill="#6a6a6a"/><rect x="6" y="4.3" width="1.3" height="1.3" fill="#101010"/><rect x="9" y="0" width="1.3" height="1.3" fill="#6a6a6a"/><rect x="9" y="1.3" width="1.3" height="1.3" fill="#101010"/><rect x="9" y="3" width="1.3" height="1.3" fill="#6a6a6a"/><rect x="9" y="4.3" width="1.3" height="1.3" fill="#101010"/></svg>
<div style="left:1382px;top:850px;width:281px;height:160px;background:#454545;"></div>
<div style="left:1390.5px;top:860px;width:120.5px;height:18.5px;background:#3f5373;border:1px solid #262626;border-left-width:1px;border-radius:4px 0 0 4px;box-shadow:inset 1px 0 0 rgba(0,0,0,0.25)"></div>
<div style="left:1511.0px;top:860px;width:20px;height:18.5px;background:#575757;border:1px solid #262626;border-left-width:0px;border-radius:0 4px 4px 0;box-shadow:inset 1px 0 0 rgba(0,0,0,0.25)"></div>
<div class="t" style="left:1397px;top:863.59px;font-size:11px;color:#e8e8e8;letter-spacing:-0.491px;">Ceramic</div>
<svg style="position:absolute;left:1500px;top:862px;overflow:visible;" width="8" height="14" viewBox="0 0 8 14"><path d="M4 1L7 5.5H1Z M4 13L7 8.5H1Z" fill="#c8c8c8"/></svg>
<svg style="position:absolute;left:1514px;top:863px;overflow:visible;" width="13" height="13" viewBox="0 0 13 13"><path d="M6.5 1V12M1 6.5H12" stroke="#eee" stroke-width="2"/></svg>
<div style="left:1390.5px;top:885px;width:263.5px;height:18.5px;background:#585858;border:1px solid #262626;border-radius:4px;"></div>
<svg style="position:absolute;left:1395px;top:886px;overflow:visible;" width="15" height="15" viewBox="0 0 15 15"><circle cx="9" cy="6" r="4" fill="#ccc" stroke="#333" stroke-width="1"/><path d="M6.5 8.5L2 13" stroke="#e08030" stroke-width="2"/></svg>
<svg style="position:absolute;left:1390.7px;top:909.8px" width="225.9" height="100.2" viewBox="0 0 225.9 100.2"><defs><clipPath id="cp909"><rect x="0" y="0" width="225.9" height="111.6" rx="4"/></clipPath><radialGradient id="bg909" cx="0.42" cy="0.38" r="0.68" fx="0.37" fy="0.3"><stop offset="0" stop-color="#ffffff"/><stop offset="0.07" stop-color="#f2f2f2"/><stop offset="0.22" stop-color="#cdcdcd"/><stop offset="0.6" stop-color="#a6a6a6"/><stop offset="0.88" stop-color="#707070"/><stop offset="1" stop-color="#4a4a4a"/></radialGradient></defs><g clip-path="url(#cp909)"><rect width="225.9" height="111.6" fill="#2e2e2e"/><polygon points="0.00,-54.05 31.88,-39.64 31.88,-16.22 0.00,-27.02" fill="#333333"/><polygon points="0.00,-27.02 31.88,-16.22 31.88,7.20 0.00,0.00" fill="#9c9c9c"/><polygon points="0.00,0.00 31.88,7.20 31.88,30.63 0.00,27.02" fill="#333333"/><polygon points="0.00,27.02 31.88,30.63 31.88,54.05 0.00,54.05" fill="#9c9c9c"/><polygon points="0.00,54.05 31.88,54.05 31.88,77.47 0.00,81.07" fill="#333333"/><polygon points="0.00,81.07 31.88,77.47 31.88,100.90 0.00,108.10" fill="#9c9c9c"/><polygon points="0.00,108.10 31.88,100.90 31.88,124.32 0.00,135.12" fill="#333333"/><polygon points="31.88,-39.64 57.51,-28.05 57.51,-7.53 31.88,-16.22" fill="#9c9c9c"/><polygon points="31.88,-16.22 57.51,-7.53 57.51,13.00 31.88,7.20" fill="#333333"/><polygon points="31.88,7.20 57.51,13.00 57.51,33.52 31.88,30.63" fill="#9c9c9c"/><polygon points="31.88,30.63 57.51,33.52 57.51,54.05 31.88,54.05" fill="#333333"/><polygon points="31.88,54.05 57.51,54.05 57.51,74.58 31.88,77.47" fill="#9c9c9c"/><polygon points="31.88,77.47 57.51,74.58 57.51,95.10 31.88,100.90" fill="#333333"/><polygon points="31.88,100.90 57.51,95.10 57.51,115.63 31.88,124.32" fill="#9c9c9c"/><polygon points="57.51,-28.05 76.92,-19.28 76.92,-0.95 57.51,-7.53" fill="#333333"/><polygon points="57.51,-7.53 76.92,-0.95 76.92,17.38 57.51,13.00" fill="#9c9c9c"/><polygon points="57.51,13.00 76.92,17.38 76.92,35.72 57.51,33.52" fill="#333333"/><polygon points="57.51,33.52 76.92,35.72 76.92,54.05 57.51,54.05" fill="#9c9c9c"/><polygon points="57.51,54.05 76.92,54.05 76.92,72.38 57.51,74.58" fill="#333333"/><polygon points="57.51,74.58 76.92,72.38 76.92,90.72 57.51,95.10" fill="#9c9c9c"/><polygon points="57.51,95.10 76.92,90.72 76.92,109.05 57.51,115.63" fill="#333333"/><polygon points="196.10,-40.58 225.90,-54.05 225.90,-27.02 196.10,-16.92" fill="#9c9c9c"/><polygon points="196.10,-16.92 225.90,-27.02 225.90,0.00 196.10,6.73" fill="#333333"/><polygon points="196.10,6.73 225.90,0.00 225.90,27.02 196.10,30.39" fill="#9c9c9c"/><polygon points="196.10,30.39 225.90,27.02 225.90,54.05 196.10,54.05" fill="#333333"/><polygon points="196.10,54.05 225.90,54.05 225.90,81.07 196.10,77.71" fill="#9c9c9c"/><polygon points="196.10,77.71 225.90,81.07 225.90,108.10 196.10,101.37" fill="#333333"/><polygon points="196.10,101.37 225.90,108.10 225.90,135.12 196.10,125.02" fill="#9c9c9c"/><polygon points="170.46,-28.99 196.10,-40.58 196.10,-16.92 170.46,-8.23" fill="#333333"/><polygon points="170.46,-8.23 196.10,-16.92 196.10,6.73 170.46,12.53" fill="#9c9c9c"/><polygon points="170.46,12.53 196.10,6.73 196.10,30.39 170.46,33.29" fill="#333333"/><polygon points="170.46,33.29 196.10,30.39 196.10,54.05 170.46,54.05" fill="#9c9c9c"/><polygon points="170.46,54.05 196.10,54.05 196.10,77.71 170.46,74.81" fill="#333333"/><polygon points="170.46,74.81 196.10,77.71 196.10,101.37 170.46,95.57" fill="#9c9c9c"/><polygon points="170.46,95.57 196.10,101.37 196.10,125.02 170.46,116.33" fill="#333333"/><polygon points="151.06,-20.22 170.46,-28.99 170.46,-8.23 151.06,-1.65" fill="#9c9c9c"/><polygon points="151.06,-1.65 170.46,-8.23 170.46,12.53 151.06,16.91" fill="#333333"/><polygon points="151.06,16.91 170.46,12.53 170.46,33.29 151.06,35.48" fill="#9c9c9c"/><polygon points="151.06,35.48 170.46,33.29 170.46,54.05 151.06,54.05" fill="#333333"/><polygon points="151.06,54.05 170.46,54.05 170.46,74.81 151.06,72.62" fill="#9c9c9c"/><polygon points="151.06,72.62 170.46,74.81 170.46,95.57 151.06,91.19" fill="#333333"/><polygon points="151.06,91.19 170.46,95.57 170.46,116.33 151.06,109.75" fill="#9c9c9c"/><polygon points="76.92,-19.13 94.93,-19.13 94.93,-0.83 76.92,-0.83" fill="#9c9c9c"/><polygon points="76.92,-0.83 94.93,-0.83 94.93,17.46 76.92,17.46" fill="#333333"/><polygon points="76.92,17.46 94.93,17.46 94.93,35.76 76.92,35.76" fill="#9c9c9c"/><polygon points="76.92,35.76 94.93,35.76 94.93,54.05 76.92,54.05" fill="#333333"/><polygon points="76.92,54.05 94.93,54.05 94.93,72.34 76.92,72.34" fill="#9c9c9c"/><polygon points="76.92,72.34 94.93,72.34 94.93,90.64 76.92,90.64" fill="#333333"/><polygon points="76.92,90.64 94.93,90.64 94.93,108.93 76.92,108.93" fill="#9c9c9c"/><polygon points="94.93,-19.13 112.95,-19.13 112.95,-0.83 94.93,-0.83" fill="#333333"/><polygon points="94.93,-0.83 112.95,-0.83 112.95,17.46 94.93,17.46" fill="#9c9c9c"/><polygon points="94.93,17.46 112.95,17.46 112.95,35.76 94.93,35.76" fill="#333333"/><polygon points="94.93,35.76 112.95,35.76 112.95,54.05 94.93,54.05" fill="#9c9c9c"/><polygon points="94.93,54.05 112.95,54.05 112.95,72.34 94.93,72.34" fill="#333333"/><polygon points="94.93,72.34 112.95,72.34 112.95,90.64 94.93,90.64" fill="#9c9c9c"/><polygon points="94.93,90.64 112.95,90.64 112.95,108.93 94.93,108.93" fill="#333333"/><polygon points="112.95,-19.13 130.97,-19.13 130.97,-0.83 112.95,-0.83" fill="#9c9c9c"/><polygon points="112.95,-0.83 130.97,-0.83 130.97,17.46 112.95,17.46" fill="#333333"/><polygon points="112.95,17.46 130.97,17.46 130.97,35.76 112.95,35.76" fill="#9c9c9c"/><polygon points="112.95,35.76 130.97,35.76 130.97,54.05 112.95,54.05" fill="#333333"/><polygon points="112.95,54.05 130.97,54.05 130.97,72.34 112.95,72.34" fill="#9c9c9c"/><polygon points="112.95,72.34 130.97,72.34 130.97,90.64 112.95,90.64" fill="#333333"/><polygon points="112.95,90.64 130.97,90.64 130.97,108.93 112.95,108.93" fill="#9c9c9c"/><polygon points="130.97,-19.13 151.06,-19.13 151.06,-0.83 130.97,-0.83" fill="#333333"/><polygon points="130.97,-0.83 151.06,-0.83 151.06,17.46 130.97,17.46" fill="#9c9c9c"/><polygon points="130.97,17.46 151.06,17.46 151.06,35.76 130.97,35.76" fill="#333333"/><polygon points="130.97,35.76 151.06,35.76 151.06,54.05 130.97,54.05" fill="#9c9c9c"/><polygon points="130.97,54.05 151.06,54.05 151.06,72.34 130.97,72.34" fill="#333333"/><polygon points="130.97,72.34 151.06,72.34 151.06,90.64 130.97,90.64" fill="#9c9c9c"/><polygon points="130.97,90.64 151.06,90.64 151.06,108.93 130.97,108.93" fill="#333333"/><polygon points="0.00,108.10 76.92,89.39 151.06,89.39 225.90,108.10 225.90,112.26 0.00,112.26" fill="#333333"/><polygon points="30.49,110.18 65.14,99.78 83.15,99.78 74.84,110.18" fill="#8a8a8a"/><polygon points="196.80,110.18 162.15,99.78 144.13,99.78 152.45,110.18" fill="#8a8a8a"/><polygon points="74.84,110.18 94.24,102.56 133.05,102.56 152.45,110.18" fill="#8a8a8a"/><circle cx="112.95" cy="54.33" r="50.17" fill="url(#bg909)"/></g><rect x="0.5" y="0.5" width="224.9" height="110.6" rx="4" fill="none" stroke="#2a2a2a"/></svg>
<div style="left:1626px;top:910px;width:28.5px;height:118.80000000000001px;background:#565656;border:1px solid #222;border-radius:4px"></div>
<div style="left:1627px;top:929.8px;width:26.5px;height:1px;background:#2f2f2f;"></div>
<div style="left:1627px;top:949.6px;width:26.5px;height:1px;background:#2f2f2f;"></div>
<div style="left:1627px;top:969.4px;width:26.5px;height:1px;background:#2f2f2f;"></div>
<div style="left:1627px;top:989.2px;width:26.5px;height:1px;background:#2f2f2f;"></div>
<div style="left:1627px;top:1009.0px;width:26.5px;height:1px;background:#2f2f2f;"></div>
<div style="left:1627px;top:930.8px;width:26.5px;height:18.8px;background:#5680c2;"></div>
<svg style="position:absolute;left:1633px;top:912.9px;overflow:visible;" width="14" height="14" viewBox="0 0 14 14"><rect x="2" y="2" width="10" height="10" fill="#bbb" stroke="#333" stroke-width="0.6"/></svg>
<svg style="position:absolute;left:1633px;top:932.6999999999999px;overflow:visible;" width="14" height="14" viewBox="0 0 14 14"><circle cx="7" cy="7" r="5.5" fill="url(#sg)" stroke="#111" stroke-width="0.8"/></svg>
<svg style="position:absolute;left:1633px;top:952.5px;overflow:visible;" width="14" height="14" viewBox="0 0 14 14"><path d="M7 1L13 4V10L7 13L1 10V4Z" fill="#aaa" stroke="#444" stroke-width="0.6"/></svg>
<svg style="position:absolute;left:1633px;top:972.3px;overflow:visible;" width="14" height="14" viewBox="0 0 14 14"><circle cx="7" cy="5" r="4" fill="#bbb"/><circle cx="3" cy="4" r="2" fill="#bbb"/><circle cx="11" cy="4" r="2" fill="#bbb"/><rect x="5" y="8" width="4" height="5" fill="#bbb"/></svg>
<svg style="position:absolute;left:1633px;top:992.1px;overflow:visible;" width="14" height="14" viewBox="0 0 14 14"><path d="M2 13Q3 6 6 4M6 13Q7 7 10 5M10 13Q11 9 13 8" stroke="#bbb" stroke-width="1.2" fill="none"/></svg>
<svg style="position:absolute;left:1633px;top:1011.9px;overflow:visible;" width="14" height="14" viewBox="0 0 14 14"><circle cx="6" cy="9" r="4" fill="#ccc"/><circle cx="10" cy="5" r="3" fill="#8ab"/><circle cx="4" cy="3" r="2" fill="#cc4"/></svg>
<div style="left:0px;top:957px;width:1381px;height:26px;background:#282828;"></div>
<div style="left:0px;top:983px;width:1381px;height:1px;background:#070707;"></div>
<svg style="position:absolute;left:0px;top:969px;overflow:visible;" width="14" height="14" viewBox="0 0 14 14"><path d="M0 10 L4 14" stroke="#707070" stroke-width="1"/><path d="M0 6 L8 14" stroke="#707070" stroke-width="1"/><path d="M0 2 L12 14" stroke="#707070" stroke-width="1"/></svg>
<div class="t" style="left:16px;top:964.59px;font-size:11px;color:#d0d0d0;letter-spacing:0.286px;">View</div>
<div class="t" style="left:61.7px;top:964.59px;font-size:11px;color:#d0d0d0;letter-spacing:-0.335px;">Navi</div>
<div class="t" style="left:104px;top:964.59px;font-size:11px;color:#d0d0d0;letter-spacing:0.086px;">Select</div>
<div class="t" style="left:155.5px;top:964.59px;font-size:11px;color:#d0d0d0;letter-spacing:-0.299px;">Mesh</div>
<div style="left:195.3px;top:961px;width:96.5px;height:18px;background:#3f5373;border:1px solid #1f1f1f;border-radius:4px;"></div>
<svg style="position:absolute;left:199px;top:962px" width="15" height="15" viewBox="0 0 16 16"><rect x="3" y="3" width="10" height="10" fill="#999"/><circle cx="3" cy="3" r="2" fill="#111" stroke="#f08a20" stroke-width="1"/><circle cx="13" cy="3" r="2" fill="#111" stroke="#f08a20"/><circle cx="3" cy="13" r="2" fill="#111" stroke="#f08a20"/><circle cx="10" cy="14" r="2" fill="#111" stroke="#f08a20"/></svg>
<div class="t" style="left:218px;top:964.59px;font-size:11px;color:#ececec;letter-spacing:-0.066px;">Edit Mode</div>
<svg style="position:absolute;left:281px;top:963px;overflow:visible;" width="8" height="14" viewBox="0 0 8 14"><path d="M4 1L7 5.5H1Z M4 13L7 8.5H1Z" fill="#c8c8c8"/></svg>
<div style="left:299px;top:961px;width:29.5px;height:18px;background:#3f5373;border:1px solid #1f1f1f;border-radius:4px;"></div>
<svg style="position:absolute;left:302px;top:962px" width="14" height="14" viewBox="0 0 16 16"><circle cx="8" cy="8" r="6.5" fill="#f0f0f0" stroke="#111" stroke-width="0.8"/></svg>
<svg style="position:absolute;left:318px;top:963px;overflow:visible;" width="8" height="14" viewBox="0 0 8 14"><path d="M4 1L7 5.5H1Z M4 13L7 8.5H1Z" fill="#c8c8c8"/></svg>
<div style="left:336px;top:961px;width:30px;height:18px;background:#3f5373;border:1px solid #1f1f1f;border-radius:4px;"></div>
<svg style="position:absolute;left:338px;top:962px" width="15" height="15" viewBox="0 0 16 16"><circle cx="6" cy="6" r="4.5" fill="#eee" stroke="#222" stroke-width="0.6"/><circle cx="10" cy="11" r="4.5" fill="#eee" stroke="#222" stroke-width="0.6"/><rect x="6" y="7" width="4" height="4" fill="#2a7ad0"/></svg>
<svg style="position:absolute;left:356px;top:963px;overflow:visible;" width="8" height="14" viewBox="0 0 8 14"><path d="M4 1L7 5.5H1Z M4 13L7 8.5H1Z" fill="#c8c8c8"/></svg>
<div style="left:373px;top:961px;width:19.5px;height:18px;background:#5680c2;border:1px solid #1f1f1f;border-left-width:1px;border-radius:4px 0 0 4px;box-shadow:inset 1px 0 0 rgba(0,0,0,0.25)"></div>
<div style="left:392.5px;top:961px;width:19.5px;height:18px;background:#5680c2;border:1px solid #1f1f1f;border-left-width:0px;border-radius:0 0 0 0;box-shadow:inset 1px 0 0 rgba(0,0,0,0.25)"></div>
<div style="left:412.0px;top:961px;width:19.5px;height:18px;background:#4f4f4f;border:1px solid #1f1f1f;border-left-width:0px;border-radius:0 0 0 0;box-shadow:inset 1px 0 0 rgba(0,0,0,0.25)"></div>
<div style="left:431.5px;top:961px;width:19.5px;height:18px;background:#4f4f4f;border:1px solid #1f1f1f;border-left-width:0px;border-radius:0 0 0 0;box-shadow:inset 1px 0 0 rgba(0,0,0,0.25)"></div>
<div style="left:451.0px;top:961px;width:71.5px;height:18px;background:#3f5373;border:1px solid #1f1f1f;border-left-width:0px;border-radius:0 4px 4px 0;box-shadow:inset 1px 0 0 rgba(0,0,0,0.25)"></div>
<svg style="position:absolute;left:375px;top:962px" width="15" height="15" viewBox="0 0 16 16"><path d="M8 9V1" stroke="#4060e0" stroke-width="1.6"/><path d="M8 9L2 14" stroke="#e03030" stroke-width="1.6"/><path d="M8 9L14 14" stroke="#30c030" stroke-width="1.6"/></svg>
<svg style="position:absolute;left:394.5px;top:962px" width="15" height="15" viewBox="0 0 16 16"><path d="M2 14L13 3" stroke="#9ad" stroke-width="2"/><path d="M14 2L7 4L12 9Z" fill="#9ad"/></svg>
<svg style="position:absolute;left:414px;top:962px" width="15" height="15" viewBox="0 0 16 16"><path d="M2 15Q3 4 14 3" stroke="#5a7ab0" stroke-width="2" fill="none"/></svg>
<svg style="position:absolute;left:433.5px;top:962px" width="15" height="15" viewBox="0 0 16 16"><path d="M2 14L10 6" stroke="#5a7ab0" stroke-width="2"/><rect x="9" y="2" width="5" height="5" fill="#5a7ab0"/></svg>
<div class="t" style="left:459px;top:964.59px;font-size:11px;color:#ececec;letter-spacing:-0.359px;">Global</div>
<svg style="position:absolute;left:513px;top:963px;overflow:visible;" width="8" height="14" viewBox="0 0 8 14"><path d="M4 1L7 5.5H1Z M4 13L7 8.5H1Z" fill="#c8c8c8"/></svg>
<div style="left:530px;top:961px;width:19px;height:18px;background:#5680c2;border:1px solid #1f1f1f;border-left-width:1px;border-radius:4px 0 0 4px;box-shadow:inset 1px 0 0 rgba(0,0,0,0.25)"></div>
<div style="left:549px;top:961px;width:19px;height:18px;background:#4f4f4f;border:1px solid #1f1f1f;border-left-width:0px;border-radius:0 0 0 0;box-shadow:inset 1px 0 0 rgba(0,0,0,0.25)"></div>
<div style="left:568px;top:961px;width:19.5px;height:18px;background:#4f4f4f;border:1px solid #1f1f1f;border-left-width:0px;border-radius:0 4px 4px 0;box-shadow:inset 1px 0 0 rgba(0,0,0,0.25)"></div>
<svg style="position:absolute;left:532px;top:962px" width="15" height="15" viewBox="0 0 16 16"><path d="M8 2L14 5V12L8 15L2 12V5Z" fill="#a8c0e0" stroke="#334" stroke-width="0.6"/><circle cx="3" cy="3" r="1.5" fill="#f08a20"/></svg>
<svg style="position:absolute;left:551px;top:962px" width="15" height="15" viewBox="0 0 16 16"><path d="M8 2L14 5V12L8 15L2 12V5Z" fill="#777" stroke="#333" stroke-width="0.6"/><rect x="1" y="5" width="3" height="8" fill="#c89860"/></svg>
<svg style="position:absolute;left:570px;top:962px" width="15" height="15" viewBox="0 0 16 16"><path d="M8 2L14 5V12L8 15L2 12V5Z" fill="#777" stroke="#333" stroke-width="0.6"/><path d="M2 5L8 8V15L2 12Z" fill="#c89860"/></svg>
<div style="left:595px;top:961px;width:18px;height:18px;background:#5680c2;border:1px solid #1f1f1f;border-left-width:1px;border-radius:4px 4px 4px 4px;box-shadow:inset 1px 0 0 rgba(0,0,0,0.25)"></div>
<svg style="position:absolute;left:596.5px;top:962.5px" width="15" height="15" viewBox="0 0 16 16"><rect x="3" y="3" width="10" height="10" fill="#e8e8e8" stroke="#111" stroke-width="1"/><circle cx="3" cy="3" r="1.8" fill="#fff" stroke="#111"/><circle cx="13" cy="3" r="1.8" fill="#fff" stroke="#111"/><circle cx="3" cy="13" r="1.8" fill="#fff" stroke="#111"/><circle cx="13" cy="13" r="1.8" fill="#fff" stroke="#111"/><circle cx="8" cy="1.5" r="1.2" fill="#fff" stroke="#111"/></svg>
<div style="left:620.5px;top:961px;width:29.5px;height:18px;background:#3f5373;border:1px solid #1f1f1f;border-radius:4px;"></div>
<svg style="position:absolute;left:623px;top:962px" width="15" height="15" viewBox="0 0 16 16"><circle cx="8" cy="8" r="5.5" fill="#777" stroke="#555" stroke-width="1"/><circle cx="8" cy="8" r="3" fill="#6a6a6a"/></svg>
<svg style="position:absolute;left:640px;top:963px;overflow:visible;" width="8" height="14" viewBox="0 0 8 14"><path d="M4 1L7 5.5H1Z M4 13L7 8.5H1Z" fill="#c8c8c8"/></svg>
<div style="left:657px;top:961px;width:19.5px;height:18px;background:#4f4f4f;border:1px solid #1f1f1f;border-left-width:1px;border-radius:4px 0 0 4px;box-shadow:inset 1px 0 0 rgba(0,0,0,0.25)"></div>
<div style="left:676.5px;top:961px;width:31.5px;height:18px;background:#3f5373;border:1px solid #1f1f1f;border-left-width:0px;border-radius:0 0 0 0;box-shadow:inset 1px 0 0 rgba(0,0,0,0.25)"></div>
<div style="left:708.0px;top:961px;width:19.5px;height:18px;background:#4f4f4f;border:1px solid #1f1f1f;border-left-width:0px;border-radius:0 4px 4px 0;box-shadow:inset 1px 0 0 rgba(0,0,0,0.25)"></div>
<svg style="position:absolute;left:659px;top:962px" width="15" height="15" viewBox="0 0 16 16"><path d="M3 14V7Q3 2 8 2Q13 2 13 7V9" stroke="#999" stroke-width="2.5" fill="none"/></svg>
<svg style="position:absolute;left:678px;top:962px" width="15" height="15" viewBox="0 0 16 16"><path d="M2 8H14" stroke="#ddd" stroke-width="1"/><path d="M3 4V12M13 4V12M5 5V11M11 5V11" stroke="#ccc" stroke-width="1"/><rect x="7" y="2" width="2.5" height="12" fill="#3af"/></svg>
<svg style="position:absolute;left:698px;top:963px;overflow:visible;" width="8" height="14" viewBox="0 0 8 14"><path d="M4 1L7 5.5H1Z M4 13L7 8.5H1Z" fill="#c8c8c8"/></svg>
<svg style="position:absolute;left:710px;top:962px" width="15" height="15" viewBox="0 0 16 16"><path d="M6 3V15M11 3V15M2 7H15M2 12H15" stroke="#ddd" stroke-width="1"/><circle cx="4" cy="4" r="2.5" fill="#2a7ad0" stroke="#fff" stroke-width="0.8"/></svg>
<div style="left:734px;top:961px;width:18.5px;height:18px;background:#4f4f4f;border:1px solid #1f1f1f;border-left-width:1px;border-radius:4px 4px 4px 4px;box-shadow:inset 1px 0 0 rgba(0,0,0,0.25)"></div>
<svg style="position:absolute;left:735.75px;top:962.5px" width="15" height="15" viewBox="0 0 16 16"><path d="M2 14L7 9M14 2L9 7" stroke="#ddd" stroke-width="1.5"/><path d="M7 9V5M7 9H11M9 7V11M9 7H5" stroke="#ddd" stroke-width="1"/><circle cx="3" cy="13" r="1.5" fill="#f08a20"/><circle cx="13" cy="3" r="1.5" fill="#f08a20"/></svg>
<div style="left:759px;top:961px;width:18px;height:18px;background:#4f4f4f;border:1px solid #1f1f1f;border-left-width:1px;border-radius:4px 4px 4px 4px;box-shadow:inset 1px 0 0 rgba(0,0,0,0.25)"></div>
<svg style="position:absolute;left:760.5px;top:962.5px" width="15" height="15" viewBox="0 0 16 16"><path d="M8 3L15 8L8 13L1 8Z" fill="none" stroke="#e02020" stroke-width="1.2"/><path d="M1 8L15 8M8 3L8 13" stroke="#20c020" stroke-width="1.2"/><path d="M4 5L12 11M12 5L4 11" stroke="#20a0c0" stroke-width="0.8"/></svg>
<div style="left:789px;top:961px;width:19.45px;height:18px;background:#4f4f4f;border:1px solid #1f1f1f;border-left-width:1px;border-radius:4px 0 0 4px;box-shadow:inset 1px 0 0 rgba(0,0,0,0.25)"></div>
<div style="left:808.45px;top:961px;width:19.45px;height:18px;background:#4f4f4f;border:1px solid #1f1f1f;border-left-width:0px;border-radius:0 0 0 0;box-shadow:inset 1px 0 0 rgba(0,0,0,0.25)"></div>
<div style="left:827.9000000000001px;top:961px;width:19.45px;height:18px;background:#4f4f4f;border:1px solid #1f1f1f;border-left-width:0px;border-radius:0 0 0 0;box-shadow:inset 1px 0 0 rgba(0,0,0,0.25)"></div>
<div style="left:847.3500000000001px;top:961px;width:19.45px;height:18px;background:#4f4f4f;border:1px solid #1f1f1f;border-left-width:0px;border-radius:0 0 0 0;box-shadow:inset 1px 0 0 rgba(0,0,0,0.25)"></div>
<div style="left:866.8000000000002px;top:961px;width:19.45px;height:18px;background:#d07010;border:1px solid #1f1f1f;border-left-width:0px;border-radius:0 0 0 0;box-shadow:inset 1px 0 0 rgba(0,0,0,0.25)"></div>
<div style="left:886.2500000000002px;top:961px;width:19.45px;height:18px;background:#9ef09e;border:1px solid #1f1f1f;border-left-width:0px;border-radius:0 4px 4px 0;box-shadow:inset 1px 0 0 rgba(0,0,0,0.25)"></div>
<svg style="position:absolute;left:791.225px;top:962.5px" width="15" height="15" viewBox="0 0 16 16"><path d="M1 8L8 2L15 8H13V15H3V8Z" fill="#e0e0e0"/><path d="M1 8L8 2L15 8" stroke="#c06010" stroke-width="2" fill="none"/><rect x="6" y="9" width="4" height="6" fill="#c06010"/></svg>
<svg style="position:absolute;left:810.6750000000001px;top:962.5px" width="15" height="15" viewBox="0 0 16 16"><path d="M1 8L8 2L15 8H13V15H3V8Z" fill="#e0e0e0"/><path d="M1 8L8 2L15 8" stroke="#c06010" stroke-width="2" fill="none"/></svg>
<svg style="position:absolute;left:830.1250000000001px;top:962.5px" width="15" height="15" viewBox="0 0 16 16"><rect x="2" y="2" width="12" height="13" fill="#e0e0e0"/><rect x="2" y="2" width="12" height="5" fill="#c06010"/><rect x="7" y="2" width="2" height="6" fill="#fff"/></svg>
<svg style="position:absolute;left:849.5750000000002px;top:962.5px" width="15" height="15" viewBox="0 0 16 16"><rect x="2" y="4" width="12" height="11" fill="#e0e0e0"/><path d="M1 6L8 1L15 6Z" fill="#c06010"/><rect x="2" y="4" width="12" height="3" fill="#c06010"/><rect x="6" y="9" width="5" height="4" fill="#c06010"/></svg>
<svg style="position:absolute;left:869.0250000000002px;top:962.5px" width="15" height="15" viewBox="0 0 16 16"><rect x="1" y="1" width="14" height="14" fill="#c06010"/><rect x="3" y="2" width="10" height="13" fill="#d07010" stroke="#2a1a00" stroke-width="0.6"/><circle cx="11" cy="9" r="1" fill="#111"/></svg>
<svg style="position:absolute;left:888.4750000000003px;top:962.5px" width="15" height="15" viewBox="0 0 16 16"><rect x="1" y="1" width="14" height="14" fill="#9ef09e"/><rect x="3" y="3" width="10" height="10" fill="#9ef09e" stroke="#224" stroke-width="0.8"/></svg>
<div style="left:914px;top:961px;width:18px;height:18px;background:#4f4f4f;border:1px solid #1f1f1f;border-left-width:1px;border-radius:4px 4px 4px 4px;box-shadow:inset 1px 0 0 rgba(0,0,0,0.25)"></div>
<svg style="position:absolute;left:915.5px;top:962.5px" width="15" height="15" viewBox="0 0 16 16"><rect x="2" y="4" width="12" height="8" fill="#d8d8d8"/><path d="M1 8H15" stroke="#e02020" stroke-width="1"/><path d="M8 2V14" stroke="#20c020" stroke-width="1"/></svg>
<svg style="position:absolute;left:940px;top:962px" width="16" height="16" viewBox="0 0 16 16"><rect x="1" y="1" width="14" height="14" fill="#222"/><path d="M3 6L8 2L13 6V13H3Z" fill="#f0f0f0"/><path d="M3 6L8 2L13 6" fill="#c06010"/><ellipse cx="8" cy="13" rx="6" ry="2" fill="#5ad05a"/></svg>
<div style="left:965px;top:961px;width:17px;height:18px;background:#3f3f3f;border:1px solid #1f1f1f;border-left-width:1px;border-radius:4px 4px 4px 4px;box-shadow:inset 1px 0 0 rgba(0,0,0,0.25)"></div>
<svg style="position:absolute;left:966.5px;top:963.0px" width="14" height="14" viewBox="0 0 16 16"><rect x="1" y="4" width="14" height="10" fill="#555" stroke="#777" stroke-width="0.6"/><circle cx="8" cy="9" r="3" fill="#4a6a8a"/></svg>
<div style="left:0px;top:984px;width:1381px;height:26px;background:#282828;"></div>
<div style="left:0px;top:984px;width:1381px;height:1px;background:#3e3e3e;"></div>
<svg style="position:absolute;left:0px;top:996px;overflow:visible;" width="14" height="14" viewBox="0 0 14 14"><path d="M0 10 L4 14" stroke="#707070" stroke-width="1"/><path d="M0 6 L8 14" stroke="#707070" stroke-width="1"/><path d="M0 2 L12 14" stroke="#707070" stroke-width="1"/></svg>
<svg style="position:absolute;left:1366px;top:984px;overflow:visible;" width="14" height="14" viewBox="0 0 14 14"><path d="M10 0 L14 4" stroke="#707070" stroke-width="1"/><path d="M6 0 L14 8" stroke="#707070" stroke-width="1"/><path d="M2 0 L14 12" stroke="#707070" stroke-width="1"/></svg>
<div style="left:10.5px;top:988.5px;width:19px;height:17.5px;background:#1010d0;border:1px solid #1f1f1f;border-left-width:1px;border-radius:4px 0 0 4px;box-shadow:inset 1px 0 0 rgba(0,0,0,0.25)"></div>
<div style="left:29.5px;top:988.5px;width:19.5px;height:17.5px;background:#4f4f4f;border:1px solid #1f1f1f;border-left-width:0px;border-radius:0 0 0 0;box-shadow:inset 1px 0 0 rgba(0,0,0,0.25)"></div>
<div style="left:49.0px;top:988.5px;width:19.5px;height:17.5px;background:#4f4f4f;border:1px solid #1f1f1f;border-left-width:0px;border-radius:0 0 0 0;box-shadow:inset 1px 0 0 rgba(0,0,0,0.25)"></div>
<div style="left:68.5px;top:988.5px;width:19.5px;height:17.5px;background:#4f4f4f;border:1px solid #1f1f1f;border-left-width:0px;border-radius:0 4px 4px 0;box-shadow:inset 1px 0 0 rgba(0,0,0,0.25)"></div>
<svg style="position:absolute;left:12.5px;top:989.5px" width="15" height="15" viewBox="0 0 16 16"><circle cx="8" cy="8" r="6.5" fill="#e8e8e8" stroke="#111" stroke-width="1"/><path d="M8 8L11 4M8 8L6 11" stroke="#c03030" stroke-width="1"/></svg>
<svg style="position:absolute;left:32px;top:989.5px" width="15" height="15" viewBox="0 0 16 16"><path d="M1 4Q5 4 7 8Q9 12 15 12" stroke="#8c8" stroke-width="1.5" fill="none"/><path d="M1 8H8Q10 8 11 4H15" stroke="#eee" stroke-width="1.2" fill="none"/></svg>
<svg style="position:absolute;left:51.5px;top:989.5px" width="15" height="15" viewBox="0 0 16 16"><path d="M4 3L7 6L4 9L1 6Z" fill="#ddd" stroke="#222" stroke-width="0.6"/><path d="M12 3L15 6L12 9L9 6Z" fill="#f0a040" stroke="#222" stroke-width="0.6"/><rect x="6" y="4.5" width="4" height="3" fill="#b89070"/><path d="M8 10L10 12L8 14L6 12Z" fill="#ddd" stroke="#222" stroke-width="0.6"/></svg>
<svg style="position:absolute;left:71px;top:989.5px" width="15" height="15" viewBox="0 0 16 16"><path d="M3 2H9M5 5H14M2 10H10M6 13H13" stroke="#eee" stroke-width="2.2" stroke-linecap="round"/></svg>
<div class="t" style="left:101px;top:991.59px;font-size:11px;color:#d0d0d0;letter-spacing:0.286px;">View</div>
<div class="t" style="left:146px;top:991.59px;font-size:11px;color:#d0d0d0;letter-spacing:0.356px;">Marker</div>
<div class="t" style="left:201.4px;top:991.59px;font-size:11px;color:#d0d0d0;letter-spacing:0.056px;">Frame</div>
<div class="t" style="left:253.4px;top:991.59px;font-size:11px;color:#d0d0d0;letter-spacing:-0.090px;">Playback</div>
<div style="left:311px;top:988.5px;width:19px;height:18px;background:#4f4f4f;border:1px solid #1f1f1f;border-left-width:1px;border-radius:4px 0 0 4px;box-shadow:inset 1px 0 0 rgba(0,0,0,0.25)"></div>
<div style="left:330px;top:988.5px;width:19px;height:18px;background:#4f4f4f;border:1px solid #1f1f1f;border-left-width:0px;border-radius:0 4px 4px 0;box-shadow:inset 1px 0 0 rgba(0,0,0,0.25)"></div>
<svg style="position:absolute;left:313px;top:990px" width="15" height="15" viewBox="0 0 16 16"><circle cx="8" cy="8" r="6.5" fill="#eee" stroke="#333" stroke-width="0.6"/><path d="M8 8V1.5A6.5 6.5 0 0 1 14.5 8Z" fill="#f09020"/></svg>
<svg style="position:absolute;left:332px;top:990px" width="15" height="15" viewBox="0 0 16 16"><rect x="3" y="7" width="10" height="8" fill="#eee" stroke="#333" stroke-width="0.6"/><path d="M5 7V5Q5 2 8 2Q11 2 11 5V7" stroke="#eee" stroke-width="1.5" fill="none"/><rect x="7" y="10" width="2" height="2" fill="#555"/></svg>
<div style="left:357.3px;top:988.5px;width:224.7px;height:18.5px;background:#383838;border:1px solid #222;border-radius:9px"></div>
<div style="left:471.7px;top:989.5px;width:1px;height:16.5px;background:#222;"></div>
<svg style="position:absolute;left:362.3px;top:993.5px;overflow:visible;" width="6" height="8" viewBox="0 0 6 8"><path d="M5 0L0 4L5 8Z" fill="#bbb"/></svg>
<svg style="position:absolute;left:461.7px;top:993.5px;overflow:visible;" width="6" height="8" viewBox="0 0 6 8"><path d="M0 0L5 4L0 8Z" fill="#bbb"/></svg>
<div class="t" style="left:371.8px;top:991.59px;font-size:11px;color:#d8d8d8;letter-spacing:0.343px;">Start:</div>
<div class="t" style="right:1222.3px;top:991.59px;font-size:11px;color:#e0e0e0;letter-spacing:-0.117px;">0</div>
<svg style="position:absolute;left:476.7px;top:993.5px;overflow:visible;" width="6" height="8" viewBox="0 0 6 8"><path d="M5 0L0 4L5 8Z" fill="#bbb"/></svg>
<svg style="position:absolute;left:572px;top:993.5px;overflow:visible;" width="6" height="8" viewBox="0 0 6 8"><path d="M0 0L5 4L0 8Z" fill="#bbb"/></svg>
<div class="t" style="left:486.2px;top:991.59px;font-size:11px;color:#d8d8d8;letter-spacing:-0.209px;">End:</div>
<div class="t" style="right:1112px;top:991.59px;font-size:11px;color:#e0e0e0;letter-spacing:0.824px;">250</div>
<div style="left:590px;top:988.5px;width:87.3px;height:18.5px;background:#383838;border:1px solid #222;border-radius:9px"></div>
<svg style="position:absolute;left:596px;top:993.5px;overflow:visible;" width="6" height="8" viewBox="0 0 6 8"><path d="M5 0L0 4L5 8Z" fill="#bbb"/></svg>
<svg style="position:absolute;left:667px;top:993.5px;overflow:visible;" width="6" height="8" viewBox="0 0 6 8"><path d="M0 0L5 4L0 8Z" fill="#bbb"/></svg>
<div class="t" style="right:1017px;top:991.59px;font-size:11px;color:#e0e0e0;letter-spacing:0.766px;">22</div>
<div style="left:696px;top:988.5px;width:19.6px;height:18px;background:#4f4f4f;border:1px solid #1f1f1f;border-left-width:1px;border-radius:4px 0 0 4px;box-shadow:inset 1px 0 0 rgba(0,0,0,0.25)"></div>
<div style="left:715.6px;top:988.5px;width:19.6px;height:18px;background:#4f4f4f;border:1px solid #1f1f1f;border-left-width:0px;border-radius:0 0 0 0;box-shadow:inset 1px 0 0 rgba(0,0,0,0.25)"></div>
<div style="left:735.2px;top:988.5px;width:19.6px;height:18px;background:#4f4f4f;border:1px solid #1f1f1f;border-left-width:0px;border-radius:0 0 0 0;box-shadow:inset 1px 0 0 rgba(0,0,0,0.25)"></div>
<div style="left:754.8000000000001px;top:988.5px;width:19.6px;height:18px;background:#4f4f4f;border:1px solid #1f1f1f;border-left-width:0px;border-radius:0 0 0 0;box-shadow:inset 1px 0 0 rgba(0,0,0,0.25)"></div>
<div style="left:774.4000000000001px;top:988.5px;width:19.6px;height:18px;background:#4f4f4f;border:1px solid #1f1f1f;border-left-width:0px;border-radius:0 0 0 0;box-shadow:inset 1px 0 0 rgba(0,0,0,0.25)"></div>
<div style="left:794.0000000000001px;top:988.5px;width:19.6px;height:18px;background:#4f4f4f;border:1px solid #1f1f1f;border-left-width:0px;border-radius:0 4px 4px 0;box-shadow:inset 1px 0 0 rgba(0,0,0,0.25)"></div>
<svg style="position:absolute;left:698.3px;top:990px;overflow:visible;" width="15" height="15" viewBox="0 0 15 15"><path d="M2 3V13M14 3L7 8L14 13Z M8 3L2 8" fill="#eee" stroke="#eee" stroke-width="0.8"/></svg>
<svg style="position:absolute;left:717.9px;top:990px;overflow:visible;" width="15" height="15" viewBox="0 0 15 15"><path d="M8 3L2 8L8 13Z M14 3L8 8L14 13Z" fill="#eee" stroke="#eee" stroke-width="0.8"/></svg>
<svg style="position:absolute;left:737.5px;top:990px;overflow:visible;" width="15" height="15" viewBox="0 0 15 15"><path d="M12 2L3 8L12 14Z" fill="#eee" stroke="#eee" stroke-width="0.8"/></svg>
<svg style="position:absolute;left:757.0999999999999px;top:990px;overflow:visible;" width="15" height="15" viewBox="0 0 15 15"><path d="M4 2L13 8L4 14Z" fill="#eee" stroke="#eee" stroke-width="0.8"/></svg>
<svg style="position:absolute;left:776.6999999999999px;top:990px;overflow:visible;" width="15" height="15" viewBox="0 0 15 15"><path d="M2 3L8 8L2 13Z M8 3L14 8L8 13Z" fill="#eee" stroke="#eee" stroke-width="0.8"/></svg>
<svg style="position:absolute;left:796.3px;top:990px;overflow:visible;" width="15" height="15" viewBox="0 0 15 15"><path d="M14 3V13M2 3L9 8L2 13Z" fill="#eee" stroke="#eee" stroke-width="0.8"/></svg>
<div style="left:821px;top:988.5px;width:112px;height:18px;background:#3f5373;border:1px solid #1f1f1f;border-radius:4px;"></div>
<div class="t" style="left:828px;top:991.59px;font-size:11px;color:#ececec;letter-spacing:-0.095px;">No Sync</div>
<svg style="position:absolute;left:923px;top:990px;overflow:visible;" width="8" height="14" viewBox="0 0 8 14"><path d="M4 1L7 5.5H1Z M4 13L7 8.5H1Z" fill="#c8c8c8"/></svg>
<div style="left:952px;top:988.5px;width:18px;height:18px;background:#4f4f4f;border:1px solid #1f1f1f;border-left-width:1px;border-radius:4px 4px 4px 4px;box-shadow:inset 1px 0 0 rgba(0,0,0,0.25)"></div>
<svg style="position:absolute;left:953.5px;top:990.0px" width="15" height="15" viewBox="0 0 16 16"><circle cx="8" cy="8" r="5" fill="#e02a10" stroke="#f88" stroke-width="0.6"/></svg>
<div style="left:977px;top:988.5px;width:128.7px;height:18px;background:#4f4f4f;border:1px solid #1f1f1f;border-left-width:1px;border-radius:4px 0 0 4px;box-shadow:inset 1px 0 0 rgba(0,0,0,0.25)"></div>
<div style="left:1105.7px;top:988.5px;width:19.5px;height:18px;background:#4f4f4f;border:1px solid #1f1f1f;border-left-width:0px;border-radius:0 0 0 0;box-shadow:inset 1px 0 0 rgba(0,0,0,0.25)"></div>
<div style="left:1125.2px;top:988.5px;width:19.5px;height:18px;background:#4f4f4f;border:1px solid #1f1f1f;border-left-width:0px;border-radius:0 4px 4px 0;box-shadow:inset 1px 0 0 rgba(0,0,0,0.25)"></div>
<svg style="position:absolute;left:980px;top:990px" width="15" height="15" viewBox="0 0 16 16"><circle cx="4" cy="12" r="2.5" fill="none" stroke="#e8c040" stroke-width="1.2"/><path d="M4 9.5V1H6" stroke="#e8c040" stroke-width="1.2" fill="none"/><circle cx="10" cy="12" r="2.5" fill="none" stroke="#ddd" stroke-width="1.2"/><path d="M12 10L15 6" stroke="#ddd" stroke-width="1.2"/></svg>
<div class="t" style="left:1000px;top:991.59px;font-size:11px;color:#c8c8c8;letter-spacing:-0.037px;">LocRotScale</div>
<svg style="position:absolute;left:1092px;top:992px;overflow:visible;" width="10" height="10" viewBox="0 0 10 10"><path d="M1.5 1.5L8.5 8.5M8.5 1.5L1.5 8.5" stroke="#eee" stroke-width="2.2"/></svg>
<svg style="position:absolute;left:1108px;top:990px" width="15" height="15" viewBox="0 0 16 16"><circle cx="5" cy="12" r="2.5" fill="none" stroke="#eee" stroke-width="1.3"/><path d="M7 10L13 4" stroke="#eee" stroke-width="1.3"/><circle cx="13" cy="4" r="1.2" fill="#eee"/></svg>
<svg style="position:absolute;left:1127.5px;top:990px" width="15" height="15" viewBox="0 0 16 16"><circle cx="5" cy="12" r="2.5" fill="none" stroke="#eee" stroke-width="1.3"/><path d="M7 10L13 4" stroke="#eee" stroke-width="1.3"/><path d="M2 2L14 14M14 2L2 14" stroke="#e02020" stroke-width="1.3"/></svg>
</body></html>
